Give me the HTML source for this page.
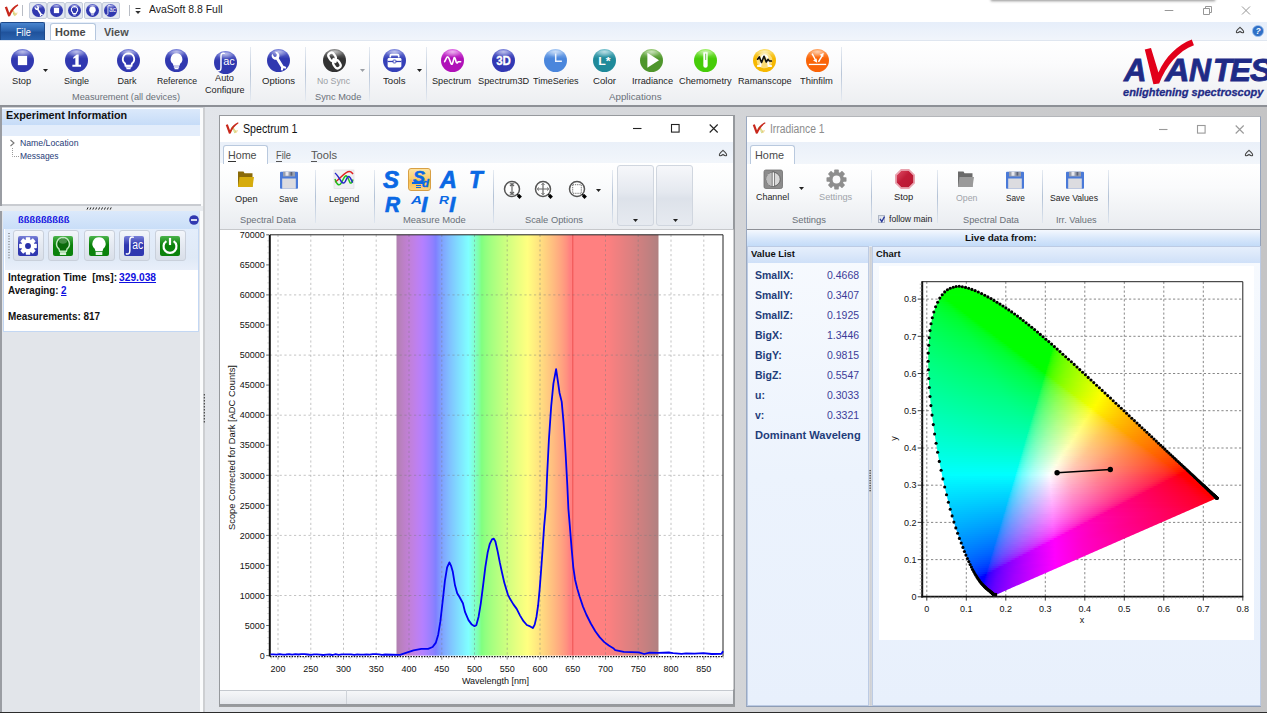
<!DOCTYPE html>
<html><head><meta charset="utf-8"><title>AvaSoft 8.8 Full</title>
<style>
html,body{margin:0;padding:0;overflow:hidden;}
#root{position:absolute;left:0;top:0;width:1267px;height:713px;overflow:hidden;background:#e2e5ea;}
body{width:1267px;height:713px;overflow:hidden;position:relative;background:#e2e5ea;font-family:"Liberation Sans",sans-serif;}
.b{position:absolute;box-sizing:border-box;}
.t{position:absolute;white-space:nowrap;transform-origin:0 50%;}
svg{position:absolute;overflow:visible;}
</style></head><body><div id="root">
<div class="b" style="left:0px;top:0px;width:1267px;height:22px;background:#fff;"></div>
<div class="b" style="left:992px;top:-3px;width:222px;height:3px;background:#999;box-shadow:0 0 2.500px 1.200px rgba(0,0,0,.380);"></div>
<div class="t" style="left:148.7px;top:3.0px;font-size:11px;line-height:13.2px;color:#1a1a1a;transform:scaleX(0.950);">AvaSoft 8.8 Full</div>
<div class="b" style="left:22px;top:5px;width:1px;height:11px;background:#b8bcc4;"></div>
<div class="b" style="left:129px;top:5px;width:1px;height:11px;background:#b8bcc4;"></div>
<div class="b" style="left:0px;top:22px;width:1267px;height:18px;background:linear-gradient(#e6eefa,#f1f5fb);"></div>
<div class="b" style="left:0px;top:22px;width:45px;height:18px;background:linear-gradient(#4a86cf,#2a62ad 45%,#1f529c 55%,#2b63ae);border-radius:2px 2px 0 0;border:1px solid #1d4a8c;border-bottom:none;"></div>
<div class="t" style="left:15.6px;top:25.8px;font-size:11px;line-height:13.2px;color:#fff;transform:scaleX(0.835);">File</div>
<div class="b" style="left:50px;top:23px;width:46px;height:18px;background:#fff;border:1px solid #b5c7de;border-bottom:none;border-radius:3px 3px 0 0;"></div>
<div class="t" style="left:55.0px;top:26.0px;font-size:11px;line-height:13.2px;color:#484848;font-weight:bold;transform:scaleX(0.998);">Home</div>
<div class="t" style="left:104.3px;top:26.0px;font-size:11px;line-height:13.2px;color:#505050;font-weight:bold;transform:scaleX(0.993);">View</div>
<div class="b" style="left:0px;top:40px;width:1267px;height:65.5px;background:linear-gradient(#ffffff,#fbfbfc 35%,#eceef1 100%);border-top:1px solid #dfe6f0;"></div>
<div class="b" style="left:0px;top:105.3px;width:1267px;height:1.7px;background:#8d9096;"></div>
<div class="b" style="left:0px;top:107px;width:1267px;height:2px;background:linear-gradient(#c9ccd1,#e2e5ea);"></div>
<div class="b" style="left:250.1px;top:47px;width:1px;height:54px;background:linear-gradient(#e6ebf2,#b9c6d8 50%,#e6ebf2);"></div>
<div class="b" style="left:304.5px;top:47px;width:1px;height:54px;background:linear-gradient(#e6ebf2,#b9c6d8 50%,#e6ebf2);"></div>
<div class="b" style="left:368.9px;top:47px;width:1px;height:54px;background:linear-gradient(#e6ebf2,#b9c6d8 50%,#e6ebf2);"></div>
<div class="b" style="left:425.8px;top:47px;width:1px;height:54px;background:linear-gradient(#e6ebf2,#b9c6d8 50%,#e6ebf2);"></div>
<div class="b" style="left:840.7px;top:47px;width:1px;height:54px;background:linear-gradient(#e6ebf2,#b9c6d8 50%,#e6ebf2);"></div>
<div class="t" style="left:11.6px;top:75.8px;font-size:9px;line-height:10.8px;color:#1e1e1e;transform:scaleX(1.032);">Stop</div>
<div class="t" style="left:63.8px;top:75.8px;font-size:9px;line-height:10.8px;color:#1e1e1e;transform:scaleX(0.999);">Single</div>
<div class="t" style="left:117.6px;top:75.8px;font-size:9px;line-height:10.8px;color:#1e1e1e;transform:scaleX(1.000);">Dark</div>
<div class="t" style="left:156.5px;top:75.8px;font-size:9px;line-height:10.8px;color:#1e1e1e;transform:scaleX(0.966);">Reference</div>
<div class="t" style="left:214.8px;top:73.2px;font-size:9px;line-height:10.8px;color:#1e1e1e;transform:scaleX(1.021);">Auto</div>
<div class="t" style="left:205.0px;top:84.6px;font-size:9px;line-height:10.8px;color:#1e1e1e;transform:scaleX(1.017);clip-path:inset(0 0 1.700px 0);">Configure</div>
<div class="t" style="left:261.5px;top:75.8px;font-size:9px;line-height:10.8px;color:#1e1e1e;transform:scaleX(1.064);">Options</div>
<div class="t" style="left:317.0px;top:75.8px;font-size:9px;line-height:10.8px;color:#9a9ea4;transform:scaleX(0.970);">No Sync</div>
<div class="t" style="left:383.3px;top:75.8px;font-size:9px;line-height:10.8px;color:#1e1e1e;transform:scaleX(1.071);">Tools</div>
<div class="t" style="left:431.8px;top:75.8px;font-size:9px;line-height:10.8px;color:#1e1e1e;transform:scaleX(1.018);">Spectrum</div>
<div class="t" style="left:477.6px;top:75.8px;font-size:9px;line-height:10.8px;color:#1e1e1e;transform:scaleX(1.024);">Spectrum3D</div>
<div class="t" style="left:533.0px;top:75.8px;font-size:9px;line-height:10.8px;color:#1e1e1e;transform:scaleX(1.007);">TimeSeries</div>
<div class="t" style="left:592.5px;top:75.8px;font-size:9px;line-height:10.8px;color:#1e1e1e;transform:scaleX(1.069);">Color</div>
<div class="t" style="left:631.5px;top:75.8px;font-size:9px;line-height:10.8px;color:#1e1e1e;transform:scaleX(1.025);">Irradiance</div>
<div class="t" style="left:679.3px;top:75.8px;font-size:9px;line-height:10.8px;color:#1e1e1e;transform:scaleX(1.023);">Chemometry</div>
<div class="t" style="left:737.7px;top:75.8px;font-size:9px;line-height:10.8px;color:#1e1e1e;transform:scaleX(1.011);">Ramanscope</div>
<div class="t" style="left:799.5px;top:75.8px;font-size:9px;line-height:10.8px;color:#1e1e1e;transform:scaleX(1.041);">Thinfilm</div>
<div class="t" style="left:71.5px;top:92.2px;font-size:9px;line-height:10.8px;color:#6a7078;transform:scaleX(1.023);">Measurement (all devices)</div>
<div class="t" style="left:314.5px;top:92.2px;font-size:9px;line-height:10.8px;color:#6a7078;transform:scaleX(1.028);">Sync Mode</div>
<div class="t" style="left:608.5px;top:92.2px;font-size:9px;line-height:10.8px;color:#6a7078;transform:scaleX(1.082);">Applications</div>
<svg style="left:43.3px;top:69.0px" width="5" height="3"><path d="M0 0h5L2.5 3z" fill="#222"/></svg>
<svg style="left:360.1px;top:69.0px" width="5" height="3"><path d="M0 0h5L2.5 3z" fill="#9a9ea4"/></svg>
<svg style="left:416.7px;top:69.0px" width="5" height="3"><path d="M0 0h5L2.5 3z" fill="#222"/></svg>
<svg style="left:1160px;top:3px" width="100" height="16"><path d="M4.7 7.5h8.6" stroke="#979797" stroke-width="1" fill="none"/><path d="M43.5 5.5h6v6h-6z M45.5 5.5v-2h6v6h-2" stroke="#979797" stroke-width="1" fill="none"/><path d="M82 3.5l8 8M90 3.5l-8 8" stroke="#979797" stroke-width="1" fill="none"/></svg>
<svg style="left:1235px;top:26px" width="10" height="8"><path d="M1.5 6.5c-1-1.5 1.5-3.5 3.5-5.2c2 1.7 4.500 3.7 3.5 5.2c-1 .5-2 .2-3.5-1c-1.500 1.200-2.500 1.500-3.500 1z" fill="none" stroke="#444" stroke-width="1.1"/></svg>
<svg style="left:1251.500px;top:24.5px" width="12" height="12"><circle cx="6" cy="6" r="5.6" fill="#2f6fc6" stroke="#9cc0ee" stroke-width="0.8"/><text x="6" y="9" font-size="8.500" font-weight="bold" font-style="italic" fill="#fff" text-anchor="middle" font-family="Liberation Sans">?</text></svg>
<div class="b" style="left:205px;top:107px;width:1062px;height:606px;background:linear-gradient(90deg,#e2e5ea,#c4c4c5);"></div>
<div class="b" style="left:0px;top:107px;width:2px;height:606px;background:#9a9da3;"></div>
<div class="b" style="left:2px;top:108px;width:199px;height:98px;background:#fff;"></div>
<div class="b" style="left:2px;top:108.5px;width:199px;height:16.5px;background:linear-gradient(#dbe9fb,#c6dcf8);"></div>
<div class="b" style="left:2px;top:125px;width:199px;height:10.8px;background:#e3edfb;"></div>
<div class="t" style="left:5.8px;top:109.2px;font-size:10.5px;line-height:12.6px;color:#111;font-weight:bold;transform:scaleX(1.028);">Experiment Information</div>
<div class="b" style="left:200.3px;top:108px;width:2.4px;height:605px;background:#fafbfc;"></div>
<div class="b" style="left:202.7px;top:108px;width:2.3px;height:605px;background:#cdcfd2;"></div>
<div class="b" style="left:2px;top:204px;width:199px;height:1.6px;background:#c9ccd1;"></div>
<div class="b" style="left:0px;top:205.5px;width:203px;height:5.5px;background:#e9ecf0;"></div>
<svg style="left:86px;top:206.5px" width="30" height="4"><path d="M1.0 2.6l1-2.2" stroke="#222" stroke-width="1"/><path d="M3.9 2.6l1-2.2" stroke="#222" stroke-width="1"/><path d="M6.8 2.6l1-2.2" stroke="#222" stroke-width="1"/><path d="M9.7 2.6l1-2.2" stroke="#222" stroke-width="1"/><path d="M12.6 2.6l1-2.2" stroke="#222" stroke-width="1"/><path d="M15.5 2.6l1-2.2" stroke="#222" stroke-width="1"/><path d="M18.4 2.6l1-2.2" stroke="#222" stroke-width="1"/><path d="M21.3 2.6l1-2.2" stroke="#222" stroke-width="1"/><path d="M24.2 2.6l1-2.2" stroke="#222" stroke-width="1"/></svg>
<div class="t" style="left:19.5px;top:137.6px;font-size:9px;line-height:10.8px;color:#1f3c78;transform:scaleX(0.966);">Name/Location</div>
<div class="t" style="left:19.5px;top:150.6px;font-size:9px;line-height:10.8px;color:#1f3c78;transform:scaleX(0.939);">Messages</div>
<svg style="left:9px;top:139px" width="8" height="8"><path d="M1.5 1l3.5 3l-3.500 3" stroke="#777" stroke-width="1.1" fill="none"/></svg>
<svg style="left:11px;top:148px" width="9" height="10"><path d="M1.5 0v8.500h7" stroke="#999" stroke-width="1" stroke-dasharray="1 1" fill="none"/></svg>
<div class="b" style="left:3.2px;top:211px;width:195.5px;height:120.5px;background:#fff;border:1.500px solid #c3d7f3;"></div>
<div class="b" style="left:3.2px;top:211px;width:195.5px;height:18px;background:linear-gradient(#dbe9fb,#c9def8);"></div>
<div class="b" style="left:4.5px;top:229px;width:193px;height:40.5px;background:linear-gradient(#e3edfb,#dfe9f6 70%,#e9effa);"></div>
<div class="t" style="left:17.5px;top:214.3px;font-size:9.5px;line-height:11.4px;color:#1010e0;font-weight:bold;transform:scaleX(0.986);">&#223;&#223;&#223;&#223;&#223;&#223;&#223;&#223;&#223;</div>
<svg style="left:189px;top:214.5px" width="10" height="10"><circle cx="5" cy="5" r="4.800" fill="#3038b0"/><rect x="2" y="4.200" width="6" height="1.600" fill="#fff"/></svg>
<svg style="left:7.500px;top:232px" width="3" height="28"><rect x="0.5" y="1.0" width="1" height="1" fill="#555"/><rect x="0.5" y="3.7" width="1" height="1" fill="#555"/><rect x="0.5" y="6.4" width="1" height="1" fill="#555"/><rect x="0.5" y="9.1" width="1" height="1" fill="#555"/><rect x="0.5" y="11.8" width="1" height="1" fill="#555"/><rect x="0.5" y="14.5" width="1" height="1" fill="#555"/><rect x="0.5" y="17.2" width="1" height="1" fill="#555"/><rect x="0.5" y="19.9" width="1" height="1" fill="#555"/><rect x="0.5" y="22.6" width="1" height="1" fill="#555"/><rect x="0.5" y="25.3" width="1" height="1" fill="#555"/></svg>
<div class="b" style="left:12.9px;top:230.3px;width:31px;height:31px;background:linear-gradient(#f3f6fb,#e4e9f1 50%,#d9dfe9);border:1px solid #c9d0db;border-radius:3px;"></div>
<div class="b" style="left:48.3px;top:230.3px;width:31px;height:31px;background:linear-gradient(#f3f6fb,#e4e9f1 50%,#d9dfe9);border:1px solid #c9d0db;border-radius:3px;"></div>
<div class="b" style="left:83.7px;top:230.3px;width:31px;height:31px;background:linear-gradient(#f3f6fb,#e4e9f1 50%,#d9dfe9);border:1px solid #c9d0db;border-radius:3px;"></div>
<div class="b" style="left:119.1px;top:230.3px;width:31px;height:31px;background:linear-gradient(#f3f6fb,#e4e9f1 50%,#d9dfe9);border:1px solid #c9d0db;border-radius:3px;"></div>
<div class="b" style="left:154.5px;top:230.3px;width:31px;height:31px;background:linear-gradient(#f3f6fb,#e4e9f1 50%,#d9dfe9);border:1px solid #c9d0db;border-radius:3px;"></div>
<div class="t" style="left:7.5px;top:271.9px;font-size:10px;line-height:12.0px;color:#111;font-weight:bold;transform:scaleX(1.013);">Integration Time&nbsp; [ms]:</div>
<div class="t" style="left:119.0px;top:271.9px;font-size:10px;line-height:12.0px;color:#1010e0;font-weight:bold;transform:scaleX(1.024);text-decoration:underline;">329.038</div>
<div class="t" style="left:7.5px;top:284.6px;font-size:10px;line-height:12.0px;color:#111;font-weight:bold;transform:scaleX(0.974);">Averaging:</div>
<div class="t" style="left:60.5px;top:284.6px;font-size:10px;line-height:12.0px;color:#1010e0;font-weight:bold;transform:scaleX(0.989);text-decoration:underline;">2</div>
<div class="t" style="left:7.5px;top:310.7px;font-size:10px;line-height:12.0px;color:#111;font-weight:bold;transform:scaleX(0.991);">Measurements: 817</div>
<svg style="left:202.5px;top:394px" width="3" height="30"><rect x="0.8" y="0" width="1" height="1.500" fill="#333"/><rect x="0.8" y="3" width="1" height="1.500" fill="#333"/><rect x="0.8" y="6" width="1" height="1.500" fill="#333"/><rect x="0.8" y="9" width="1" height="1.500" fill="#333"/><rect x="0.8" y="12" width="1" height="1.500" fill="#333"/><rect x="0.8" y="15" width="1" height="1.500" fill="#333"/><rect x="0.8" y="18" width="1" height="1.500" fill="#333"/><rect x="0.8" y="21" width="1" height="1.500" fill="#333"/><rect x="0.8" y="24" width="1" height="1.500" fill="#333"/><rect x="0.8" y="27" width="1" height="1.500" fill="#333"/></svg>
<div class="b" style="left:0px;top:711.6px;width:1267px;height:1.4px;background:#2c2c2c;"></div>
<div class="b" style="left:218.7px;top:114.7px;width:516.8px;height:592.3px;background:#9b9c9e;"></div>
<div class="b" style="left:219px;top:115px;width:515.5px;height:590.5px;background:#fff;border:1px solid #96999d;border-right-width:2px;border-bottom-width:2px;"></div>
<div class="t" style="left:243.0px;top:121.6px;font-size:12px;line-height:14.4px;color:#111;transform:scaleX(0.888);">Spectrum 1</div>
<div class="b" style="left:220px;top:141.5px;width:512.5px;height:21.5px;background:linear-gradient(#eaf0f9,#f2f6fb);"></div>
<div class="b" style="left:220px;top:163px;width:512.5px;height:65.5px;background:linear-gradient(#ffffff,#fafbfc 35%,#e9ecf0 100%);"></div>
<div class="b" style="left:220px;top:228.5px;width:512.5px;height:1.5px;background:#8d9096;"></div>
<svg style="left:629.5px;top:121px" width="100" height="16"><path d="M3 7.5h8.500" stroke="#222" stroke-width="1.100" fill="none"/><rect x="41.500" y="3.500" width="7.600" height="7.600" stroke="#222" stroke-width="1.100" fill="none"/><path d="M79.700 3.500l8 8M87.700 3.500l-8 8" stroke="#222" stroke-width="1.100" fill="none"/></svg>
<svg style="left:718.0px;top:148.5px" width="10" height="8"><path d="M1.5 6.5c-1-1.5 1.5-3.5 3.5-5.2c2 1.7 4.500 3.700 3.500 5.200c-1 .5-2 .2-3.500-1c-1.500 1.200-2.500 1.500-3.500 1z" fill="none" stroke="#444" stroke-width="1.1"/></svg>
<div class="b" style="left:746px;top:115.8px;width:514.6px;height:591.2px;background:#fff;border:1px solid #9aa9c2;border-top-color:#b4b6ba;border-right-color:#93a2bb;border-bottom-color:#8e9db6;"></div>
<div class="t" style="left:770.0px;top:122.4px;font-size:12px;line-height:14.4px;color:#8c8c8c;transform:scaleX(0.860);">Irradiance 1</div>
<div class="b" style="left:747px;top:142.3px;width:512.6px;height:21.5px;background:linear-gradient(#eaf0f9,#f2f6fb);"></div>
<div class="b" style="left:747px;top:163.8px;width:512.6px;height:65.5px;background:linear-gradient(#ffffff,#fafbfc 35%,#e9ecf0 100%);"></div>
<div class="b" style="left:747px;top:229.3px;width:512.6px;height:1.5px;background:#8d9096;"></div>
<svg style="left:1155.6px;top:121.8px" width="100" height="16"><path d="M3 7.5h8.500" stroke="#9a9a9a" stroke-width="1.100" fill="none"/><rect x="41.500" y="3.500" width="7.600" height="7.600" stroke="#9a9a9a" stroke-width="1.100" fill="none"/><path d="M79.700 3.500l8 8M87.700 3.500l-8 8" stroke="#9a9a9a" stroke-width="1.100" fill="none"/></svg>
<svg style="left:1244.1px;top:149.3px" width="10" height="8"><path d="M1.5 6.5c-1-1.5 1.5-3.5 3.5-5.2c2 1.7 4.500 3.700 3.500 5.200c-1 .5-2 .2-3.500-1c-1.500 1.200-2.500 1.500-3.500 1z" fill="none" stroke="#444" stroke-width="1.1"/></svg>
<div class="b" style="left:223px;top:144.5px;width:45px;height:19.5px;background:#fff;border:1px solid #b9c9de;border-bottom:none;border-radius:3px 3px 0 0;"></div>
<div class="t" style="left:228.0px;top:149.1px;font-size:11.5px;line-height:13.8px;color:#4a4a4a;transform:scaleX(0.929);">Home</div>
<div class="b" style="left:228px;top:160.5px;width:7.5px;height:0.9px;background:#333;"></div>
<div class="t" style="left:276.0px;top:149.1px;font-size:11.5px;line-height:13.8px;color:#555;transform:scaleX(0.810);">File</div>
<div class="b" style="left:276px;top:160.5px;width:5.5px;height:0.9px;background:#555;"></div>
<div class="t" style="left:310.5px;top:149.1px;font-size:11.5px;line-height:13.8px;color:#555;transform:scaleX(0.969);">Tools</div>
<div class="b" style="left:310.5px;top:160.5px;width:6px;height:0.9px;background:#555;"></div>
<div class="b" style="left:315.3px;top:170px;width:1px;height:53px;background:linear-gradient(#e6ebf2,#b3c2d6 50%,#dfe6ef);"></div>
<div class="b" style="left:373.9px;top:170px;width:1px;height:53px;background:linear-gradient(#e6ebf2,#b3c2d6 50%,#dfe6ef);"></div>
<div class="b" style="left:492.8px;top:170px;width:1px;height:53px;background:linear-gradient(#e6ebf2,#b3c2d6 50%,#dfe6ef);"></div>
<div class="b" style="left:612.3px;top:170px;width:1px;height:53px;background:linear-gradient(#e6ebf2,#b3c2d6 50%,#dfe6ef);"></div>
<div class="t" style="left:234.5px;top:193.8px;font-size:9px;line-height:10.8px;color:#1e1e1e;transform:scaleX(1.022);">Open</div>
<div class="t" style="left:279.0px;top:193.8px;font-size:9px;line-height:10.8px;color:#1e1e1e;transform:scaleX(0.926);">Save</div>
<div class="t" style="left:329.0px;top:193.8px;font-size:9px;line-height:10.8px;color:#1e1e1e;transform:scaleX(1.006);">Legend</div>
<div class="t" style="left:239.6px;top:214.5px;font-size:9px;line-height:10.8px;color:#6a7078;transform:scaleX(1.023);">Spectral Data</div>
<div class="t" style="left:403.4px;top:214.5px;font-size:9px;line-height:10.8px;color:#6a7078;transform:scaleX(1.046);">Measure Mode</div>
<div class="t" style="left:524.5px;top:214.5px;font-size:9px;line-height:10.8px;color:#6a7078;transform:scaleX(1.035);">Scale Options</div>
<svg style="left:595.5px;top:188.7px" width="5" height="3"><path d="M0 0h5L2.5 3z" fill="#222"/></svg>
<div class="b" style="left:617px;top:165.3px;width:36.8px;height:60.7px;background:linear-gradient(#f6f7fa,#e4e8ef 45%,#dde2ea 55%,#e6eaf0);border:1px solid #d0d6df;border-radius:3px;"></div>
<svg style="left:633.1px;top:219.3px" width="5" height="3"><path d="M0 0h5L2.5 3z" fill="#222"/></svg>
<div class="b" style="left:656.4px;top:165.3px;width:36.8px;height:60.7px;background:linear-gradient(#f6f7fa,#e4e8ef 45%,#dde2ea 55%,#e6eaf0);border:1px solid #d0d6df;border-radius:3px;"></div>
<svg style="left:672.5px;top:219.3px" width="5" height="3"><path d="M0 0h5L2.5 3z" fill="#222"/></svg>
<div class="b" style="left:220px;top:689.5px;width:512.5px;height:14.5px;background:linear-gradient(#f6f7f9,#e4e7ec);border-top:1px solid #c5c9cf;"></div>
<div class="b" style="left:345.5px;top:690px;width:1px;height:14px;background:#cfd3d9;"></div>
<div class="b" style="left:750px;top:144.5px;width:45px;height:19.5px;background:#fff;border:1px solid #b9c9de;border-bottom:none;border-radius:3px 3px 0 0;"></div>
<div class="t" style="left:755.0px;top:149.4px;font-size:11.5px;line-height:13.8px;color:#4a4a4a;transform:scaleX(0.945);">Home</div>
<div class="b" style="left:871.0px;top:170px;width:1px;height:53px;background:linear-gradient(#e6ebf2,#b3c2d6 50%,#dfe6ef);"></div>
<div class="b" style="left:936.9px;top:170px;width:1px;height:53px;background:linear-gradient(#e6ebf2,#b3c2d6 50%,#dfe6ef);"></div>
<div class="b" style="left:1042.1px;top:170px;width:1px;height:53px;background:linear-gradient(#e6ebf2,#b3c2d6 50%,#dfe6ef);"></div>
<div class="b" style="left:1108.2px;top:170px;width:1px;height:53px;background:linear-gradient(#e6ebf2,#b3c2d6 50%,#dfe6ef);"></div>
<div class="t" style="left:756.0px;top:192.1px;font-size:9px;line-height:10.8px;color:#1e1e1e;transform:scaleX(0.990);">Channel</div>
<div class="t" style="left:819.0px;top:192.1px;font-size:9px;line-height:10.8px;color:#a0a4aa;transform:scaleX(1.021);">Settings</div>
<div class="t" style="left:894.0px;top:192.1px;font-size:9px;line-height:10.8px;color:#1e1e1e;transform:scaleX(1.042);">Stop</div>
<div class="t" style="left:956.3px;top:192.6px;font-size:9px;line-height:10.8px;color:#a0a4aa;transform:scaleX(0.977);">Open</div>
<div class="t" style="left:1005.5px;top:192.6px;font-size:9px;line-height:10.8px;color:#1e1e1e;transform:scaleX(0.916);">Save</div>
<div class="t" style="left:1050.2px;top:192.6px;font-size:9px;line-height:10.8px;color:#1e1e1e;transform:scaleX(0.963);">Save Values</div>
<div class="t" style="left:792.0px;top:215.1px;font-size:9px;line-height:10.8px;color:#6a7078;transform:scaleX(1.046);">Settings</div>
<div class="t" style="left:889.0px;top:213.8px;font-size:9px;line-height:10.8px;color:#1e1e1e;transform:scaleX(0.960);">follow main</div>
<div class="t" style="left:962.5px;top:215.1px;font-size:9px;line-height:10.8px;color:#6a7078;transform:scaleX(1.027);">Spectral Data</div>
<div class="t" style="left:1055.7px;top:215.1px;font-size:9px;line-height:10.8px;color:#6a7078;transform:scaleX(1.019);">Irr. Values</div>
<svg style="left:798.7px;top:187.0px" width="5" height="3"><path d="M0 0h5L2.5 3z" fill="#222"/></svg>
<div class="b" style="left:877.5px;top:215.3px;width:7.8px;height:7.8px;background:linear-gradient(135deg,#d8dde6,#f4f6fa);border:1px solid #aeb6c4;"></div>
<svg style="left:878.5px;top:216px" width="7" height="7"><path d="M1 2.800l1.800 2.800l2.700-5" stroke="#2a3a9a" stroke-width="1.300" fill="none"/></svg>
<div class="b" style="left:747px;top:230px;width:513px;height:16px;background:linear-gradient(#f4f8fe,#d9e8fb 50%,#c3dbf8);"></div>
<div class="t" style="left:965.0px;top:232.3px;font-size:9.5px;line-height:11.4px;color:#111;font-weight:bold;transform:scaleX(1.050);">Live data from:</div>
<div class="b" style="left:747px;top:246px;width:513px;height:459px;background:#dde8f6;"></div>
<div class="b" style="left:747px;top:246px;width:122px;height:460.2px;background:linear-gradient(#f7fafe,#ecf3fd 50%,#e8f0fc);border:1px solid #bccbe4;"></div>
<div class="b" style="left:748px;top:246.5px;width:120px;height:16px;background:linear-gradient(#e6effc,#cfe0f8);"></div>
<div class="t" style="left:750.5px;top:248.1px;font-size:9.5px;line-height:11.4px;color:#111;font-weight:bold;transform:scaleX(0.992);">Value List</div>
<div class="b" style="left:871.5px;top:246px;width:389px;height:460.2px;background:linear-gradient(#f7fafe,#ecf3fd 50%,#e8f0fc);border:1px solid #bccbe4;"></div>
<div class="b" style="left:872.5px;top:246.5px;width:387.5px;height:16px;background:linear-gradient(#e6effc,#cfe0f8);"></div>
<div class="t" style="left:876.0px;top:248.1px;font-size:9.5px;line-height:11.4px;color:#111;font-weight:bold;transform:scaleX(0.988);">Chart</div>
<div class="b" style="left:878.6px;top:266px;width:375.4px;height:374px;background:#fff;"></div>
<div class="b" style="left:869.4px;top:246.5px;width:2.5px;height:459px;background:linear-gradient(90deg,#e4e6ea,#cfd0d3 40%,#d6d8dc);"></div>
<svg style="left:869.3px;top:470px" width="3" height="24"><rect x="0.5" y="0.0" width="1.200" height="1.300" fill="#333"/><rect x="0.5" y="2.5" width="1.200" height="1.300" fill="#333"/><rect x="0.5" y="5.0" width="1.200" height="1.300" fill="#333"/><rect x="0.5" y="7.5" width="1.200" height="1.300" fill="#333"/><rect x="0.5" y="10.0" width="1.200" height="1.300" fill="#333"/><rect x="0.5" y="12.5" width="1.200" height="1.300" fill="#333"/><rect x="0.5" y="15.0" width="1.200" height="1.300" fill="#333"/><rect x="0.5" y="17.5" width="1.200" height="1.300" fill="#333"/><rect x="0.5" y="20.0" width="1.200" height="1.300" fill="#333"/></svg>
<div class="t" style="left:755.4px;top:269.3px;font-size:11px;line-height:13.2px;color:#1f3d7a;font-weight:bold;transform:scaleX(0.955);">SmallX:</div>
<div class="t" style="left:827.4px;top:269.3px;font-size:11px;line-height:13.2px;color:#3c3c98;transform:scaleX(0.954);">0.4668</div>
<div class="t" style="left:755.4px;top:289.2px;font-size:11px;line-height:13.2px;color:#1f3d7a;font-weight:bold;transform:scaleX(0.955);">SmallY:</div>
<div class="t" style="left:827.4px;top:289.2px;font-size:11px;line-height:13.2px;color:#3c3c98;transform:scaleX(0.954);">0.3407</div>
<div class="t" style="left:755.4px;top:309.2px;font-size:11px;line-height:13.2px;color:#1f3d7a;font-weight:bold;transform:scaleX(0.955);">SmallZ:</div>
<div class="t" style="left:827.4px;top:309.2px;font-size:11px;line-height:13.2px;color:#3c3c98;transform:scaleX(0.954);">0.1925</div>
<div class="t" style="left:755.4px;top:329.1px;font-size:11px;line-height:13.2px;color:#1f3d7a;font-weight:bold;transform:scaleX(0.955);">BigX:</div>
<div class="t" style="left:827.4px;top:329.1px;font-size:11px;line-height:13.2px;color:#3c3c98;transform:scaleX(0.954);">1.3446</div>
<div class="t" style="left:755.4px;top:349.0px;font-size:11px;line-height:13.2px;color:#1f3d7a;font-weight:bold;transform:scaleX(0.955);">BigY:</div>
<div class="t" style="left:827.4px;top:349.0px;font-size:11px;line-height:13.2px;color:#3c3c98;transform:scaleX(0.954);">0.9815</div>
<div class="t" style="left:755.4px;top:368.9px;font-size:11px;line-height:13.2px;color:#1f3d7a;font-weight:bold;transform:scaleX(0.955);">BigZ:</div>
<div class="t" style="left:827.4px;top:368.9px;font-size:11px;line-height:13.2px;color:#3c3c98;transform:scaleX(0.954);">0.5547</div>
<div class="t" style="left:755.4px;top:388.9px;font-size:11px;line-height:13.2px;color:#1f3d7a;font-weight:bold;transform:scaleX(0.955);">u:</div>
<div class="t" style="left:827.4px;top:388.9px;font-size:11px;line-height:13.2px;color:#3c3c98;transform:scaleX(0.954);">0.3033</div>
<div class="t" style="left:755.4px;top:408.8px;font-size:11px;line-height:13.2px;color:#1f3d7a;font-weight:bold;transform:scaleX(0.955);">v:</div>
<div class="t" style="left:827.4px;top:408.8px;font-size:11px;line-height:13.2px;color:#3c3c98;transform:scaleX(0.954);">0.3321</div>
<div class="t" style="left:755.4px;top:428.7px;font-size:11px;line-height:13.2px;color:#1f3d7a;font-weight:bold;transform:scaleX(1.009);">Dominant Waveleng</div>
<svg style="left:215px;top:226px" width="520" height="480" font-family="Liberation Sans, sans-serif"><defs><linearGradient id="spg" x1="0" x2="1" y1="0" y2="0"><stop offset="0.0000" stop-color="#b080b0"/><stop offset="0.0125" stop-color="#b780bb"/><stop offset="0.0250" stop-color="#bc80c6"/><stop offset="0.0375" stop-color="#bf80d0"/><stop offset="0.0500" stop-color="#c180da"/><stop offset="0.0625" stop-color="#c080e3"/><stop offset="0.0750" stop-color="#be80ed"/><stop offset="0.0875" stop-color="#ba80f6"/><stop offset="0.1000" stop-color="#b480ff"/><stop offset="0.1125" stop-color="#aa80ff"/><stop offset="0.1250" stop-color="#9e80ff"/><stop offset="0.1375" stop-color="#9180ff"/><stop offset="0.1500" stop-color="#8080ff"/><stop offset="0.1625" stop-color="#8094ff"/><stop offset="0.1750" stop-color="#80a3ff"/><stop offset="0.1875" stop-color="#80b0ff"/><stop offset="0.2000" stop-color="#80bdff"/><stop offset="0.2125" stop-color="#80c9ff"/><stop offset="0.2250" stop-color="#80d4ff"/><stop offset="0.2375" stop-color="#80dfff"/><stop offset="0.2500" stop-color="#80eaff"/><stop offset="0.2625" stop-color="#80f5ff"/><stop offset="0.2750" stop-color="#80ffff"/><stop offset="0.2875" stop-color="#80ffe5"/><stop offset="0.3000" stop-color="#80ffc9"/><stop offset="0.3125" stop-color="#80ffaa"/><stop offset="0.3250" stop-color="#80ff80"/><stop offset="0.3375" stop-color="#8fff80"/><stop offset="0.3500" stop-color="#9aff80"/><stop offset="0.3625" stop-color="#a5ff80"/><stop offset="0.3750" stop-color="#aeff80"/><stop offset="0.3875" stop-color="#b7ff80"/><stop offset="0.4000" stop-color="#c0ff80"/><stop offset="0.4125" stop-color="#c9ff80"/><stop offset="0.4250" stop-color="#d1ff80"/><stop offset="0.4375" stop-color="#d9ff80"/><stop offset="0.4500" stop-color="#e1ff80"/><stop offset="0.4625" stop-color="#e9ff80"/><stop offset="0.4750" stop-color="#f0ff80"/><stop offset="0.4875" stop-color="#f8ff80"/><stop offset="0.5000" stop-color="#ffff80"/><stop offset="0.5125" stop-color="#fff780"/><stop offset="0.5250" stop-color="#ffef80"/><stop offset="0.5375" stop-color="#ffe780"/><stop offset="0.5500" stop-color="#ffdf80"/><stop offset="0.5625" stop-color="#ffd680"/><stop offset="0.5750" stop-color="#ffcd80"/><stop offset="0.5875" stop-color="#ffc480"/><stop offset="0.6000" stop-color="#ffbb80"/><stop offset="0.6125" stop-color="#ffb180"/><stop offset="0.6250" stop-color="#ffa780"/><stop offset="0.6375" stop-color="#ff9c80"/><stop offset="0.6500" stop-color="#ff9080"/><stop offset="0.6625" stop-color="#ff8080"/><stop offset="0.6750" stop-color="#ff8080"/><stop offset="0.6875" stop-color="#ff8080"/><stop offset="0.7000" stop-color="#ff8080"/><stop offset="0.7125" stop-color="#ff8080"/><stop offset="0.7250" stop-color="#ff8080"/><stop offset="0.7375" stop-color="#ff8080"/><stop offset="0.7500" stop-color="#ff8080"/><stop offset="0.7625" stop-color="#ff8080"/><stop offset="0.7750" stop-color="#ff8080"/><stop offset="0.7875" stop-color="#ff8080"/><stop offset="0.8000" stop-color="#ff8080"/><stop offset="0.8125" stop-color="#fb8080"/><stop offset="0.8250" stop-color="#f68080"/><stop offset="0.8375" stop-color="#f18080"/><stop offset="0.8500" stop-color="#ed8080"/><stop offset="0.8625" stop-color="#e88080"/><stop offset="0.8750" stop-color="#e38080"/><stop offset="0.8875" stop-color="#df8080"/><stop offset="0.9000" stop-color="#da8080"/><stop offset="0.9125" stop-color="#d58080"/><stop offset="0.9250" stop-color="#d08080"/><stop offset="0.9375" stop-color="#cb8080"/><stop offset="0.9500" stop-color="#c68080"/><stop offset="0.9625" stop-color="#c18080"/><stop offset="0.9750" stop-color="#bb8080"/><stop offset="0.9875" stop-color="#b68080"/><stop offset="1.0000" stop-color="#b08080"/></linearGradient></defs><rect x="5.0" y="3.5" width="513.5" height="460" fill="#fff"/><rect x="181.5" y="8.8" width="262.0" height="420.8" fill="url(#spg)"/><g stroke-width="0.9" stroke-dasharray="2.2 2.600" fill="none"><path d="M63.0 8.8V429.6" stroke="#7a7a7a" stroke-opacity="0.5"/><path d="M95.8 8.8V429.6" stroke="#7a7a7a" stroke-opacity="0.5"/><path d="M128.5 8.8V429.6" stroke="#7a7a7a" stroke-opacity="0.5"/><path d="M161.2 8.8V429.6" stroke="#7a7a7a" stroke-opacity="0.5"/><path d="M194.0 8.8V429.6" stroke="#7a7a7a" stroke-opacity="0.5"/><path d="M226.8 8.8V429.6" stroke="#7a7a7a" stroke-opacity="0.5"/><path d="M259.5 8.8V429.6" stroke="#7a7a7a" stroke-opacity="0.5"/><path d="M292.2 8.8V429.6" stroke="#7a7a7a" stroke-opacity="0.5"/><path d="M325.0 8.8V429.6" stroke="#7a7a7a" stroke-opacity="0.5"/><path d="M390.5 8.8V429.6" stroke="#7a7a7a" stroke-opacity="0.5"/><path d="M423.2 8.8V429.6" stroke="#7a7a7a" stroke-opacity="0.5"/><path d="M456.0 8.8V429.6" stroke="#7a7a7a" stroke-opacity="0.5"/><path d="M488.8 8.8V429.6" stroke="#7a7a7a" stroke-opacity="0.5"/><path d="M55.0 369.5H508.0" stroke="#7a7a7a" stroke-opacity="0.5"/><path d="M55.0 309.4H508.0" stroke="#7a7a7a" stroke-opacity="0.5"/><path d="M55.0 249.3H508.0" stroke="#7a7a7a" stroke-opacity="0.5"/><path d="M55.0 189.2H508.0" stroke="#7a7a7a" stroke-opacity="0.5"/><path d="M55.0 129.1H508.0" stroke="#7a7a7a" stroke-opacity="0.5"/><path d="M55.0 68.9H508.0" stroke="#7a7a7a" stroke-opacity="0.5"/></g><path d="M357.8 8.8V429.6" stroke="#e02828" stroke-opacity="0.600" stroke-width="0.900"/><path d="M54.8 8.8V430.6" stroke="#111" stroke-width="2"/><path d="M55.0 8.8H508.0V430.6" stroke="#222" stroke-width="1" fill="none"/><path d="M55.0 430.6H508.0" stroke="#111" stroke-width="1.2" stroke-dasharray="1.500 1.200"/><text x="49.8" y="432.8" font-size="9" text-anchor="end" fill="#111">0</text><text x="49.8" y="402.7" font-size="9" text-anchor="end" fill="#111">5000</text><text x="49.8" y="372.7" font-size="9" text-anchor="end" fill="#111">10000</text><text x="49.8" y="342.6" font-size="9" text-anchor="end" fill="#111">15000</text><text x="49.8" y="312.6" font-size="9" text-anchor="end" fill="#111">20000</text><text x="49.8" y="282.5" font-size="9" text-anchor="end" fill="#111">25000</text><text x="49.8" y="252.5" font-size="9" text-anchor="end" fill="#111">30000</text><text x="49.8" y="222.4" font-size="9" text-anchor="end" fill="#111">35000</text><text x="49.8" y="192.4" font-size="9" text-anchor="end" fill="#111">40000</text><text x="49.8" y="162.3" font-size="9" text-anchor="end" fill="#111">45000</text><text x="49.8" y="132.2" font-size="9" text-anchor="end" fill="#111">50000</text><text x="49.8" y="102.2" font-size="9" text-anchor="end" fill="#111">55000</text><text x="49.8" y="72.1" font-size="9" text-anchor="end" fill="#111">60000</text><text x="49.8" y="42.1" font-size="9" text-anchor="end" fill="#111">65000</text><text x="49.8" y="12.0" font-size="9" text-anchor="end" fill="#111">70000</text><text x="63.0" y="446.2" font-size="9" text-anchor="middle" fill="#111">200</text><text x="95.8" y="446.2" font-size="9" text-anchor="middle" fill="#111">250</text><text x="128.5" y="446.2" font-size="9" text-anchor="middle" fill="#111">300</text><text x="161.2" y="446.2" font-size="9" text-anchor="middle" fill="#111">350</text><text x="194.0" y="446.2" font-size="9" text-anchor="middle" fill="#111">400</text><text x="226.8" y="446.2" font-size="9" text-anchor="middle" fill="#111">450</text><text x="259.5" y="446.2" font-size="9" text-anchor="middle" fill="#111">500</text><text x="292.2" y="446.2" font-size="9" text-anchor="middle" fill="#111">550</text><text x="325.0" y="446.2" font-size="9" text-anchor="middle" fill="#111">600</text><text x="357.8" y="446.2" font-size="9" text-anchor="middle" fill="#111">650</text><text x="390.5" y="446.2" font-size="9" text-anchor="middle" fill="#111">700</text><text x="423.2" y="446.2" font-size="9" text-anchor="middle" fill="#111">750</text><text x="456.0" y="446.2" font-size="9" text-anchor="middle" fill="#111">800</text><text x="488.8" y="446.2" font-size="9" text-anchor="middle" fill="#111">850</text><path d="M51.2 429.6H54.0" stroke="#555" stroke-width="0.9"/><path d="M51.2 399.5H54.0" stroke="#555" stroke-width="0.9"/><path d="M51.2 369.5H54.0" stroke="#555" stroke-width="0.9"/><path d="M51.2 339.4H54.0" stroke="#555" stroke-width="0.9"/><path d="M51.2 309.4H54.0" stroke="#555" stroke-width="0.9"/><path d="M51.2 279.3H54.0" stroke="#555" stroke-width="0.9"/><path d="M51.2 249.3H54.0" stroke="#555" stroke-width="0.9"/><path d="M51.2 219.2H54.0" stroke="#555" stroke-width="0.9"/><path d="M51.2 189.2H54.0" stroke="#555" stroke-width="0.9"/><path d="M51.2 159.1H54.0" stroke="#555" stroke-width="0.9"/><path d="M51.2 129.1H54.0" stroke="#555" stroke-width="0.9"/><path d="M51.2 99.0H54.0" stroke="#555" stroke-width="0.9"/><path d="M51.2 68.9H54.0" stroke="#555" stroke-width="0.9"/><path d="M51.2 38.9H54.0" stroke="#555" stroke-width="0.9"/><path d="M51.2 8.8H54.0" stroke="#555" stroke-width="0.9"/><path d="M52.5 423.6H54.0" stroke="#999" stroke-width="0.600"/><path d="M52.5 417.6H54.0" stroke="#999" stroke-width="0.600"/><path d="M52.5 411.6H54.0" stroke="#999" stroke-width="0.600"/><path d="M52.5 405.6H54.0" stroke="#999" stroke-width="0.600"/><path d="M52.5 393.5H54.0" stroke="#999" stroke-width="0.600"/><path d="M52.5 387.5H54.0" stroke="#999" stroke-width="0.600"/><path d="M52.5 381.5H54.0" stroke="#999" stroke-width="0.600"/><path d="M52.5 375.5H54.0" stroke="#999" stroke-width="0.600"/><path d="M52.5 363.5H54.0" stroke="#999" stroke-width="0.600"/><path d="M52.5 357.5H54.0" stroke="#999" stroke-width="0.600"/><path d="M52.5 351.5H54.0" stroke="#999" stroke-width="0.600"/><path d="M52.5 345.4H54.0" stroke="#999" stroke-width="0.600"/><path d="M52.5 333.4H54.0" stroke="#999" stroke-width="0.600"/><path d="M52.5 327.4H54.0" stroke="#999" stroke-width="0.600"/><path d="M52.5 321.4H54.0" stroke="#999" stroke-width="0.600"/><path d="M52.5 315.4H54.0" stroke="#999" stroke-width="0.600"/><path d="M52.5 303.4H54.0" stroke="#999" stroke-width="0.600"/><path d="M52.5 297.4H54.0" stroke="#999" stroke-width="0.600"/><path d="M52.5 291.3H54.0" stroke="#999" stroke-width="0.600"/><path d="M52.5 285.3H54.0" stroke="#999" stroke-width="0.600"/><path d="M52.5 273.3H54.0" stroke="#999" stroke-width="0.600"/><path d="M52.5 267.3H54.0" stroke="#999" stroke-width="0.600"/><path d="M52.5 261.3H54.0" stroke="#999" stroke-width="0.600"/><path d="M52.5 255.3H54.0" stroke="#999" stroke-width="0.600"/><path d="M52.5 243.3H54.0" stroke="#999" stroke-width="0.600"/><path d="M52.5 237.2H54.0" stroke="#999" stroke-width="0.600"/><path d="M52.5 231.2H54.0" stroke="#999" stroke-width="0.600"/><path d="M52.5 225.2H54.0" stroke="#999" stroke-width="0.600"/><path d="M52.5 213.2H54.0" stroke="#999" stroke-width="0.600"/><path d="M52.5 207.2H54.0" stroke="#999" stroke-width="0.600"/><path d="M52.5 201.2H54.0" stroke="#999" stroke-width="0.600"/><path d="M52.5 195.2H54.0" stroke="#999" stroke-width="0.600"/><path d="M52.5 183.1H54.0" stroke="#999" stroke-width="0.600"/><path d="M52.5 177.1H54.0" stroke="#999" stroke-width="0.600"/><path d="M52.5 171.1H54.0" stroke="#999" stroke-width="0.600"/><path d="M52.5 165.1H54.0" stroke="#999" stroke-width="0.600"/><path d="M52.5 153.1H54.0" stroke="#999" stroke-width="0.600"/><path d="M52.5 147.1H54.0" stroke="#999" stroke-width="0.600"/><path d="M52.5 141.1H54.0" stroke="#999" stroke-width="0.600"/><path d="M52.5 135.1H54.0" stroke="#999" stroke-width="0.600"/><path d="M52.5 123.0H54.0" stroke="#999" stroke-width="0.600"/><path d="M52.5 117.0H54.0" stroke="#999" stroke-width="0.600"/><path d="M52.5 111.0H54.0" stroke="#999" stroke-width="0.600"/><path d="M52.5 105.0H54.0" stroke="#999" stroke-width="0.600"/><path d="M52.5 93.0H54.0" stroke="#999" stroke-width="0.600"/><path d="M52.5 87.0H54.0" stroke="#999" stroke-width="0.600"/><path d="M52.5 81.0H54.0" stroke="#999" stroke-width="0.600"/><path d="M52.5 75.0H54.0" stroke="#999" stroke-width="0.600"/><path d="M52.5 62.9H54.0" stroke="#999" stroke-width="0.600"/><path d="M52.5 56.9H54.0" stroke="#999" stroke-width="0.600"/><path d="M52.5 50.9H54.0" stroke="#999" stroke-width="0.600"/><path d="M52.5 44.9H54.0" stroke="#999" stroke-width="0.600"/><path d="M52.5 32.9H54.0" stroke="#999" stroke-width="0.600"/><path d="M52.5 26.9H54.0" stroke="#999" stroke-width="0.600"/><path d="M52.5 20.9H54.0" stroke="#999" stroke-width="0.600"/><path d="M52.5 14.8H54.0" stroke="#999" stroke-width="0.600"/><path d="M56.4 431.1v1.500" stroke="#999" stroke-width="0.600"/><path d="M63.0 431.1v2.500" stroke="#777" stroke-width="0.9"/><path d="M69.6 431.1v1.500" stroke="#999" stroke-width="0.600"/><path d="M76.1 431.1v1.500" stroke="#999" stroke-width="0.600"/><path d="M82.6 431.1v1.500" stroke="#999" stroke-width="0.600"/><path d="M89.2 431.1v1.500" stroke="#999" stroke-width="0.600"/><path d="M95.8 431.1v2.500" stroke="#777" stroke-width="0.9"/><path d="M102.3 431.1v1.500" stroke="#999" stroke-width="0.600"/><path d="M108.9 431.1v1.500" stroke="#999" stroke-width="0.600"/><path d="M115.4 431.1v1.500" stroke="#999" stroke-width="0.600"/><path d="M121.9 431.1v1.500" stroke="#999" stroke-width="0.600"/><path d="M128.5 431.1v2.500" stroke="#777" stroke-width="0.9"/><path d="M135.1 431.1v1.500" stroke="#999" stroke-width="0.600"/><path d="M141.6 431.1v1.500" stroke="#999" stroke-width="0.600"/><path d="M148.1 431.1v1.500" stroke="#999" stroke-width="0.600"/><path d="M154.7 431.1v1.500" stroke="#999" stroke-width="0.600"/><path d="M161.2 431.1v2.500" stroke="#777" stroke-width="0.9"/><path d="M167.8 431.1v1.500" stroke="#999" stroke-width="0.600"/><path d="M174.4 431.1v1.500" stroke="#999" stroke-width="0.600"/><path d="M180.9 431.1v1.500" stroke="#999" stroke-width="0.600"/><path d="M187.4 431.1v1.500" stroke="#999" stroke-width="0.600"/><path d="M194.0 431.1v2.500" stroke="#777" stroke-width="0.9"/><path d="M200.6 431.1v1.500" stroke="#999" stroke-width="0.600"/><path d="M207.1 431.1v1.500" stroke="#999" stroke-width="0.600"/><path d="M213.6 431.1v1.500" stroke="#999" stroke-width="0.600"/><path d="M220.2 431.1v1.500" stroke="#999" stroke-width="0.600"/><path d="M226.8 431.1v2.500" stroke="#777" stroke-width="0.9"/><path d="M233.3 431.1v1.500" stroke="#999" stroke-width="0.600"/><path d="M239.9 431.1v1.500" stroke="#999" stroke-width="0.600"/><path d="M246.4 431.1v1.500" stroke="#999" stroke-width="0.600"/><path d="M253.0 431.1v1.500" stroke="#999" stroke-width="0.600"/><path d="M259.5 431.1v2.500" stroke="#777" stroke-width="0.9"/><path d="M266.1 431.1v1.500" stroke="#999" stroke-width="0.600"/><path d="M272.6 431.1v1.500" stroke="#999" stroke-width="0.600"/><path d="M279.1 431.1v1.500" stroke="#999" stroke-width="0.600"/><path d="M285.7 431.1v1.500" stroke="#999" stroke-width="0.600"/><path d="M292.2 431.1v2.500" stroke="#777" stroke-width="0.9"/><path d="M298.8 431.1v1.500" stroke="#999" stroke-width="0.600"/><path d="M305.4 431.1v1.500" stroke="#999" stroke-width="0.600"/><path d="M311.9 431.1v1.500" stroke="#999" stroke-width="0.600"/><path d="M318.5 431.1v1.500" stroke="#999" stroke-width="0.600"/><path d="M325.0 431.1v2.500" stroke="#777" stroke-width="0.9"/><path d="M331.5 431.1v1.500" stroke="#999" stroke-width="0.600"/><path d="M338.1 431.1v1.500" stroke="#999" stroke-width="0.600"/><path d="M344.7 431.1v1.500" stroke="#999" stroke-width="0.600"/><path d="M351.2 431.1v1.500" stroke="#999" stroke-width="0.600"/><path d="M357.8 431.1v2.500" stroke="#777" stroke-width="0.9"/><path d="M364.3 431.1v1.500" stroke="#999" stroke-width="0.600"/><path d="M370.9 431.1v1.500" stroke="#999" stroke-width="0.600"/><path d="M377.4 431.1v1.500" stroke="#999" stroke-width="0.600"/><path d="M384.0 431.1v1.500" stroke="#999" stroke-width="0.600"/><path d="M390.5 431.1v2.500" stroke="#777" stroke-width="0.9"/><path d="M397.0 431.1v1.500" stroke="#999" stroke-width="0.600"/><path d="M403.6 431.1v1.500" stroke="#999" stroke-width="0.600"/><path d="M410.2 431.1v1.500" stroke="#999" stroke-width="0.600"/><path d="M416.7 431.1v1.500" stroke="#999" stroke-width="0.600"/><path d="M423.2 431.1v2.500" stroke="#777" stroke-width="0.9"/><path d="M429.8 431.1v1.500" stroke="#999" stroke-width="0.600"/><path d="M436.4 431.1v1.500" stroke="#999" stroke-width="0.600"/><path d="M442.9 431.1v1.500" stroke="#999" stroke-width="0.600"/><path d="M449.5 431.1v1.500" stroke="#999" stroke-width="0.600"/><path d="M456.0 431.1v2.500" stroke="#777" stroke-width="0.9"/><path d="M462.5 431.1v1.500" stroke="#999" stroke-width="0.600"/><path d="M469.1 431.1v1.500" stroke="#999" stroke-width="0.600"/><path d="M475.7 431.1v1.500" stroke="#999" stroke-width="0.600"/><path d="M482.2 431.1v1.500" stroke="#999" stroke-width="0.600"/><path d="M488.8 431.1v2.500" stroke="#777" stroke-width="0.9"/><path d="M495.3 431.1v1.500" stroke="#999" stroke-width="0.600"/><path d="M501.9 431.1v1.500" stroke="#999" stroke-width="0.600"/><path d="M508.4 431.1v1.500" stroke="#999" stroke-width="0.600"/><text x="280.5" y="457.8" font-size="9" text-anchor="middle" fill="#111">Wavelength [nm]</text><text transform="translate(20.3 221.5) rotate(-90)" font-size="9.300" text-anchor="middle" fill="#111">Scope Corrected for Dark [ADC Counts]</text><path d="M55.5 428.4 L58.6 428.3 L61.7 428.7 L64.8 428.2 L67.9 428.6 L71.0 428.5 L74.1 428.2 L77.2 428.6 L80.3 428.2 L83.4 428.5 L86.5 428.2 L89.6 428.2 L92.7 428.5 L95.8 428.9 L98.9 428.3 L102.0 428.4 L105.1 428.7 L108.2 429.0 L111.3 428.7 L114.4 428.5 L117.5 429.0 L120.6 428.2 L123.7 428.9 L126.8 428.4 L129.9 428.3 L133.0 428.3 L136.1 428.4 L139.2 428.9 L142.3 428.3 L145.4 428.7 L148.5 428.7 L151.6 428.5 L154.7 428.6 L157.8 428.2 L160.9 428.2 L164.0 428.3 L167.1 428.8 L170.2 428.5 L185.0 428.9 L191.7 426.7 L198.5 424.4 L206.3 422.8 L213.1 422.8 L217.6 421.0 L220.9 416.6 L223.2 408.7 L225.4 395.2 L227.7 375.0 L229.9 354.8 L232.1 341.3 L234.4 336.4 L236.2 340.2 L237.8 345.8 L240.0 359.3 L242.2 367.2 L244.5 371.0 L247.9 377.3 L250.1 386.2 L253.5 394.1 L256.8 398.6 L259.5 400.2 L261.3 399.3 L263.6 390.7 L265.8 377.3 L268.1 359.3 L270.3 341.3 L272.6 326.8 L274.8 317.8 L277.0 313.3 L278.8 312.6 L280.4 315.5 L282.7 325.6 L284.9 336.9 L287.1 347.0 L289.4 357.1 L292.8 368.3 L295.0 372.8 L298.4 378.4 L301.7 382.9 L305.1 389.6 L308.5 395.2 L311.8 399.0 L315.2 400.4 L317.9 402.0 L319.7 398.6 L321.5 390.7 L323.1 379.5 L324.6 363.8 L326.0 345.8 L327.6 323.4 L329.1 300.9 L330.9 280.7 L332.1 249.7 L333.9 213.8 L336.2 180.1 L338.4 157.7 L341.1 143.1 L342.9 155.4 L344.5 166.7 L346.7 175.6 L348.5 195.8 L350.6 227.3 L352.3 258.7 L353.4 283.0 L354.9 300.9 L356.7 323.4 L358.3 341.3 L360.1 353.7 L362.3 362.7 L364.6 370.5 L368.0 380.6 L371.3 388.5 L375.8 397.5 L380.3 405.3 L384.8 411.4 L389.3 416.1 L393.8 419.5 L398.3 422.2 L400.2 424.1 L408.8 425.8 L423.8 426.3 L429.2 428.0 L434.5 426.7 L443.1 426.9 L453.8 426.5 L458.1 427.1 L466.7 427.8 L471.0 427.3 L479.6 427.6 L488.2 427.1 L496.8 428.0 L506.4 427.8 L508.1 425.2" fill="none" stroke="#0000f4" stroke-width="1.800" stroke-linejoin="round"/></svg>
<svg style="left:875px;top:262px" width="390" height="380" font-family="Liberation Sans, sans-serif"><defs><linearGradient id="c0" gradientUnits="userSpaceOnUse" x1="74.7" x2="93.9" y1="0" y2="0"><stop offset="0.000" stop-color="#00ff00"/><stop offset="1.000" stop-color="#00ff00"/></linearGradient><linearGradient id="c1" gradientUnits="userSpaceOnUse" x1="70.7" x2="100.0" y1="0" y2="0"><stop offset="0.000" stop-color="#00ff00"/><stop offset="1.000" stop-color="#00ff00"/></linearGradient><linearGradient id="c2" gradientUnits="userSpaceOnUse" x1="68.1" x2="104.8" y1="0" y2="0"><stop offset="0.000" stop-color="#00ff00"/><stop offset="1.000" stop-color="#00ff00"/></linearGradient><linearGradient id="c3" gradientUnits="userSpaceOnUse" x1="66.3" x2="108.8" y1="0" y2="0"><stop offset="0.000" stop-color="#00ff00"/><stop offset="1.000" stop-color="#00ff00"/></linearGradient><linearGradient id="c4" gradientUnits="userSpaceOnUse" x1="64.8" x2="112.6" y1="0" y2="0"><stop offset="0.000" stop-color="#00ff03"/><stop offset="1.000" stop-color="#00ff00"/></linearGradient><linearGradient id="c5" gradientUnits="userSpaceOnUse" x1="63.4" x2="116.3" y1="0" y2="0"><stop offset="0.000" stop-color="#00ff15"/><stop offset="0.094" stop-color="#00ff00"/><stop offset="1.000" stop-color="#00ff00"/></linearGradient><linearGradient id="c6" gradientUnits="userSpaceOnUse" x1="62.3" x2="119.8" y1="0" y2="0"><stop offset="0.000" stop-color="#00ff20"/><stop offset="0.121" stop-color="#00ff08"/><stop offset="0.155" stop-color="#00ff00"/><stop offset="1.000" stop-color="#00ff00"/></linearGradient><linearGradient id="c7" gradientUnits="userSpaceOnUse" x1="61.3" x2="123.1" y1="0" y2="0"><stop offset="0.000" stop-color="#00ff27"/><stop offset="0.145" stop-color="#00ff10"/><stop offset="0.194" stop-color="#00ff01"/><stop offset="1.000" stop-color="#00ff00"/></linearGradient><linearGradient id="c8" gradientUnits="userSpaceOnUse" x1="60.4" x2="126.3" y1="0" y2="0"><stop offset="0.000" stop-color="#00ff2e"/><stop offset="0.182" stop-color="#00ff13"/><stop offset="0.242" stop-color="#00ff00"/><stop offset="1.000" stop-color="#00ff00"/></linearGradient><linearGradient id="c9" gradientUnits="userSpaceOnUse" x1="59.5" x2="129.5" y1="0" y2="0"><stop offset="0.000" stop-color="#00ff33"/><stop offset="0.200" stop-color="#00ff18"/><stop offset="0.286" stop-color="#00ff00"/><stop offset="1.000" stop-color="#00ff00"/></linearGradient><linearGradient id="c10" gradientUnits="userSpaceOnUse" x1="58.7" x2="132.5" y1="0" y2="0"><stop offset="0.000" stop-color="#00ff38"/><stop offset="0.216" stop-color="#00ff1d"/><stop offset="0.311" stop-color="#00ff00"/><stop offset="1.000" stop-color="#00ff00"/></linearGradient><linearGradient id="c11" gradientUnits="userSpaceOnUse" x1="58.0" x2="135.4" y1="0" y2="0"><stop offset="0.000" stop-color="#00ff3c"/><stop offset="0.244" stop-color="#00ff1e"/><stop offset="0.321" stop-color="#00ff07"/><stop offset="0.346" stop-color="#00ff00"/><stop offset="1.000" stop-color="#00ff00"/></linearGradient><linearGradient id="c12" gradientUnits="userSpaceOnUse" x1="57.3" x2="138.3" y1="0" y2="0"><stop offset="0.000" stop-color="#00ff40"/><stop offset="0.259" stop-color="#00ff21"/><stop offset="0.333" stop-color="#00ff0e"/><stop offset="0.370" stop-color="#00ff00"/><stop offset="1.000" stop-color="#00ff00"/></linearGradient><linearGradient id="c13" gradientUnits="userSpaceOnUse" x1="56.8" x2="141.0" y1="0" y2="0"><stop offset="0.000" stop-color="#00ff44"/><stop offset="0.271" stop-color="#00ff25"/><stop offset="0.365" stop-color="#00ff0b"/><stop offset="0.388" stop-color="#00ff00"/><stop offset="1.000" stop-color="#00ff00"/></linearGradient><linearGradient id="c14" gradientUnits="userSpaceOnUse" x1="56.3" x2="143.8" y1="0" y2="0"><stop offset="0.000" stop-color="#00ff48"/><stop offset="0.284" stop-color="#00ff27"/><stop offset="0.375" stop-color="#00ff11"/><stop offset="0.409" stop-color="#00ff00"/><stop offset="1.000" stop-color="#00ff00"/></linearGradient><linearGradient id="c15" gradientUnits="userSpaceOnUse" x1="55.7" x2="146.4" y1="0" y2="0"><stop offset="0.000" stop-color="#00ff4b"/><stop offset="0.286" stop-color="#00ff2b"/><stop offset="0.396" stop-color="#00ff12"/><stop offset="0.429" stop-color="#00ff01"/><stop offset="1.000" stop-color="#00ff00"/></linearGradient><linearGradient id="c16" gradientUnits="userSpaceOnUse" x1="55.3" x2="149.0" y1="0" y2="0"><stop offset="0.000" stop-color="#00ff4e"/><stop offset="0.298" stop-color="#00ff2e"/><stop offset="0.415" stop-color="#00ff12"/><stop offset="0.447" stop-color="#00ff01"/><stop offset="1.000" stop-color="#00ff00"/></linearGradient><linearGradient id="c17" gradientUnits="userSpaceOnUse" x1="54.9" x2="151.6" y1="0" y2="0"><stop offset="0.000" stop-color="#00ff51"/><stop offset="0.309" stop-color="#00ff30"/><stop offset="0.423" stop-color="#00ff17"/><stop offset="0.474" stop-color="#00ff00"/><stop offset="1.000" stop-color="#00ff00"/></linearGradient><linearGradient id="c18" gradientUnits="userSpaceOnUse" x1="54.5" x2="154.1" y1="0" y2="0"><stop offset="0.000" stop-color="#00ff54"/><stop offset="0.320" stop-color="#00ff32"/><stop offset="0.440" stop-color="#00ff17"/><stop offset="0.490" stop-color="#00ff00"/><stop offset="1.000" stop-color="#00ff00"/></linearGradient><linearGradient id="c19" gradientUnits="userSpaceOnUse" x1="54.2" x2="156.6" y1="0" y2="0"><stop offset="0.000" stop-color="#00ff57"/><stop offset="0.320" stop-color="#00ff35"/><stop offset="0.447" stop-color="#00ff1b"/><stop offset="0.505" stop-color="#00ff00"/><stop offset="1.000" stop-color="#00ff00"/></linearGradient><linearGradient id="c20" gradientUnits="userSpaceOnUse" x1="53.9" x2="159.1" y1="0" y2="0"><stop offset="0.000" stop-color="#00ff59"/><stop offset="0.330" stop-color="#00ff37"/><stop offset="0.462" stop-color="#00ff1c"/><stop offset="0.519" stop-color="#00ff00"/><stop offset="1.000" stop-color="#00ff00"/></linearGradient><linearGradient id="c21" gradientUnits="userSpaceOnUse" x1="53.6" x2="161.5" y1="0" y2="0"><stop offset="0.000" stop-color="#00ff5c"/><stop offset="0.333" stop-color="#00ff3a"/><stop offset="0.472" stop-color="#00ff1e"/><stop offset="0.519" stop-color="#00ff08"/><stop offset="0.537" stop-color="#00ff00"/><stop offset="1.000" stop-color="#00ff00"/></linearGradient><linearGradient id="c22" gradientUnits="userSpaceOnUse" x1="53.4" x2="163.9" y1="0" y2="0"><stop offset="0.000" stop-color="#00ff5e"/><stop offset="0.342" stop-color="#00ff3c"/><stop offset="0.486" stop-color="#00ff1e"/><stop offset="0.532" stop-color="#00ff09"/><stop offset="0.550" stop-color="#00ff00"/><stop offset="1.000" stop-color="#00ff00"/></linearGradient><linearGradient id="c23" gradientUnits="userSpaceOnUse" x1="53.1" x2="166.3" y1="0" y2="0"><stop offset="0.000" stop-color="#00ff61"/><stop offset="0.342" stop-color="#00ff3f"/><stop offset="0.491" stop-color="#00ff22"/><stop offset="0.544" stop-color="#00ff0a"/><stop offset="0.561" stop-color="#00ff00"/><stop offset="1.000" stop-color="#00ff00"/></linearGradient><linearGradient id="c24" gradientUnits="userSpaceOnUse" x1="52.9" x2="168.6" y1="0" y2="0"><stop offset="0.000" stop-color="#00ff63"/><stop offset="0.353" stop-color="#00ff40"/><stop offset="0.500" stop-color="#00ff23"/><stop offset="0.552" stop-color="#00ff0e"/><stop offset="0.569" stop-color="#00ff00"/><stop offset="1.000" stop-color="#00ff00"/></linearGradient><linearGradient id="c25" gradientUnits="userSpaceOnUse" x1="52.7" x2="171.0" y1="0" y2="0"><stop offset="0.000" stop-color="#00ff66"/><stop offset="0.353" stop-color="#00ff43"/><stop offset="0.513" stop-color="#00ff24"/><stop offset="0.563" stop-color="#00ff0f"/><stop offset="0.580" stop-color="#00ff01"/><stop offset="1.000" stop-color="#00ff00"/></linearGradient><linearGradient id="c26" gradientUnits="userSpaceOnUse" x1="52.6" x2="173.3" y1="0" y2="0"><stop offset="0.000" stop-color="#00ff68"/><stop offset="0.364" stop-color="#00ff44"/><stop offset="0.521" stop-color="#00ff26"/><stop offset="0.579" stop-color="#00ff0c"/><stop offset="0.595" stop-color="#00ff00"/><stop offset="1.000" stop-color="#00ff00"/></linearGradient><linearGradient id="c27" gradientUnits="userSpaceOnUse" x1="52.4" x2="175.6" y1="0" y2="0"><stop offset="0.000" stop-color="#00ff6a"/><stop offset="0.363" stop-color="#00ff47"/><stop offset="0.524" stop-color="#00ff29"/><stop offset="0.581" stop-color="#00ff13"/><stop offset="0.605" stop-color="#00ff00"/><stop offset="1.000" stop-color="#00ff00"/></linearGradient><linearGradient id="c28" gradientUnits="userSpaceOnUse" x1="52.3" x2="177.9" y1="0" y2="0"><stop offset="0.000" stop-color="#00ff6d"/><stop offset="0.365" stop-color="#00ff4a"/><stop offset="0.532" stop-color="#00ff2a"/><stop offset="0.595" stop-color="#00ff11"/><stop offset="0.619" stop-color="#00ff00"/><stop offset="1.000" stop-color="#00ff00"/></linearGradient><linearGradient id="c29" gradientUnits="userSpaceOnUse" x1="52.1" x2="180.2" y1="0" y2="0"><stop offset="0.000" stop-color="#00ff6f"/><stop offset="0.372" stop-color="#00ff4b"/><stop offset="0.543" stop-color="#00ff2b"/><stop offset="0.605" stop-color="#00ff12"/><stop offset="0.628" stop-color="#00ff00"/><stop offset="0.984" stop-color="#00ff00"/><stop offset="1.000" stop-color="#20ff00"/></linearGradient><linearGradient id="c30" gradientUnits="userSpaceOnUse" x1="52.1" x2="182.4" y1="0" y2="0"><stop offset="0.000" stop-color="#00ff71"/><stop offset="0.374" stop-color="#00ff4d"/><stop offset="0.550" stop-color="#00ff2d"/><stop offset="0.611" stop-color="#00ff15"/><stop offset="0.634" stop-color="#00ff01"/><stop offset="0.962" stop-color="#00ff00"/><stop offset="0.969" stop-color="#0aff00"/><stop offset="0.977" stop-color="#1eff00"/><stop offset="1.000" stop-color="#3bff00"/></linearGradient><linearGradient id="c31" gradientUnits="userSpaceOnUse" x1="52.0" x2="184.7" y1="0" y2="0"><stop offset="0.000" stop-color="#00ff73"/><stop offset="0.376" stop-color="#00ff50"/><stop offset="0.556" stop-color="#00ff2e"/><stop offset="0.624" stop-color="#00ff13"/><stop offset="0.647" stop-color="#00ff00"/><stop offset="0.940" stop-color="#00ff00"/><stop offset="0.947" stop-color="#05ff00"/><stop offset="0.955" stop-color="#1cff00"/><stop offset="0.977" stop-color="#3aff00"/><stop offset="1.000" stop-color="#4cff00"/></linearGradient><linearGradient id="c32" gradientUnits="userSpaceOnUse" x1="51.9" x2="186.9" y1="0" y2="0"><stop offset="0.000" stop-color="#00ff75"/><stop offset="0.382" stop-color="#00ff51"/><stop offset="0.559" stop-color="#00ff31"/><stop offset="0.625" stop-color="#00ff19"/><stop offset="0.654" stop-color="#00ff00"/><stop offset="0.926" stop-color="#01ff00"/><stop offset="0.934" stop-color="#1aff00"/><stop offset="0.956" stop-color="#39ff00"/><stop offset="1.000" stop-color="#5bff00"/></linearGradient><linearGradient id="c33" gradientUnits="userSpaceOnUse" x1="51.8" x2="189.1" y1="0" y2="0"><stop offset="0.000" stop-color="#00ff77"/><stop offset="0.384" stop-color="#00ff53"/><stop offset="0.565" stop-color="#00ff33"/><stop offset="0.638" stop-color="#00ff17"/><stop offset="0.667" stop-color="#00ff00"/><stop offset="0.906" stop-color="#00ff00"/><stop offset="0.913" stop-color="#17ff00"/><stop offset="0.928" stop-color="#30ff00"/><stop offset="0.971" stop-color="#56ff00"/><stop offset="1.000" stop-color="#67ff00"/></linearGradient><linearGradient id="c34" gradientUnits="userSpaceOnUse" x1="51.8" x2="191.4" y1="0" y2="0"><stop offset="0.000" stop-color="#00ff79"/><stop offset="0.386" stop-color="#00ff56"/><stop offset="0.571" stop-color="#00ff34"/><stop offset="0.643" stop-color="#00ff1a"/><stop offset="0.671" stop-color="#00ff00"/><stop offset="0.886" stop-color="#00ff00"/><stop offset="0.900" stop-color="#23ff00"/><stop offset="0.929" stop-color="#45ff00"/><stop offset="0.993" stop-color="#6eff00"/><stop offset="1.000" stop-color="#72ff00"/></linearGradient><linearGradient id="c35" gradientUnits="userSpaceOnUse" x1="51.8" x2="193.6" y1="0" y2="0"><stop offset="0.000" stop-color="#00ff7b"/><stop offset="0.387" stop-color="#00ff58"/><stop offset="0.577" stop-color="#00ff36"/><stop offset="0.648" stop-color="#00ff1c"/><stop offset="0.683" stop-color="#00ff00"/><stop offset="0.866" stop-color="#00ff00"/><stop offset="0.880" stop-color="#20ff00"/><stop offset="0.901" stop-color="#3dff00"/><stop offset="0.958" stop-color="#66ff00"/><stop offset="1.000" stop-color="#7cff00"/></linearGradient><linearGradient id="c36" gradientUnits="userSpaceOnUse" x1="51.8" x2="195.8" y1="0" y2="0"><stop offset="0.000" stop-color="#00ff7e"/><stop offset="0.386" stop-color="#00ff5a"/><stop offset="0.579" stop-color="#00ff38"/><stop offset="0.655" stop-color="#00ff1d"/><stop offset="0.683" stop-color="#00ff07"/><stop offset="0.690" stop-color="#00ff00"/><stop offset="0.848" stop-color="#00ff00"/><stop offset="0.855" stop-color="#0bff00"/><stop offset="0.862" stop-color="#1fff00"/><stop offset="0.883" stop-color="#3cff00"/><stop offset="0.938" stop-color="#66ff00"/><stop offset="1.000" stop-color="#86ff00"/></linearGradient><linearGradient id="c37" gradientUnits="userSpaceOnUse" x1="51.8" x2="198.0" y1="0" y2="0"><stop offset="0.000" stop-color="#00ff80"/><stop offset="0.388" stop-color="#00ff5c"/><stop offset="0.585" stop-color="#00ff3a"/><stop offset="0.667" stop-color="#00ff1c"/><stop offset="0.701" stop-color="#00ff00"/><stop offset="0.830" stop-color="#00ff00"/><stop offset="0.837" stop-color="#03ff00"/><stop offset="0.844" stop-color="#1cff00"/><stop offset="0.864" stop-color="#3bff00"/><stop offset="0.912" stop-color="#62ff00"/><stop offset="1.000" stop-color="#8fff00"/></linearGradient><linearGradient id="c38" gradientUnits="userSpaceOnUse" x1="51.8" x2="200.2" y1="0" y2="0"><stop offset="0.000" stop-color="#00ff82"/><stop offset="0.396" stop-color="#00ff5e"/><stop offset="0.591" stop-color="#00ff3b"/><stop offset="0.671" stop-color="#00ff1e"/><stop offset="0.698" stop-color="#00ff08"/><stop offset="0.705" stop-color="#00ff00"/><stop offset="0.819" stop-color="#00ff00"/><stop offset="0.826" stop-color="#18ff00"/><stop offset="0.839" stop-color="#31ff00"/><stop offset="0.879" stop-color="#58ff00"/><stop offset="0.966" stop-color="#89ff00"/><stop offset="1.000" stop-color="#97ff00"/></linearGradient><linearGradient id="c39" gradientUnits="userSpaceOnUse" x1="51.8" x2="202.3" y1="0" y2="0"><stop offset="0.000" stop-color="#00ff84"/><stop offset="0.397" stop-color="#00ff60"/><stop offset="0.596" stop-color="#00ff3d"/><stop offset="0.675" stop-color="#00ff20"/><stop offset="0.702" stop-color="#00ff0d"/><stop offset="0.715" stop-color="#00ff00"/><stop offset="0.801" stop-color="#00ff00"/><stop offset="0.815" stop-color="#24ff00"/><stop offset="0.841" stop-color="#46ff00"/><stop offset="0.901" stop-color="#71ff00"/><stop offset="1.000" stop-color="#a0ff00"/></linearGradient><linearGradient id="c40" gradientUnits="userSpaceOnUse" x1="51.8" x2="204.5" y1="0" y2="0"><stop offset="0.000" stop-color="#00ff86"/><stop offset="0.399" stop-color="#00ff62"/><stop offset="0.595" stop-color="#00ff40"/><stop offset="0.680" stop-color="#00ff23"/><stop offset="0.706" stop-color="#00ff11"/><stop offset="0.719" stop-color="#00ff00"/><stop offset="0.784" stop-color="#00ff00"/><stop offset="0.791" stop-color="#0dff00"/><stop offset="0.797" stop-color="#21ff00"/><stop offset="0.817" stop-color="#3eff00"/><stop offset="0.869" stop-color="#68ff00"/><stop offset="0.980" stop-color="#a0ff00"/><stop offset="1.000" stop-color="#a8ff00"/></linearGradient><linearGradient id="c41" gradientUnits="userSpaceOnUse" x1="51.9" x2="206.7" y1="0" y2="0"><stop offset="0.000" stop-color="#00ff88"/><stop offset="0.400" stop-color="#00ff64"/><stop offset="0.600" stop-color="#00ff41"/><stop offset="0.684" stop-color="#00ff25"/><stop offset="0.716" stop-color="#00ff0e"/><stop offset="0.729" stop-color="#00ff00"/><stop offset="0.774" stop-color="#03ff00"/><stop offset="0.781" stop-color="#1dff00"/><stop offset="0.800" stop-color="#3cff00"/><stop offset="0.845" stop-color="#64ff00"/><stop offset="0.942" stop-color="#97ff00"/><stop offset="1.000" stop-color="#b0ff00"/></linearGradient><linearGradient id="c42" gradientUnits="userSpaceOnUse" x1="51.9" x2="208.8" y1="0" y2="0"><stop offset="0.000" stop-color="#00ff8a"/><stop offset="0.401" stop-color="#00ff66"/><stop offset="0.605" stop-color="#00ff43"/><stop offset="0.694" stop-color="#00ff24"/><stop offset="0.720" stop-color="#00ff12"/><stop offset="0.732" stop-color="#00ff00"/><stop offset="0.758" stop-color="#00ff00"/><stop offset="0.764" stop-color="#18ff00"/><stop offset="0.777" stop-color="#32ff00"/><stop offset="0.809" stop-color="#54ff00"/><stop offset="0.885" stop-color="#85ff00"/><stop offset="1.000" stop-color="#b7ff00"/></linearGradient><linearGradient id="c43" gradientUnits="userSpaceOnUse" x1="52.0" x2="211.0" y1="0" y2="0"><stop offset="0.000" stop-color="#00ff8c"/><stop offset="0.400" stop-color="#00ff68"/><stop offset="0.606" stop-color="#00ff45"/><stop offset="0.694" stop-color="#00ff28"/><stop offset="0.725" stop-color="#00ff14"/><stop offset="0.738" stop-color="#00ff03"/><stop offset="0.744" stop-color="#00ff00"/><stop offset="0.750" stop-color="#18ff00"/><stop offset="0.763" stop-color="#32ff00"/><stop offset="0.794" stop-color="#54ff00"/><stop offset="0.869" stop-color="#85ff00"/><stop offset="1.000" stop-color="#bfff00"/></linearGradient><linearGradient id="c44" gradientUnits="userSpaceOnUse" x1="52.1" x2="213.2" y1="0" y2="0"><stop offset="0.000" stop-color="#00ff8e"/><stop offset="0.401" stop-color="#00ff6a"/><stop offset="0.611" stop-color="#00ff47"/><stop offset="0.704" stop-color="#00ff27"/><stop offset="0.728" stop-color="#00ff17"/><stop offset="0.741" stop-color="#24ff09"/><stop offset="0.747" stop-color="#2fff00"/><stop offset="0.778" stop-color="#53ff00"/><stop offset="0.846" stop-color="#82ff00"/><stop offset="0.988" stop-color="#c2ff00"/><stop offset="1.000" stop-color="#c6ff00"/></linearGradient><linearGradient id="c45" gradientUnits="userSpaceOnUse" x1="52.2" x2="215.3" y1="0" y2="0"><stop offset="0.000" stop-color="#00ff90"/><stop offset="0.402" stop-color="#00ff6c"/><stop offset="0.610" stop-color="#00ff4a"/><stop offset="0.707" stop-color="#00ff29"/><stop offset="0.713" stop-color="#00ff26"/><stop offset="0.720" stop-color="#0bff23"/><stop offset="0.726" stop-color="#20ff1f"/><stop offset="0.744" stop-color="#3fff0e"/><stop offset="0.756" stop-color="#4cff00"/><stop offset="0.817" stop-color="#7aff00"/><stop offset="0.945" stop-color="#b8ff00"/><stop offset="1.000" stop-color="#ceff00"/></linearGradient><linearGradient id="c46" gradientUnits="userSpaceOnUse" x1="52.3" x2="217.5" y1="0" y2="0"><stop offset="0.000" stop-color="#00ff91"/><stop offset="0.404" stop-color="#00ff6f"/><stop offset="0.614" stop-color="#00ff4b"/><stop offset="0.705" stop-color="#01ff2e"/><stop offset="0.711" stop-color="#1cff2b"/><stop offset="0.723" stop-color="#35ff25"/><stop offset="0.747" stop-color="#51ff12"/><stop offset="0.759" stop-color="#5cff00"/><stop offset="0.837" stop-color="#8fff00"/><stop offset="1.000" stop-color="#d5ff00"/></linearGradient><linearGradient id="c47" gradientUnits="userSpaceOnUse" x1="52.4" x2="219.6" y1="0" y2="0"><stop offset="0.000" stop-color="#00ff93"/><stop offset="0.405" stop-color="#00ff71"/><stop offset="0.619" stop-color="#00ff4d"/><stop offset="0.690" stop-color="#00ff38"/><stop offset="0.696" stop-color="#18ff35"/><stop offset="0.708" stop-color="#33ff30"/><stop offset="0.738" stop-color="#56ff20"/><stop offset="0.756" stop-color="#65ff0f"/><stop offset="0.768" stop-color="#6eff00"/><stop offset="0.869" stop-color="#a6ff00"/><stop offset="1.000" stop-color="#ddff00"/></linearGradient><linearGradient id="c48" gradientUnits="userSpaceOnUse" x1="52.5" x2="221.8" y1="0" y2="0"><stop offset="0.000" stop-color="#00ff95"/><stop offset="0.406" stop-color="#00ff73"/><stop offset="0.618" stop-color="#00ff50"/><stop offset="0.676" stop-color="#00ff3f"/><stop offset="0.688" stop-color="#24ff3b"/><stop offset="0.706" stop-color="#42ff35"/><stop offset="0.753" stop-color="#6dff19"/><stop offset="0.771" stop-color="#79ff00"/><stop offset="0.888" stop-color="#b7ff00"/><stop offset="1.000" stop-color="#e4ff00"/></linearGradient><linearGradient id="c49" gradientUnits="userSpaceOnUse" x1="52.6" x2="223.9" y1="0" y2="0"><stop offset="0.000" stop-color="#00ff97"/><stop offset="0.407" stop-color="#00ff75"/><stop offset="0.622" stop-color="#00ff51"/><stop offset="0.663" stop-color="#00ff47"/><stop offset="0.669" stop-color="#0aff45"/><stop offset="0.674" stop-color="#21ff43"/><stop offset="0.692" stop-color="#40ff3d"/><stop offset="0.733" stop-color="#68ff2c"/><stop offset="0.762" stop-color="#7dff17"/><stop offset="0.779" stop-color="#88ff00"/><stop offset="0.919" stop-color="#cbff00"/><stop offset="1.000" stop-color="#ecff00"/></linearGradient><linearGradient id="c50" gradientUnits="userSpaceOnUse" x1="52.7" x2="226.1" y1="0" y2="0"><stop offset="0.000" stop-color="#00ff99"/><stop offset="0.408" stop-color="#00ff77"/><stop offset="0.621" stop-color="#00ff54"/><stop offset="0.655" stop-color="#00ff4b"/><stop offset="0.661" stop-color="#1cff4a"/><stop offset="0.672" stop-color="#36ff46"/><stop offset="0.707" stop-color="#5eff3b"/><stop offset="0.759" stop-color="#84ff1f"/><stop offset="0.776" stop-color="#8eff0c"/><stop offset="0.782" stop-color="#92ff01"/><stop offset="0.937" stop-color="#daff00"/><stop offset="1.000" stop-color="#f3ff00"/></linearGradient><linearGradient id="c51" gradientUnits="userSpaceOnUse" x1="52.9" x2="228.2" y1="0" y2="0"><stop offset="0.000" stop-color="#00ff9b"/><stop offset="0.409" stop-color="#00ff79"/><stop offset="0.625" stop-color="#00ff56"/><stop offset="0.642" stop-color="#00ff52"/><stop offset="0.648" stop-color="#18ff50"/><stop offset="0.659" stop-color="#33ff4d"/><stop offset="0.688" stop-color="#58ff45"/><stop offset="0.750" stop-color="#87ff2a"/><stop offset="0.778" stop-color="#98ff11"/><stop offset="0.790" stop-color="#9eff00"/><stop offset="0.972" stop-color="#f0ff00"/><stop offset="1.000" stop-color="#fbff00"/></linearGradient><linearGradient id="c52" gradientUnits="userSpaceOnUse" x1="53.0" x2="230.4" y1="0" y2="0"><stop offset="0.000" stop-color="#00ff9d"/><stop offset="0.410" stop-color="#00ff7b"/><stop offset="0.629" stop-color="#00ff57"/><stop offset="0.640" stop-color="#25ff55"/><stop offset="0.657" stop-color="#43ff50"/><stop offset="0.697" stop-color="#6bff45"/><stop offset="0.764" stop-color="#98ff25"/><stop offset="0.787" stop-color="#a4ff0d"/><stop offset="0.792" stop-color="#a7ff02"/><stop offset="0.989" stop-color="#feff00"/><stop offset="1.000" stop-color="#fffc00"/></linearGradient><linearGradient id="c53" gradientUnits="userSpaceOnUse" x1="53.2" x2="232.5" y1="0" y2="0"><stop offset="0.000" stop-color="#00ff9f"/><stop offset="0.411" stop-color="#00ff7d"/><stop offset="0.617" stop-color="#00ff5d"/><stop offset="0.622" stop-color="#09ff5b"/><stop offset="0.628" stop-color="#21ff5a"/><stop offset="0.644" stop-color="#41ff56"/><stop offset="0.683" stop-color="#6aff4c"/><stop offset="0.761" stop-color="#9eff2b"/><stop offset="0.789" stop-color="#adff12"/><stop offset="0.800" stop-color="#b3ff00"/><stop offset="0.972" stop-color="#ffff00"/><stop offset="1.000" stop-color="#fff400"/></linearGradient><linearGradient id="c54" gradientUnits="userSpaceOnUse" x1="53.3" x2="234.7" y1="0" y2="0"><stop offset="0.000" stop-color="#00ffa1"/><stop offset="0.412" stop-color="#00ff7f"/><stop offset="0.610" stop-color="#00ff61"/><stop offset="0.615" stop-color="#1dff5f"/><stop offset="0.626" stop-color="#37ff5d"/><stop offset="0.654" stop-color="#5aff57"/><stop offset="0.714" stop-color="#8aff44"/><stop offset="0.775" stop-color="#adff26"/><stop offset="0.797" stop-color="#b9ff0e"/><stop offset="0.802" stop-color="#bbff02"/><stop offset="0.956" stop-color="#fffe00"/><stop offset="1.000" stop-color="#ffed00"/></linearGradient><linearGradient id="c55" gradientUnits="userSpaceOnUse" x1="53.5" x2="236.8" y1="0" y2="0"><stop offset="0.000" stop-color="#00ffa3"/><stop offset="0.413" stop-color="#00ff82"/><stop offset="0.598" stop-color="#00ff66"/><stop offset="0.603" stop-color="#18ff65"/><stop offset="0.614" stop-color="#34ff62"/><stop offset="0.641" stop-color="#59ff5c"/><stop offset="0.701" stop-color="#8aff4c"/><stop offset="0.772" stop-color="#b3ff2d"/><stop offset="0.799" stop-color="#c1ff14"/><stop offset="0.810" stop-color="#c7ff00"/><stop offset="0.940" stop-color="#fffd00"/><stop offset="1.000" stop-color="#ffe700"/></linearGradient><linearGradient id="c56" gradientUnits="userSpaceOnUse" x1="53.7" x2="238.9" y1="0" y2="0"><stop offset="0.000" stop-color="#00ffa5"/><stop offset="0.414" stop-color="#00ff84"/><stop offset="0.586" stop-color="#00ff6a"/><stop offset="0.597" stop-color="#25ff68"/><stop offset="0.613" stop-color="#44ff65"/><stop offset="0.651" stop-color="#6dff5d"/><stop offset="0.731" stop-color="#a5ff44"/><stop offset="0.785" stop-color="#c2ff28"/><stop offset="0.806" stop-color="#ccff10"/><stop offset="0.812" stop-color="#cfff04"/><stop offset="0.839" stop-color="#dcff00"/><stop offset="0.925" stop-color="#fffc00"/><stop offset="1.000" stop-color="#ffe000"/></linearGradient><linearGradient id="c57" gradientUnits="userSpaceOnUse" x1="53.9" x2="241.1" y1="0" y2="0"><stop offset="0.000" stop-color="#00ffa7"/><stop offset="0.410" stop-color="#00ff87"/><stop offset="0.574" stop-color="#00ff6f"/><stop offset="0.580" stop-color="#09ff6e"/><stop offset="0.585" stop-color="#22ff6d"/><stop offset="0.601" stop-color="#43ff6a"/><stop offset="0.638" stop-color="#6dff62"/><stop offset="0.718" stop-color="#a5ff4c"/><stop offset="0.782" stop-color="#c7ff2e"/><stop offset="0.809" stop-color="#d5ff15"/><stop offset="0.819" stop-color="#daff00"/><stop offset="0.904" stop-color="#fffd00"/><stop offset="1.000" stop-color="#ffda00"/></linearGradient><linearGradient id="c58" gradientUnits="userSpaceOnUse" x1="54.1" x2="243.2" y1="0" y2="0"><stop offset="0.000" stop-color="#00ffa9"/><stop offset="0.411" stop-color="#00ff89"/><stop offset="0.568" stop-color="#00ff73"/><stop offset="0.574" stop-color="#1eff72"/><stop offset="0.584" stop-color="#38ff70"/><stop offset="0.611" stop-color="#5cff6b"/><stop offset="0.668" stop-color="#8dff5e"/><stop offset="0.763" stop-color="#c5ff3d"/><stop offset="0.805" stop-color="#daff1f"/><stop offset="0.816" stop-color="#e0ff11"/><stop offset="0.821" stop-color="#e2ff05"/><stop offset="0.832" stop-color="#e7ff00"/><stop offset="0.889" stop-color="#fffc00"/><stop offset="1.000" stop-color="#ffd400"/></linearGradient><linearGradient id="c59" gradientUnits="userSpaceOnUse" x1="54.3" x2="245.3" y1="0" y2="0"><stop offset="0.000" stop-color="#00ffab"/><stop offset="0.411" stop-color="#00ff8b"/><stop offset="0.557" stop-color="#00ff77"/><stop offset="0.563" stop-color="#19ff76"/><stop offset="0.573" stop-color="#36ff74"/><stop offset="0.599" stop-color="#5bff70"/><stop offset="0.656" stop-color="#8dff63"/><stop offset="0.760" stop-color="#cbff41"/><stop offset="0.807" stop-color="#e3ff23"/><stop offset="0.823" stop-color="#eaff0c"/><stop offset="0.828" stop-color="#edff00"/><stop offset="0.870" stop-color="#fffe00"/><stop offset="1.000" stop-color="#ffce00"/></linearGradient><linearGradient id="c60" gradientUnits="userSpaceOnUse" x1="54.5" x2="247.5" y1="0" y2="0"><stop offset="0.000" stop-color="#00ffad"/><stop offset="0.415" stop-color="#00ff8d"/><stop offset="0.549" stop-color="#01ff7b"/><stop offset="0.554" stop-color="#1fff7a"/><stop offset="0.565" stop-color="#39ff78"/><stop offset="0.591" stop-color="#5eff74"/><stop offset="0.648" stop-color="#90ff68"/><stop offset="0.756" stop-color="#d1ff46"/><stop offset="0.808" stop-color="#ebff27"/><stop offset="0.824" stop-color="#f2ff14"/><stop offset="0.834" stop-color="#f7ff00"/><stop offset="0.860" stop-color="#fffb00"/><stop offset="1.000" stop-color="#ffc800"/></linearGradient><linearGradient id="c61" gradientUnits="userSpaceOnUse" x1="54.7" x2="249.6" y1="0" y2="0"><stop offset="0.000" stop-color="#00ffaf"/><stop offset="0.415" stop-color="#00ff8f"/><stop offset="0.538" stop-color="#00ff7f"/><stop offset="0.544" stop-color="#1bff7e"/><stop offset="0.554" stop-color="#37ff7d"/><stop offset="0.579" stop-color="#5dff78"/><stop offset="0.636" stop-color="#8fff6d"/><stop offset="0.754" stop-color="#d7ff4b"/><stop offset="0.810" stop-color="#f3ff2a"/><stop offset="0.831" stop-color="#fdff10"/><stop offset="0.836" stop-color="#fffe02"/><stop offset="0.969" stop-color="#ffcc00"/><stop offset="1.000" stop-color="#ffc300"/></linearGradient><linearGradient id="c62" gradientUnits="userSpaceOnUse" x1="54.9" x2="251.7" y1="0" y2="0"><stop offset="0.000" stop-color="#00ffb1"/><stop offset="0.416" stop-color="#00ff92"/><stop offset="0.528" stop-color="#00ff83"/><stop offset="0.538" stop-color="#29ff82"/><stop offset="0.553" stop-color="#48ff7f"/><stop offset="0.589" stop-color="#72ff79"/><stop offset="0.665" stop-color="#abff69"/><stop offset="0.772" stop-color="#e7ff46"/><stop offset="0.817" stop-color="#feff29"/><stop offset="0.832" stop-color="#fff815"/><stop offset="0.843" stop-color="#fff400"/><stop offset="0.990" stop-color="#ffc000"/><stop offset="1.000" stop-color="#ffbd00"/></linearGradient><linearGradient id="c63" gradientUnits="userSpaceOnUse" x1="55.2" x2="253.8" y1="0" y2="0"><stop offset="0.000" stop-color="#00ffb3"/><stop offset="0.417" stop-color="#00ff94"/><stop offset="0.518" stop-color="#00ff87"/><stop offset="0.523" stop-color="#0fff87"/><stop offset="0.528" stop-color="#25ff86"/><stop offset="0.543" stop-color="#46ff84"/><stop offset="0.578" stop-color="#71ff7e"/><stop offset="0.653" stop-color="#acff6f"/><stop offset="0.764" stop-color="#ebff4d"/><stop offset="0.809" stop-color="#fffc33"/><stop offset="0.834" stop-color="#fff018"/><stop offset="0.844" stop-color="#ffec02"/><stop offset="1.000" stop-color="#ffb800"/></linearGradient><linearGradient id="c64" gradientUnits="userSpaceOnUse" x1="55.4" x2="256.0" y1="0" y2="0"><stop offset="0.000" stop-color="#00ffb6"/><stop offset="0.418" stop-color="#00ff96"/><stop offset="0.507" stop-color="#00ff8b"/><stop offset="0.512" stop-color="#05ff8b"/><stop offset="0.517" stop-color="#22ff8a"/><stop offset="0.527" stop-color="#3cff89"/><stop offset="0.552" stop-color="#61ff85"/><stop offset="0.607" stop-color="#93ff7b"/><stop offset="0.721" stop-color="#dcff60"/><stop offset="0.791" stop-color="#fffd43"/><stop offset="0.831" stop-color="#ffeb21"/><stop offset="0.846" stop-color="#ffe509"/><stop offset="0.851" stop-color="#ffe300"/><stop offset="1.000" stop-color="#ffb300"/></linearGradient><linearGradient id="c65" gradientUnits="userSpaceOnUse" x1="55.6" x2="258.1" y1="0" y2="0"><stop offset="0.000" stop-color="#00ffb8"/><stop offset="0.419" stop-color="#00ff99"/><stop offset="0.502" stop-color="#00ff8f"/><stop offset="0.507" stop-color="#1eff8e"/><stop offset="0.517" stop-color="#3aff8d"/><stop offset="0.542" stop-color="#60ff89"/><stop offset="0.596" stop-color="#93ff80"/><stop offset="0.709" stop-color="#dcff66"/><stop offset="0.778" stop-color="#fffc4c"/><stop offset="0.833" stop-color="#ffe323"/><stop offset="0.847" stop-color="#ffdd0f"/><stop offset="0.852" stop-color="#ffdc03"/><stop offset="1.000" stop-color="#ffad00"/></linearGradient><linearGradient id="c66" gradientUnits="userSpaceOnUse" x1="55.9" x2="260.2" y1="0" y2="0"><stop offset="0.000" stop-color="#00ffba"/><stop offset="0.420" stop-color="#00ff9b"/><stop offset="0.493" stop-color="#00ff93"/><stop offset="0.498" stop-color="#19ff92"/><stop offset="0.507" stop-color="#38ff91"/><stop offset="0.532" stop-color="#5fff8d"/><stop offset="0.585" stop-color="#93ff85"/><stop offset="0.698" stop-color="#ddff6d"/><stop offset="0.761" stop-color="#fffe58"/><stop offset="0.834" stop-color="#ffdc25"/><stop offset="0.849" stop-color="#ffd713"/><stop offset="0.859" stop-color="#ffd300"/><stop offset="1.000" stop-color="#ffa800"/></linearGradient><linearGradient id="c67" gradientUnits="userSpaceOnUse" x1="56.2" x2="262.4" y1="0" y2="0"><stop offset="0.000" stop-color="#00ffbc"/><stop offset="0.420" stop-color="#00ff9e"/><stop offset="0.483" stop-color="#00ff97"/><stop offset="0.493" stop-color="#29ff95"/><stop offset="0.507" stop-color="#49ff94"/><stop offset="0.541" stop-color="#75ff8f"/><stop offset="0.614" stop-color="#b0ff83"/><stop offset="0.744" stop-color="#ffff62"/><stop offset="0.831" stop-color="#ffd72a"/><stop offset="0.855" stop-color="#ffce0e"/><stop offset="0.860" stop-color="#ffcc03"/><stop offset="0.918" stop-color="#ffba00"/><stop offset="1.000" stop-color="#ffa300"/></linearGradient><linearGradient id="c68" gradientUnits="userSpaceOnUse" x1="56.4" x2="264.5" y1="0" y2="0"><stop offset="0.000" stop-color="#00ffbe"/><stop offset="0.421" stop-color="#00ffa0"/><stop offset="0.474" stop-color="#00ff9b"/><stop offset="0.478" stop-color="#0dff9a"/><stop offset="0.483" stop-color="#25ff99"/><stop offset="0.498" stop-color="#48ff98"/><stop offset="0.531" stop-color="#74ff93"/><stop offset="0.603" stop-color="#b1ff88"/><stop offset="0.732" stop-color="#fffe68"/><stop offset="0.833" stop-color="#ffd02b"/><stop offset="0.856" stop-color="#ffc812"/><stop offset="0.866" stop-color="#ffc500"/><stop offset="1.000" stop-color="#ff9e00"/></linearGradient><linearGradient id="c69" gradientUnits="userSpaceOnUse" x1="56.7" x2="266.6" y1="0" y2="0"><stop offset="0.000" stop-color="#00ffc0"/><stop offset="0.424" stop-color="#00ffa3"/><stop offset="0.467" stop-color="#00ff9e"/><stop offset="0.476" stop-color="#2aff9d"/><stop offset="0.490" stop-color="#4bff9b"/><stop offset="0.524" stop-color="#77ff97"/><stop offset="0.595" stop-color="#b3ff8c"/><stop offset="0.719" stop-color="#fffd6f"/><stop offset="0.833" stop-color="#ffca2d"/><stop offset="0.862" stop-color="#ffc00f"/><stop offset="0.871" stop-color="#ffbd00"/><stop offset="1.000" stop-color="#ff9a00"/></linearGradient><linearGradient id="c70" gradientUnits="userSpaceOnUse" x1="57.0" x2="268.7" y1="0" y2="0"><stop offset="0.000" stop-color="#00ffc2"/><stop offset="0.425" stop-color="#00ffa5"/><stop offset="0.458" stop-color="#00ffa2"/><stop offset="0.462" stop-color="#10ffa1"/><stop offset="0.467" stop-color="#27ffa1"/><stop offset="0.481" stop-color="#4aff9f"/><stop offset="0.514" stop-color="#76ff9b"/><stop offset="0.585" stop-color="#b4ff91"/><stop offset="0.703" stop-color="#ffff78"/><stop offset="0.811" stop-color="#ffcc3d"/><stop offset="0.858" stop-color="#ffbc19"/><stop offset="0.873" stop-color="#ffb700"/><stop offset="1.000" stop-color="#ff9500"/></linearGradient><linearGradient id="c71" gradientUnits="userSpaceOnUse" x1="57.3" x2="270.9" y1="0" y2="0"><stop offset="0.000" stop-color="#00ffc4"/><stop offset="0.425" stop-color="#00ffa8"/><stop offset="0.449" stop-color="#00ffa6"/><stop offset="0.453" stop-color="#08ffa5"/><stop offset="0.458" stop-color="#24ffa5"/><stop offset="0.467" stop-color="#3fffa4"/><stop offset="0.491" stop-color="#65ffa1"/><stop offset="0.542" stop-color="#9aff9a"/><stop offset="0.650" stop-color="#e7ff88"/><stop offset="0.692" stop-color="#fffd7e"/><stop offset="0.799" stop-color="#ffcb45"/><stop offset="0.855" stop-color="#ffb71f"/><stop offset="0.869" stop-color="#ffb30e"/><stop offset="0.879" stop-color="#ffb000"/><stop offset="1.000" stop-color="#ff9000"/></linearGradient><linearGradient id="c72" gradientUnits="userSpaceOnUse" x1="57.6" x2="273.0" y1="0" y2="0"><stop offset="0.000" stop-color="#00ffc7"/><stop offset="0.426" stop-color="#00ffab"/><stop offset="0.444" stop-color="#00ffa9"/><stop offset="0.449" stop-color="#21ffa9"/><stop offset="0.458" stop-color="#3dffa8"/><stop offset="0.481" stop-color="#65ffa5"/><stop offset="0.532" stop-color="#9aff9f"/><stop offset="0.639" stop-color="#e8ff8d"/><stop offset="0.681" stop-color="#fffc83"/><stop offset="0.787" stop-color="#ffca4c"/><stop offset="0.856" stop-color="#ffb221"/><stop offset="0.875" stop-color="#ffac0a"/><stop offset="0.880" stop-color="#ffab00"/><stop offset="1.000" stop-color="#ff8b00"/></linearGradient><linearGradient id="c73" gradientUnits="userSpaceOnUse" x1="57.9" x2="275.2" y1="0" y2="0"><stop offset="0.000" stop-color="#00ffc9"/><stop offset="0.431" stop-color="#00ffad"/><stop offset="0.436" stop-color="#00ffad"/><stop offset="0.440" stop-color="#1dffac"/><stop offset="0.450" stop-color="#3cffab"/><stop offset="0.472" stop-color="#64ffa9"/><stop offset="0.523" stop-color="#9bffa3"/><stop offset="0.628" stop-color="#e9ff93"/><stop offset="0.665" stop-color="#fffe8a"/><stop offset="0.771" stop-color="#ffca55"/><stop offset="0.853" stop-color="#ffad26"/><stop offset="0.876" stop-color="#ffa60e"/><stop offset="0.885" stop-color="#ffa400"/><stop offset="1.000" stop-color="#ff8600"/></linearGradient><linearGradient id="c74" gradientUnits="userSpaceOnUse" x1="58.1" x2="277.3" y1="0" y2="0"><stop offset="0.000" stop-color="#00ffcb"/><stop offset="0.427" stop-color="#00ffb1"/><stop offset="0.436" stop-color="#2dffb0"/><stop offset="0.450" stop-color="#4effae"/><stop offset="0.482" stop-color="#7bffab"/><stop offset="0.550" stop-color="#b9ffa2"/><stop offset="0.650" stop-color="#ffff92"/><stop offset="0.750" stop-color="#ffcc5f"/><stop offset="0.855" stop-color="#ffa827"/><stop offset="0.877" stop-color="#ffa111"/><stop offset="0.886" stop-color="#ff9e01"/><stop offset="1.000" stop-color="#ff8200"/></linearGradient><linearGradient id="c75" gradientUnits="userSpaceOnUse" x1="58.5" x2="279.4" y1="0" y2="0"><stop offset="0.000" stop-color="#00ffce"/><stop offset="0.421" stop-color="#00ffb4"/><stop offset="0.425" stop-color="#20ffb4"/><stop offset="0.434" stop-color="#3effb3"/><stop offset="0.457" stop-color="#67ffb1"/><stop offset="0.507" stop-color="#9dffab"/><stop offset="0.611" stop-color="#edff9d"/><stop offset="0.643" stop-color="#fffc95"/><stop offset="0.742" stop-color="#ffc963"/><stop offset="0.855" stop-color="#ffa228"/><stop offset="0.882" stop-color="#ff9a0e"/><stop offset="0.891" stop-color="#ff9800"/><stop offset="1.000" stop-color="#ff7d00"/></linearGradient><linearGradient id="c76" gradientUnits="userSpaceOnUse" x1="58.8" x2="281.6" y1="0" y2="0"><stop offset="0.000" stop-color="#00ffd0"/><stop offset="0.413" stop-color="#00ffb8"/><stop offset="0.417" stop-color="#1cffb8"/><stop offset="0.426" stop-color="#3cffb7"/><stop offset="0.448" stop-color="#66ffb5"/><stop offset="0.493" stop-color="#9affb0"/><stop offset="0.592" stop-color="#e8ffa3"/><stop offset="0.628" stop-color="#fffd9c"/><stop offset="0.726" stop-color="#ffca6a"/><stop offset="0.857" stop-color="#ff9d29"/><stop offset="0.883" stop-color="#ff9511"/><stop offset="0.892" stop-color="#ff9302"/><stop offset="1.000" stop-color="#ff7800"/></linearGradient><linearGradient id="c77" gradientUnits="userSpaceOnUse" x1="59.1" x2="283.7" y1="0" y2="0"><stop offset="0.000" stop-color="#00ffd2"/><stop offset="0.404" stop-color="#00ffbc"/><stop offset="0.413" stop-color="#2dffbb"/><stop offset="0.427" stop-color="#4fffba"/><stop offset="0.458" stop-color="#7dffb7"/><stop offset="0.524" stop-color="#bdffb0"/><stop offset="0.613" stop-color="#ffffa3"/><stop offset="0.707" stop-color="#ffcc72"/><stop offset="0.858" stop-color="#ff972a"/><stop offset="0.889" stop-color="#ff8f0e"/><stop offset="0.898" stop-color="#ff8c00"/><stop offset="1.000" stop-color="#ff7300"/></linearGradient><linearGradient id="c78" gradientUnits="userSpaceOnUse" x1="59.4" x2="285.8" y1="0" y2="0"><stop offset="0.000" stop-color="#00ffd5"/><stop offset="0.396" stop-color="#00ffc0"/><stop offset="0.401" stop-color="#12ffbf"/><stop offset="0.405" stop-color="#2affbf"/><stop offset="0.419" stop-color="#4effbe"/><stop offset="0.449" stop-color="#7dffbb"/><stop offset="0.511" stop-color="#bbffb5"/><stop offset="0.604" stop-color="#fffda7"/><stop offset="0.696" stop-color="#ffca77"/><stop offset="0.850" stop-color="#ff9430"/><stop offset="0.890" stop-color="#ff8911"/><stop offset="0.899" stop-color="#ff8702"/><stop offset="1.000" stop-color="#ff6e00"/></linearGradient><linearGradient id="c79" gradientUnits="userSpaceOnUse" x1="59.7" x2="287.9" y1="0" y2="0"><stop offset="0.000" stop-color="#00ffd7"/><stop offset="0.389" stop-color="#00ffc3"/><stop offset="0.393" stop-color="#0affc3"/><stop offset="0.397" stop-color="#27ffc3"/><stop offset="0.406" stop-color="#43ffc2"/><stop offset="0.428" stop-color="#6cffc0"/><stop offset="0.476" stop-color="#a3ffbc"/><stop offset="0.581" stop-color="#f9ffb0"/><stop offset="0.594" stop-color="#fffcac"/><stop offset="0.686" stop-color="#ffc97b"/><stop offset="0.838" stop-color="#ff9337"/><stop offset="0.886" stop-color="#ff8518"/><stop offset="0.904" stop-color="#ff8100"/><stop offset="1.000" stop-color="#ff6900"/></linearGradient><linearGradient id="c80" gradientUnits="userSpaceOnUse" x1="60.1" x2="290.1" y1="0" y2="0"><stop offset="0.000" stop-color="#00ffd9"/><stop offset="0.383" stop-color="#00ffc7"/><stop offset="0.391" stop-color="#2cffc7"/><stop offset="0.404" stop-color="#50ffc6"/><stop offset="0.435" stop-color="#80ffc3"/><stop offset="0.496" stop-color="#beffbe"/><stop offset="0.578" stop-color="#ffffb4"/><stop offset="0.665" stop-color="#ffcc84"/><stop offset="0.809" stop-color="#ff9646"/><stop offset="0.883" stop-color="#ff811e"/><stop offset="0.900" stop-color="#ff7d0b"/><stop offset="0.909" stop-color="#ff7b00"/><stop offset="1.000" stop-color="#ff6400"/></linearGradient><linearGradient id="c81" gradientUnits="userSpaceOnUse" x1="60.4" x2="292.2" y1="0" y2="0"><stop offset="0.000" stop-color="#00ffdc"/><stop offset="0.375" stop-color="#00ffcb"/><stop offset="0.379" stop-color="#0fffcb"/><stop offset="0.384" stop-color="#2affca"/><stop offset="0.392" stop-color="#45ffca"/><stop offset="0.414" stop-color="#6effc8"/><stop offset="0.461" stop-color="#a7ffc4"/><stop offset="0.565" stop-color="#feffba"/><stop offset="0.659" stop-color="#ffc886"/><stop offset="0.806" stop-color="#ff9248"/><stop offset="0.884" stop-color="#ff7c1f"/><stop offset="0.905" stop-color="#ff7707"/><stop offset="0.909" stop-color="#ff7500"/><stop offset="1.000" stop-color="#ff5f00"/></linearGradient><linearGradient id="c82" gradientUnits="userSpaceOnUse" x1="60.7" x2="294.3" y1="0" y2="0"><stop offset="0.000" stop-color="#00ffde"/><stop offset="0.368" stop-color="#00ffcf"/><stop offset="0.372" stop-color="#07ffcf"/><stop offset="0.376" stop-color="#27ffce"/><stop offset="0.385" stop-color="#44ffce"/><stop offset="0.406" stop-color="#6effcc"/><stop offset="0.453" stop-color="#a7ffc9"/><stop offset="0.551" stop-color="#fcffc0"/><stop offset="0.654" stop-color="#ffc488"/><stop offset="0.803" stop-color="#ff8e4a"/><stop offset="0.885" stop-color="#ff7720"/><stop offset="0.906" stop-color="#ff710b"/><stop offset="0.915" stop-color="#ff6f00"/><stop offset="1.000" stop-color="#ff5900"/></linearGradient><linearGradient id="c83" gradientUnits="userSpaceOnUse" x1="61.1" x2="296.4" y1="0" y2="0"><stop offset="0.000" stop-color="#00ffe1"/><stop offset="0.364" stop-color="#00ffd3"/><stop offset="0.369" stop-color="#25ffd2"/><stop offset="0.377" stop-color="#43ffd2"/><stop offset="0.398" stop-color="#6effd0"/><stop offset="0.441" stop-color="#a3ffce"/><stop offset="0.534" stop-color="#f7ffc6"/><stop offset="0.551" stop-color="#fff9bf"/><stop offset="0.636" stop-color="#ffc78f"/><stop offset="0.780" stop-color="#ff9053"/><stop offset="0.881" stop-color="#ff7324"/><stop offset="0.907" stop-color="#ff6c0e"/><stop offset="0.915" stop-color="#ff6a00"/><stop offset="1.000" stop-color="#ff5400"/></linearGradient><linearGradient id="c84" gradientUnits="userSpaceOnUse" x1="61.5" x2="298.6" y1="0" y2="0"><stop offset="0.000" stop-color="#00ffe3"/><stop offset="0.357" stop-color="#00ffd6"/><stop offset="0.361" stop-color="#22ffd6"/><stop offset="0.370" stop-color="#42ffd6"/><stop offset="0.391" stop-color="#6effd5"/><stop offset="0.433" stop-color="#a4ffd2"/><stop offset="0.525" stop-color="#f9ffcb"/><stop offset="0.538" stop-color="#fffbc6"/><stop offset="0.622" stop-color="#ffc795"/><stop offset="0.761" stop-color="#ff915b"/><stop offset="0.878" stop-color="#ff6e27"/><stop offset="0.908" stop-color="#ff6610"/><stop offset="0.920" stop-color="#ff6300"/><stop offset="1.000" stop-color="#ff4e00"/></linearGradient><linearGradient id="c85" gradientUnits="userSpaceOnUse" x1="61.8" x2="300.7" y1="0" y2="0"><stop offset="0.000" stop-color="#00ffe6"/><stop offset="0.347" stop-color="#00ffdb"/><stop offset="0.351" stop-color="#06ffda"/><stop offset="0.356" stop-color="#28ffda"/><stop offset="0.364" stop-color="#46ffda"/><stop offset="0.385" stop-color="#70ffd9"/><stop offset="0.431" stop-color="#abffd6"/><stop offset="0.519" stop-color="#fcffd0"/><stop offset="0.615" stop-color="#ffc497"/><stop offset="0.753" stop-color="#ff8e5e"/><stop offset="0.879" stop-color="#ff6928"/><stop offset="0.912" stop-color="#ff600e"/><stop offset="0.921" stop-color="#ff5e01"/><stop offset="1.000" stop-color="#ff4800"/></linearGradient><linearGradient id="c86" gradientUnits="userSpaceOnUse" x1="62.2" x2="302.8" y1="0" y2="0"><stop offset="0.000" stop-color="#00ffe9"/><stop offset="0.344" stop-color="#00ffde"/><stop offset="0.349" stop-color="#26ffde"/><stop offset="0.357" stop-color="#45ffde"/><stop offset="0.378" stop-color="#70ffdd"/><stop offset="0.419" stop-color="#a8ffdb"/><stop offset="0.510" stop-color="#feffd5"/><stop offset="0.589" stop-color="#ffcba3"/><stop offset="0.718" stop-color="#ff946b"/><stop offset="0.876" stop-color="#ff642b"/><stop offset="0.913" stop-color="#ff5a10"/><stop offset="0.925" stop-color="#ff5700"/><stop offset="1.000" stop-color="#ff4100"/></linearGradient><linearGradient id="c87" gradientUnits="userSpaceOnUse" x1="62.6" x2="305.0" y1="0" y2="0"><stop offset="0.000" stop-color="#00ffeb"/><stop offset="0.337" stop-color="#00ffe2"/><stop offset="0.342" stop-color="#24ffe2"/><stop offset="0.350" stop-color="#44ffe2"/><stop offset="0.370" stop-color="#71ffe1"/><stop offset="0.412" stop-color="#a8ffdf"/><stop offset="0.498" stop-color="#fdffda"/><stop offset="0.588" stop-color="#ffc4a2"/><stop offset="0.720" stop-color="#ff8e6a"/><stop offset="0.881" stop-color="#ff5d2a"/><stop offset="0.918" stop-color="#ff530d"/><stop offset="0.926" stop-color="#ff5001"/><stop offset="1.000" stop-color="#ff3a00"/></linearGradient><linearGradient id="c88" gradientUnits="userSpaceOnUse" x1="63.0" x2="307.1" y1="0" y2="0"><stop offset="0.000" stop-color="#00ffee"/><stop offset="0.331" stop-color="#00ffe7"/><stop offset="0.335" stop-color="#21ffe6"/><stop offset="0.343" stop-color="#43ffe6"/><stop offset="0.359" stop-color="#69ffe6"/><stop offset="0.396" stop-color="#a0ffe4"/><stop offset="0.473" stop-color="#f0ffe0"/><stop offset="0.494" stop-color="#fffcdc"/><stop offset="0.567" stop-color="#ffc9ac"/><stop offset="0.690" stop-color="#ff9375"/><stop offset="0.882" stop-color="#ff572a"/><stop offset="0.918" stop-color="#ff4c10"/><stop offset="0.931" stop-color="#ff4900"/><stop offset="1.000" stop-color="#ff3100"/></linearGradient><linearGradient id="c89" gradientUnits="userSpaceOnUse" x1="63.4" x2="309.2" y1="0" y2="0"><stop offset="0.000" stop-color="#00fff1"/><stop offset="0.325" stop-color="#00ffeb"/><stop offset="0.329" stop-color="#27ffea"/><stop offset="0.337" stop-color="#47ffea"/><stop offset="0.358" stop-color="#74ffea"/><stop offset="0.398" stop-color="#acffe8"/><stop offset="0.480" stop-color="#ffffe5"/><stop offset="0.549" stop-color="#ffcdb5"/><stop offset="0.663" stop-color="#ff987f"/><stop offset="0.882" stop-color="#ff512b"/><stop offset="0.919" stop-color="#ff4612"/><stop offset="0.935" stop-color="#ff4000"/><stop offset="1.000" stop-color="#ff2800"/></linearGradient><linearGradient id="c90" gradientUnits="userSpaceOnUse" x1="63.8" x2="311.4" y1="0" y2="0"><stop offset="0.000" stop-color="#00fff4"/><stop offset="0.319" stop-color="#00ffef"/><stop offset="0.323" stop-color="#26ffef"/><stop offset="0.331" stop-color="#46ffef"/><stop offset="0.347" stop-color="#6cffee"/><stop offset="0.383" stop-color="#a3ffed"/><stop offset="0.460" stop-color="#f5ffeb"/><stop offset="0.476" stop-color="#fff9e5"/><stop offset="0.548" stop-color="#ffc6b3"/><stop offset="0.669" stop-color="#ff8f7c"/><stop offset="0.883" stop-color="#ff4a2b"/><stop offset="0.923" stop-color="#ff3d10"/><stop offset="0.935" stop-color="#ff3900"/><stop offset="1.000" stop-color="#ff1b00"/></linearGradient><linearGradient id="c91" gradientUnits="userSpaceOnUse" x1="64.2" x2="313.5" y1="0" y2="0"><stop offset="0.000" stop-color="#00fff7"/><stop offset="0.312" stop-color="#00fff3"/><stop offset="0.316" stop-color="#24fff3"/><stop offset="0.324" stop-color="#46fff3"/><stop offset="0.340" stop-color="#6dfff3"/><stop offset="0.376" stop-color="#a4fff2"/><stop offset="0.452" stop-color="#f8fff0"/><stop offset="0.464" stop-color="#fffbec"/><stop offset="0.532" stop-color="#ffc8bb"/><stop offset="0.648" stop-color="#ff9284"/><stop offset="0.884" stop-color="#ff432c"/><stop offset="0.924" stop-color="#ff3512"/><stop offset="0.940" stop-color="#ff2e00"/><stop offset="0.988" stop-color="#ff1200"/><stop offset="1.000" stop-color="#ff0400"/></linearGradient><linearGradient id="c92" gradientUnits="userSpaceOnUse" x1="64.6" x2="315.7" y1="0" y2="0"><stop offset="0.000" stop-color="#00fff9"/><stop offset="0.306" stop-color="#00fff7"/><stop offset="0.310" stop-color="#22fff7"/><stop offset="0.313" stop-color="#37fff7"/><stop offset="0.325" stop-color="#5cfff7"/><stop offset="0.353" stop-color="#8ffff7"/><stop offset="0.409" stop-color="#d5fff6"/><stop offset="0.452" stop-color="#fffcf3"/><stop offset="0.520" stop-color="#ffc9c0"/><stop offset="0.631" stop-color="#ff938a"/><stop offset="0.889" stop-color="#ff3a2a"/><stop offset="0.929" stop-color="#ff290f"/><stop offset="0.940" stop-color="#ff2300"/><stop offset="0.972" stop-color="#ff0900"/><stop offset="0.980" stop-color="#ff0000"/><stop offset="1.000" stop-color="#ff0000"/></linearGradient><linearGradient id="c93" gradientUnits="userSpaceOnUse" x1="65.0" x2="317.8" y1="0" y2="0"><stop offset="0.000" stop-color="#00fffc"/><stop offset="0.300" stop-color="#00fffc"/><stop offset="0.304" stop-color="#28fffc"/><stop offset="0.312" stop-color="#49fffc"/><stop offset="0.328" stop-color="#70fffc"/><stop offset="0.364" stop-color="#a9fffb"/><stop offset="0.439" stop-color="#fefffb"/><stop offset="0.510" stop-color="#ffc8c4"/><stop offset="0.621" stop-color="#ff918e"/><stop offset="0.889" stop-color="#ff312b"/><stop offset="0.929" stop-color="#ff1c11"/><stop offset="0.945" stop-color="#ff0f00"/><stop offset="0.957" stop-color="#ff0000"/><stop offset="1.000" stop-color="#ff0000"/></linearGradient><linearGradient id="c94" gradientUnits="userSpaceOnUse" x1="65.4" x2="319.9" y1="0" y2="0"><stop offset="0.000" stop-color="#00ffff"/><stop offset="0.294" stop-color="#00feff"/><stop offset="0.298" stop-color="#27feff"/><stop offset="0.306" stop-color="#49feff"/><stop offset="0.322" stop-color="#70feff"/><stop offset="0.357" stop-color="#a9feff"/><stop offset="0.431" stop-color="#fefdff"/><stop offset="0.498" stop-color="#ffc8ca"/><stop offset="0.604" stop-color="#ff9294"/><stop offset="0.882" stop-color="#ff2a2f"/><stop offset="0.922" stop-color="#ff0f19"/><stop offset="0.933" stop-color="#ff000f"/><stop offset="0.945" stop-color="#ff0000"/><stop offset="1.000" stop-color="#ff0000"/></linearGradient><linearGradient id="c95" gradientUnits="userSpaceOnUse" x1="65.8" x2="322.1" y1="0" y2="0"><stop offset="0.000" stop-color="#00fbff"/><stop offset="0.288" stop-color="#00f9ff"/><stop offset="0.292" stop-color="#24f9ff"/><stop offset="0.300" stop-color="#47f9ff"/><stop offset="0.315" stop-color="#6ef9ff"/><stop offset="0.350" stop-color="#a7f9ff"/><stop offset="0.424" stop-color="#fbf8ff"/><stop offset="0.440" stop-color="#ffecf4"/><stop offset="0.510" stop-color="#ffbac1"/><stop offset="0.626" stop-color="#ff838a"/><stop offset="0.860" stop-color="#ff2a39"/><stop offset="0.899" stop-color="#ff0f28"/><stop offset="0.911" stop-color="#ff0022"/><stop offset="0.942" stop-color="#ff0008"/><stop offset="0.953" stop-color="#ff0000"/><stop offset="1.000" stop-color="#ff0000"/></linearGradient><linearGradient id="c96" gradientUnits="userSpaceOnUse" x1="66.3" x2="324.2" y1="0" y2="0"><stop offset="0.000" stop-color="#00f8ff"/><stop offset="0.283" stop-color="#02f5ff"/><stop offset="0.287" stop-color="#29f5ff"/><stop offset="0.295" stop-color="#49f5ff"/><stop offset="0.314" stop-color="#76f5ff"/><stop offset="0.353" stop-color="#b0f4ff"/><stop offset="0.422" stop-color="#fef2ff"/><stop offset="0.496" stop-color="#ffbbc7"/><stop offset="0.609" stop-color="#ff8490"/><stop offset="0.837" stop-color="#ff2b42"/><stop offset="0.876" stop-color="#ff1033"/><stop offset="0.888" stop-color="#ff002e"/><stop offset="0.934" stop-color="#ff0013"/><stop offset="0.950" stop-color="#ff0001"/><stop offset="1.000" stop-color="#ff0000"/></linearGradient><linearGradient id="c97" gradientUnits="userSpaceOnUse" x1="66.7" x2="326.3" y1="0" y2="0"><stop offset="0.000" stop-color="#00f5ff"/><stop offset="0.277" stop-color="#00f1ff"/><stop offset="0.281" stop-color="#27f1ff"/><stop offset="0.288" stop-color="#48f1ff"/><stop offset="0.308" stop-color="#75f0ff"/><stop offset="0.346" stop-color="#aeefff"/><stop offset="0.419" stop-color="#ffedff"/><stop offset="0.488" stop-color="#ffb8ca"/><stop offset="0.600" stop-color="#ff8293"/><stop offset="0.815" stop-color="#ff2c4a"/><stop offset="0.854" stop-color="#ff103c"/><stop offset="0.865" stop-color="#ff0038"/><stop offset="0.931" stop-color="#ff0018"/><stop offset="0.954" stop-color="#ff0000"/><stop offset="1.000" stop-color="#ff0000"/></linearGradient><linearGradient id="c98" gradientUnits="userSpaceOnUse" x1="67.1" x2="328.4" y1="0" y2="0"><stop offset="0.000" stop-color="#00f2ff"/><stop offset="0.271" stop-color="#00edff"/><stop offset="0.275" stop-color="#26ecff"/><stop offset="0.282" stop-color="#46ecff"/><stop offset="0.302" stop-color="#73ecff"/><stop offset="0.340" stop-color="#adeaff"/><stop offset="0.416" stop-color="#ffe7ff"/><stop offset="0.481" stop-color="#ffb6cc"/><stop offset="0.588" stop-color="#ff8097"/><stop offset="0.794" stop-color="#ff2c51"/><stop offset="0.832" stop-color="#ff1044"/><stop offset="0.844" stop-color="#ff0041"/><stop offset="0.927" stop-color="#ff001b"/><stop offset="0.958" stop-color="#ff0000"/><stop offset="1.000" stop-color="#ff0000"/></linearGradient><linearGradient id="c99" gradientUnits="userSpaceOnUse" x1="67.6" x2="330.6" y1="0" y2="0"><stop offset="0.000" stop-color="#00efff"/><stop offset="0.265" stop-color="#00e8ff"/><stop offset="0.269" stop-color="#24e8ff"/><stop offset="0.277" stop-color="#45e8ff"/><stop offset="0.295" stop-color="#72e7ff"/><stop offset="0.333" stop-color="#abe6ff"/><stop offset="0.409" stop-color="#fce2ff"/><stop offset="0.492" stop-color="#ffa8c3"/><stop offset="0.614" stop-color="#ff708c"/><stop offset="0.777" stop-color="#ff2a57"/><stop offset="0.811" stop-color="#ff104c"/><stop offset="0.822" stop-color="#ff0048"/><stop offset="0.924" stop-color="#ff001f"/><stop offset="0.951" stop-color="#ff0008"/><stop offset="0.962" stop-color="#ff0000"/><stop offset="1.000" stop-color="#ff0000"/></linearGradient><linearGradient id="c100" gradientUnits="userSpaceOnUse" x1="68.0" x2="332.7" y1="0" y2="0"><stop offset="0.000" stop-color="#00ecff"/><stop offset="0.257" stop-color="#00e4ff"/><stop offset="0.260" stop-color="#06e4ff"/><stop offset="0.264" stop-color="#29e4ff"/><stop offset="0.272" stop-color="#47e4ff"/><stop offset="0.291" stop-color="#73e3ff"/><stop offset="0.328" stop-color="#aae1ff"/><stop offset="0.408" stop-color="#ffdcff"/><stop offset="0.475" stop-color="#ffabcc"/><stop offset="0.585" stop-color="#ff7597"/><stop offset="0.755" stop-color="#ff2b5e"/><stop offset="0.789" stop-color="#ff1153"/><stop offset="0.800" stop-color="#ff004f"/><stop offset="0.921" stop-color="#ff0022"/><stop offset="0.951" stop-color="#ff000b"/><stop offset="0.962" stop-color="#ff0000"/><stop offset="1.000" stop-color="#ff0000"/></linearGradient><linearGradient id="c101" gradientUnits="userSpaceOnUse" x1="68.5" x2="334.8" y1="0" y2="0"><stop offset="0.000" stop-color="#00e9ff"/><stop offset="0.251" stop-color="#00e0ff"/><stop offset="0.255" stop-color="#03e0ff"/><stop offset="0.258" stop-color="#28e0ff"/><stop offset="0.266" stop-color="#46e0ff"/><stop offset="0.285" stop-color="#71dfff"/><stop offset="0.322" stop-color="#a9ddff"/><stop offset="0.401" stop-color="#fcd7ff"/><stop offset="0.487" stop-color="#ff9dc3"/><stop offset="0.610" stop-color="#ff648c"/><stop offset="0.738" stop-color="#ff2963"/><stop offset="0.768" stop-color="#ff115a"/><stop offset="0.779" stop-color="#ff0056"/><stop offset="0.918" stop-color="#ff0024"/><stop offset="0.951" stop-color="#ff000d"/><stop offset="0.963" stop-color="#ff0000"/><stop offset="1.000" stop-color="#ff0000"/></linearGradient><linearGradient id="c102" gradientUnits="userSpaceOnUse" x1="68.9" x2="337.0" y1="0" y2="0"><stop offset="0.000" stop-color="#00e6ff"/><stop offset="0.249" stop-color="#02dcff"/><stop offset="0.253" stop-color="#27dcff"/><stop offset="0.260" stop-color="#45dcff"/><stop offset="0.279" stop-color="#70daff"/><stop offset="0.316" stop-color="#a7d8ff"/><stop offset="0.398" stop-color="#fdd1ff"/><stop offset="0.480" stop-color="#ff9bc6"/><stop offset="0.602" stop-color="#ff618f"/><stop offset="0.721" stop-color="#ff2768"/><stop offset="0.747" stop-color="#ff1160"/><stop offset="0.758" stop-color="#ff005c"/><stop offset="0.914" stop-color="#ff0027"/><stop offset="0.952" stop-color="#ff000f"/><stop offset="0.967" stop-color="#ff0000"/><stop offset="1.000" stop-color="#ff0000"/></linearGradient><linearGradient id="c103" gradientUnits="userSpaceOnUse" x1="69.4" x2="339.1" y1="0" y2="0"><stop offset="0.000" stop-color="#00e3ff"/><stop offset="0.241" stop-color="#00d8ff"/><stop offset="0.244" stop-color="#10d8ff"/><stop offset="0.248" stop-color="#2bd8ff"/><stop offset="0.256" stop-color="#47d7ff"/><stop offset="0.274" stop-color="#71d6ff"/><stop offset="0.315" stop-color="#abd3ff"/><stop offset="0.396" stop-color="#ffccff"/><stop offset="0.467" stop-color="#ff9bcb"/><stop offset="0.581" stop-color="#ff6396"/><stop offset="0.700" stop-color="#ff286e"/><stop offset="0.730" stop-color="#ff0c65"/><stop offset="0.737" stop-color="#ff0063"/><stop offset="0.911" stop-color="#ff0029"/><stop offset="0.956" stop-color="#ff000d"/><stop offset="0.967" stop-color="#ff0000"/><stop offset="1.000" stop-color="#ff0000"/></linearGradient><linearGradient id="c104" gradientUnits="userSpaceOnUse" x1="69.9" x2="341.2" y1="0" y2="0"><stop offset="0.000" stop-color="#00e0ff"/><stop offset="0.235" stop-color="#00d4ff"/><stop offset="0.239" stop-color="#0ed4ff"/><stop offset="0.243" stop-color="#2ad4ff"/><stop offset="0.250" stop-color="#46d3ff"/><stop offset="0.268" stop-color="#70d2ff"/><stop offset="0.309" stop-color="#aacfff"/><stop offset="0.390" stop-color="#fdc7ff"/><stop offset="0.474" stop-color="#ff8fc5"/><stop offset="0.599" stop-color="#ff538f"/><stop offset="0.687" stop-color="#ff2372"/><stop offset="0.710" stop-color="#ff0c6b"/><stop offset="0.717" stop-color="#ff0069"/><stop offset="0.912" stop-color="#ff0029"/><stop offset="0.956" stop-color="#ff000f"/><stop offset="0.971" stop-color="#ff0000"/><stop offset="1.000" stop-color="#ff0000"/></linearGradient><linearGradient id="c105" gradientUnits="userSpaceOnUse" x1="70.4" x2="343.4" y1="0" y2="0"><stop offset="0.000" stop-color="#00ddff"/><stop offset="0.230" stop-color="#00d1ff"/><stop offset="0.234" stop-color="#0ed0ff"/><stop offset="0.237" stop-color="#2ad0ff"/><stop offset="0.245" stop-color="#46cfff"/><stop offset="0.263" stop-color="#6fceff"/><stop offset="0.303" stop-color="#a8cbff"/><stop offset="0.387" stop-color="#fdc1ff"/><stop offset="0.467" stop-color="#ff8cc8"/><stop offset="0.591" stop-color="#ff4f91"/><stop offset="0.668" stop-color="#ff2478"/><stop offset="0.690" stop-color="#ff0c71"/><stop offset="0.697" stop-color="#ff006f"/><stop offset="0.912" stop-color="#ff002a"/><stop offset="0.956" stop-color="#ff0010"/><stop offset="0.971" stop-color="#ff0000"/><stop offset="1.000" stop-color="#ff0000"/></linearGradient><linearGradient id="c106" gradientUnits="userSpaceOnUse" x1="70.9" x2="343.5" y1="0" y2="0"><stop offset="0.000" stop-color="#00daff"/><stop offset="0.227" stop-color="#00cdff"/><stop offset="0.234" stop-color="#2eccff"/><stop offset="0.245" stop-color="#51cbff"/><stop offset="0.271" stop-color="#81c9ff"/><stop offset="0.322" stop-color="#c0c4ff"/><stop offset="0.388" stop-color="#ffbbfe"/><stop offset="0.462" stop-color="#ff8acb"/><stop offset="0.582" stop-color="#ff4e95"/><stop offset="0.656" stop-color="#ff227d"/><stop offset="0.674" stop-color="#ff0e77"/><stop offset="0.681" stop-color="#ff0075"/><stop offset="0.919" stop-color="#ff002a"/><stop offset="0.967" stop-color="#ff000f"/><stop offset="0.982" stop-color="#ff0000"/><stop offset="1.000" stop-color="#ff0000"/></linearGradient><linearGradient id="c107" gradientUnits="userSpaceOnUse" x1="71.4" x2="339.0" y1="0" y2="0"><stop offset="0.000" stop-color="#00d7ff"/><stop offset="0.228" stop-color="#00c9ff"/><stop offset="0.235" stop-color="#2fc8ff"/><stop offset="0.246" stop-color="#52c7ff"/><stop offset="0.272" stop-color="#81c5ff"/><stop offset="0.325" stop-color="#bfbfff"/><stop offset="0.396" stop-color="#ffb4fd"/><stop offset="0.470" stop-color="#ff84cb"/><stop offset="0.593" stop-color="#ff4796"/><stop offset="0.657" stop-color="#ff1e81"/><stop offset="0.672" stop-color="#ff0b7c"/><stop offset="0.679" stop-color="#ff007a"/><stop offset="0.940" stop-color="#ff002c"/><stop offset="0.993" stop-color="#ff000f"/><stop offset="1.000" stop-color="#ff0007"/></linearGradient><linearGradient id="c108" gradientUnits="userSpaceOnUse" x1="71.9" x2="334.4" y1="0" y2="0"><stop offset="0.000" stop-color="#00d4ff"/><stop offset="0.228" stop-color="#00c5ff"/><stop offset="0.232" stop-color="#1bc5ff"/><stop offset="0.236" stop-color="#30c4ff"/><stop offset="0.247" stop-color="#52c3ff"/><stop offset="0.274" stop-color="#80c1ff"/><stop offset="0.331" stop-color="#c2baff"/><stop offset="0.399" stop-color="#ffb0ff"/><stop offset="0.479" stop-color="#ff7fcb"/><stop offset="0.608" stop-color="#ff3d95"/><stop offset="0.658" stop-color="#ff1a85"/><stop offset="0.673" stop-color="#ff0281"/><stop offset="0.970" stop-color="#ff002a"/><stop offset="1.000" stop-color="#ff001c"/></linearGradient><linearGradient id="c109" gradientUnits="userSpaceOnUse" x1="72.4" x2="329.9" y1="0" y2="0"><stop offset="0.000" stop-color="#00d1ff"/><stop offset="0.229" stop-color="#00c1ff"/><stop offset="0.233" stop-color="#1ec1ff"/><stop offset="0.240" stop-color="#3ec0ff"/><stop offset="0.260" stop-color="#68beff"/><stop offset="0.298" stop-color="#9dbaff"/><stop offset="0.384" stop-color="#edaeff"/><stop offset="0.407" stop-color="#ffaafe"/><stop offset="0.488" stop-color="#ff79cb"/><stop offset="0.624" stop-color="#ff3294"/><stop offset="0.659" stop-color="#ff1489"/><stop offset="0.671" stop-color="#ff0086"/><stop offset="0.996" stop-color="#ff002a"/><stop offset="1.000" stop-color="#ff0029"/></linearGradient><linearGradient id="c110" gradientUnits="userSpaceOnUse" x1="72.9" x2="325.3" y1="0" y2="0"><stop offset="0.000" stop-color="#00ceff"/><stop offset="0.229" stop-color="#00bdff"/><stop offset="0.233" stop-color="#20bdff"/><stop offset="0.241" stop-color="#3ebcff"/><stop offset="0.261" stop-color="#68baff"/><stop offset="0.300" stop-color="#9cb6ff"/><stop offset="0.387" stop-color="#eba9ff"/><stop offset="0.415" stop-color="#ffa3fd"/><stop offset="0.498" stop-color="#ff72cb"/><stop offset="0.628" stop-color="#ff2c98"/><stop offset="0.656" stop-color="#ff138f"/><stop offset="0.668" stop-color="#ff008b"/><stop offset="1.000" stop-color="#ff0032"/></linearGradient><linearGradient id="c111" gradientUnits="userSpaceOnUse" x1="73.4" x2="320.7" y1="0" y2="0"><stop offset="0.000" stop-color="#00cbff"/><stop offset="0.230" stop-color="#00b9ff"/><stop offset="0.234" stop-color="#21b9ff"/><stop offset="0.242" stop-color="#3fb8ff"/><stop offset="0.262" stop-color="#68b6ff"/><stop offset="0.306" stop-color="#9fb1ff"/><stop offset="0.399" stop-color="#f0a3ff"/><stop offset="0.423" stop-color="#ff9cfc"/><stop offset="0.512" stop-color="#ff6ac9"/><stop offset="0.629" stop-color="#ff299c"/><stop offset="0.653" stop-color="#ff1294"/><stop offset="0.661" stop-color="#ff0292"/><stop offset="1.000" stop-color="#ff003b"/></linearGradient><linearGradient id="c112" gradientUnits="userSpaceOnUse" x1="74.0" x2="316.1" y1="0" y2="0"><stop offset="0.000" stop-color="#00c7ff"/><stop offset="0.230" stop-color="#01b6ff"/><stop offset="0.235" stop-color="#23b5ff"/><stop offset="0.243" stop-color="#40b4ff"/><stop offset="0.263" stop-color="#68b2ff"/><stop offset="0.309" stop-color="#9fadff"/><stop offset="0.403" stop-color="#ee9eff"/><stop offset="0.428" stop-color="#ff98fe"/><stop offset="0.519" stop-color="#ff65ca"/><stop offset="0.626" stop-color="#ff29a2"/><stop offset="0.650" stop-color="#ff109a"/><stop offset="0.658" stop-color="#ff0097"/><stop offset="1.000" stop-color="#ff0042"/></linearGradient><linearGradient id="c113" gradientUnits="userSpaceOnUse" x1="74.5" x2="311.6" y1="0" y2="0"><stop offset="0.000" stop-color="#00c4ff"/><stop offset="0.227" stop-color="#00b2ff"/><stop offset="0.231" stop-color="#07b2ff"/><stop offset="0.235" stop-color="#25b1ff"/><stop offset="0.244" stop-color="#40b1ff"/><stop offset="0.265" stop-color="#68aeff"/><stop offset="0.311" stop-color="#9ea8ff"/><stop offset="0.408" stop-color="#ed99ff"/><stop offset="0.437" stop-color="#ff91fc"/><stop offset="0.529" stop-color="#ff5eca"/><stop offset="0.622" stop-color="#ff29a8"/><stop offset="0.647" stop-color="#ff0ea0"/><stop offset="0.655" stop-color="#ff009d"/><stop offset="0.996" stop-color="#ff004a"/><stop offset="1.000" stop-color="#ff0049"/></linearGradient><linearGradient id="c114" gradientUnits="userSpaceOnUse" x1="75.1" x2="307.0" y1="0" y2="0"><stop offset="0.000" stop-color="#00c1ff"/><stop offset="0.228" stop-color="#00aeff"/><stop offset="0.237" stop-color="#2baeff"/><stop offset="0.250" stop-color="#4dacff"/><stop offset="0.280" stop-color="#7aa8ff"/><stop offset="0.345" stop-color="#b99fff"/><stop offset="0.444" stop-color="#ff8bfd"/><stop offset="0.543" stop-color="#ff55c9"/><stop offset="0.621" stop-color="#ff26ad"/><stop offset="0.642" stop-color="#ff0fa6"/><stop offset="0.651" stop-color="#ff00a3"/><stop offset="0.931" stop-color="#ff005e"/><stop offset="1.000" stop-color="#ff004f"/></linearGradient><linearGradient id="c115" gradientUnits="userSpaceOnUse" x1="75.7" x2="302.4" y1="0" y2="0"><stop offset="0.000" stop-color="#00beff"/><stop offset="0.229" stop-color="#00abff"/><stop offset="0.238" stop-color="#2daaff"/><stop offset="0.251" stop-color="#4da8ff"/><stop offset="0.282" stop-color="#7aa4ff"/><stop offset="0.348" stop-color="#b89bff"/><stop offset="0.449" stop-color="#ff87ff"/><stop offset="0.551" stop-color="#ff50cb"/><stop offset="0.621" stop-color="#ff22b1"/><stop offset="0.639" stop-color="#ff0cab"/><stop offset="0.643" stop-color="#ff03aa"/><stop offset="0.894" stop-color="#ff006c"/><stop offset="1.000" stop-color="#ff0055"/></linearGradient><linearGradient id="c116" gradientUnits="userSpaceOnUse" x1="76.2" x2="297.9" y1="0" y2="0"><stop offset="0.000" stop-color="#00bbff"/><stop offset="0.230" stop-color="#00a7ff"/><stop offset="0.234" stop-color="#1ca6ff"/><stop offset="0.243" stop-color="#3ba5ff"/><stop offset="0.266" stop-color="#63a3ff"/><stop offset="0.315" stop-color="#999cff"/><stop offset="0.419" stop-color="#e789ff"/><stop offset="0.459" stop-color="#ff7ffe"/><stop offset="0.563" stop-color="#ff47cb"/><stop offset="0.617" stop-color="#ff22b7"/><stop offset="0.635" stop-color="#ff0ab1"/><stop offset="0.640" stop-color="#ff00b0"/><stop offset="0.878" stop-color="#ff0074"/><stop offset="1.000" stop-color="#ff005b"/></linearGradient><linearGradient id="c117" gradientUnits="userSpaceOnUse" x1="76.8" x2="293.3" y1="0" y2="0"><stop offset="0.000" stop-color="#00b8ff"/><stop offset="0.230" stop-color="#00a3ff"/><stop offset="0.235" stop-color="#1fa2ff"/><stop offset="0.244" stop-color="#3ca1ff"/><stop offset="0.267" stop-color="#649fff"/><stop offset="0.318" stop-color="#9997ff"/><stop offset="0.424" stop-color="#e584ff"/><stop offset="0.470" stop-color="#ff77fc"/><stop offset="0.581" stop-color="#ff39c9"/><stop offset="0.622" stop-color="#ff17ba"/><stop offset="0.636" stop-color="#ff00b6"/><stop offset="0.866" stop-color="#ff007c"/><stop offset="1.000" stop-color="#ff0061"/></linearGradient><linearGradient id="c118" gradientUnits="userSpaceOnUse" x1="77.4" x2="288.7" y1="0" y2="0"><stop offset="0.000" stop-color="#00b4ff"/><stop offset="0.231" stop-color="#019fff"/><stop offset="0.236" stop-color="#229fff"/><stop offset="0.245" stop-color="#3d9dff"/><stop offset="0.269" stop-color="#649aff"/><stop offset="0.321" stop-color="#9893ff"/><stop offset="0.429" stop-color="#e47fff"/><stop offset="0.476" stop-color="#ff72fe"/><stop offset="0.590" stop-color="#ff30cb"/><stop offset="0.618" stop-color="#ff15c1"/><stop offset="0.627" stop-color="#ff03be"/><stop offset="0.844" stop-color="#ff0085"/><stop offset="1.000" stop-color="#ff0066"/></linearGradient><linearGradient id="c119" gradientUnits="userSpaceOnUse" x1="78.0" x2="284.1" y1="0" y2="0"><stop offset="0.000" stop-color="#00b1ff"/><stop offset="0.227" stop-color="#009cff"/><stop offset="0.232" stop-color="#0a9bff"/><stop offset="0.237" stop-color="#249bff"/><stop offset="0.251" stop-color="#4899ff"/><stop offset="0.285" stop-color="#7594ff"/><stop offset="0.357" stop-color="#b189ff"/><stop offset="0.483" stop-color="#fe6cff"/><stop offset="0.589" stop-color="#ff2cd0"/><stop offset="0.614" stop-color="#ff13c7"/><stop offset="0.623" stop-color="#ff00c4"/><stop offset="0.831" stop-color="#ff008d"/><stop offset="1.000" stop-color="#ff006c"/></linearGradient><linearGradient id="c120" gradientUnits="userSpaceOnUse" x1="78.7" x2="279.6" y1="0" y2="0"><stop offset="0.000" stop-color="#00aeff"/><stop offset="0.229" stop-color="#0098ff"/><stop offset="0.239" stop-color="#2b97ff"/><stop offset="0.254" stop-color="#4b95ff"/><stop offset="0.289" stop-color="#7690ff"/><stop offset="0.363" stop-color="#b284ff"/><stop offset="0.493" stop-color="#fe64ff"/><stop offset="0.587" stop-color="#ff29d6"/><stop offset="0.607" stop-color="#ff14ce"/><stop offset="0.617" stop-color="#ff00cb"/><stop offset="0.816" stop-color="#ff0095"/><stop offset="1.000" stop-color="#ff0071"/></linearGradient><linearGradient id="c121" gradientUnits="userSpaceOnUse" x1="79.3" x2="275.0" y1="0" y2="0"><stop offset="0.000" stop-color="#00aaff"/><stop offset="0.230" stop-color="#0094ff"/><stop offset="0.235" stop-color="#1c93ff"/><stop offset="0.245" stop-color="#3992ff"/><stop offset="0.270" stop-color="#608fff"/><stop offset="0.327" stop-color="#9486ff"/><stop offset="0.444" stop-color="#df6eff"/><stop offset="0.510" stop-color="#ff58fc"/><stop offset="0.582" stop-color="#ff29dd"/><stop offset="0.602" stop-color="#ff12d5"/><stop offset="0.612" stop-color="#ff00d2"/><stop offset="0.806" stop-color="#ff009d"/><stop offset="1.000" stop-color="#ff0077"/></linearGradient><linearGradient id="c122" gradientUnits="userSpaceOnUse" x1="80.0" x2="270.4" y1="0" y2="0"><stop offset="0.000" stop-color="#00a7ff"/><stop offset="0.230" stop-color="#0090ff"/><stop offset="0.236" stop-color="#208fff"/><stop offset="0.246" stop-color="#3b8eff"/><stop offset="0.272" stop-color="#618aff"/><stop offset="0.330" stop-color="#9481ff"/><stop offset="0.450" stop-color="#de67ff"/><stop offset="0.518" stop-color="#ff50fe"/><stop offset="0.581" stop-color="#ff23e2"/><stop offset="0.597" stop-color="#ff0edc"/><stop offset="0.602" stop-color="#ff02da"/><stop offset="0.785" stop-color="#ff00a6"/><stop offset="1.000" stop-color="#ff007c"/></linearGradient><linearGradient id="c123" gradientUnits="userSpaceOnUse" x1="80.7" x2="265.8" y1="0" y2="0"><stop offset="0.000" stop-color="#00a3ff"/><stop offset="0.226" stop-color="#008dff"/><stop offset="0.231" stop-color="#098cff"/><stop offset="0.237" stop-color="#238bff"/><stop offset="0.253" stop-color="#4689ff"/><stop offset="0.290" stop-color="#7284ff"/><stop offset="0.371" stop-color="#ad75ff"/><stop offset="0.500" stop-color="#f252ff"/><stop offset="0.532" stop-color="#ff43fc"/><stop offset="0.581" stop-color="#ff1ce8"/><stop offset="0.597" stop-color="#ff00e2"/><stop offset="0.774" stop-color="#ff00ae"/><stop offset="1.000" stop-color="#ff0081"/></linearGradient><linearGradient id="c124" gradientUnits="userSpaceOnUse" x1="81.4" x2="261.3" y1="0" y2="0"><stop offset="0.000" stop-color="#00a0ff"/><stop offset="0.228" stop-color="#0088ff"/><stop offset="0.233" stop-color="#1888ff"/><stop offset="0.244" stop-color="#3786ff"/><stop offset="0.272" stop-color="#5e82ff"/><stop offset="0.333" stop-color="#9178ff"/><stop offset="0.461" stop-color="#da5bff"/><stop offset="0.539" stop-color="#ff3aff"/><stop offset="0.572" stop-color="#ff1df1"/><stop offset="0.589" stop-color="#ff00ea"/><stop offset="0.761" stop-color="#ff00b6"/><stop offset="1.000" stop-color="#ff0087"/></linearGradient><linearGradient id="c125" gradientUnits="userSpaceOnUse" x1="82.1" x2="256.7" y1="0" y2="0"><stop offset="0.000" stop-color="#009cff"/><stop offset="0.229" stop-color="#0084ff"/><stop offset="0.234" stop-color="#1d83ff"/><stop offset="0.246" stop-color="#3982ff"/><stop offset="0.274" stop-color="#5f7eff"/><stop offset="0.337" stop-color="#9173ff"/><stop offset="0.469" stop-color="#d953ff"/><stop offset="0.537" stop-color="#f935ff"/><stop offset="0.566" stop-color="#ff1bf9"/><stop offset="0.577" stop-color="#ff06f4"/><stop offset="0.589" stop-color="#ff00f0"/><stop offset="0.760" stop-color="#ff00bc"/><stop offset="1.000" stop-color="#ff008c"/></linearGradient><linearGradient id="c126" gradientUnits="userSpaceOnUse" x1="82.8" x2="252.1" y1="0" y2="0"><stop offset="0.000" stop-color="#0098ff"/><stop offset="0.224" stop-color="#0081ff"/><stop offset="0.229" stop-color="#0780ff"/><stop offset="0.235" stop-color="#227fff"/><stop offset="0.253" stop-color="#447dff"/><stop offset="0.294" stop-color="#6f76ff"/><stop offset="0.382" stop-color="#a966ff"/><stop offset="0.494" stop-color="#e044ff"/><stop offset="0.547" stop-color="#f725ff"/><stop offset="0.565" stop-color="#ff0fff"/><stop offset="0.571" stop-color="#ff00fd"/><stop offset="0.729" stop-color="#ff00c9"/><stop offset="0.994" stop-color="#ff0093"/><stop offset="1.000" stop-color="#ff0092"/></linearGradient><linearGradient id="c127" gradientUnits="userSpaceOnUse" x1="83.6" x2="247.6" y1="0" y2="0"><stop offset="0.000" stop-color="#0095ff"/><stop offset="0.226" stop-color="#007cff"/><stop offset="0.238" stop-color="#297bff"/><stop offset="0.256" stop-color="#4878ff"/><stop offset="0.299" stop-color="#7171ff"/><stop offset="0.390" stop-color="#aa5fff"/><stop offset="0.494" stop-color="#db3eff"/><stop offset="0.537" stop-color="#ed25ff"/><stop offset="0.555" stop-color="#f50fff"/><stop offset="0.561" stop-color="#f700ff"/><stop offset="0.591" stop-color="#ff00fa"/><stop offset="0.756" stop-color="#ff00c8"/><stop offset="1.000" stop-color="#ff0097"/></linearGradient><linearGradient id="c128" gradientUnits="userSpaceOnUse" x1="84.3" x2="243.0" y1="0" y2="0"><stop offset="0.000" stop-color="#0091ff"/><stop offset="0.226" stop-color="#0078ff"/><stop offset="0.233" stop-color="#1d77ff"/><stop offset="0.245" stop-color="#3875ff"/><stop offset="0.277" stop-color="#5d70ff"/><stop offset="0.346" stop-color="#8f64ff"/><stop offset="0.472" stop-color="#cd41ff"/><stop offset="0.522" stop-color="#e227ff"/><stop offset="0.541" stop-color="#ea14ff"/><stop offset="0.553" stop-color="#ef00ff"/><stop offset="0.604" stop-color="#ff00fc"/><stop offset="0.780" stop-color="#ff00c8"/><stop offset="1.000" stop-color="#ff009d"/></linearGradient><linearGradient id="c129" gradientUnits="userSpaceOnUse" x1="85.1" x2="238.4" y1="0" y2="0"><stop offset="0.000" stop-color="#008dff"/><stop offset="0.221" stop-color="#0074ff"/><stop offset="0.227" stop-color="#0873ff"/><stop offset="0.234" stop-color="#2273ff"/><stop offset="0.253" stop-color="#4370ff"/><stop offset="0.299" stop-color="#6e68ff"/><stop offset="0.396" stop-color="#a654ff"/><stop offset="0.487" stop-color="#cf34ff"/><stop offset="0.526" stop-color="#df18ff"/><stop offset="0.539" stop-color="#e402ff"/><stop offset="0.617" stop-color="#ff00fd"/><stop offset="0.799" stop-color="#ff00c9"/><stop offset="1.000" stop-color="#ff00a2"/></linearGradient><linearGradient id="c130" gradientUnits="userSpaceOnUse" x1="85.8" x2="233.8" y1="0" y2="0"><stop offset="0.000" stop-color="#0089ff"/><stop offset="0.221" stop-color="#0070ff"/><stop offset="0.235" stop-color="#266eff"/><stop offset="0.255" stop-color="#456bff"/><stop offset="0.302" stop-color="#6e63ff"/><stop offset="0.403" stop-color="#a64cff"/><stop offset="0.483" stop-color="#c92eff"/><stop offset="0.517" stop-color="#d614ff"/><stop offset="0.530" stop-color="#db00ff"/><stop offset="0.638" stop-color="#ff00fc"/><stop offset="0.826" stop-color="#ff00c9"/><stop offset="1.000" stop-color="#ff00a8"/></linearGradient><linearGradient id="c131" gradientUnits="userSpaceOnUse" x1="86.6" x2="229.3" y1="0" y2="0"><stop offset="0.000" stop-color="#0085ff"/><stop offset="0.224" stop-color="#006bff"/><stop offset="0.231" stop-color="#1e6aff"/><stop offset="0.245" stop-color="#3868ff"/><stop offset="0.280" stop-color="#5c62ff"/><stop offset="0.357" stop-color="#8c53ff"/><stop offset="0.462" stop-color="#bc31ff"/><stop offset="0.497" stop-color="#c91bff"/><stop offset="0.517" stop-color="#d100ff"/><stop offset="0.650" stop-color="#ff00fe"/><stop offset="0.846" stop-color="#ff00cb"/><stop offset="1.000" stop-color="#ff00ae"/></linearGradient><linearGradient id="c132" gradientUnits="userSpaceOnUse" x1="87.4" x2="224.7" y1="0" y2="0"><stop offset="0.000" stop-color="#0080ff"/><stop offset="0.217" stop-color="#0067ff"/><stop offset="0.225" stop-color="#0b66ff"/><stop offset="0.232" stop-color="#2265ff"/><stop offset="0.254" stop-color="#4361ff"/><stop offset="0.304" stop-color="#6c58ff"/><stop offset="0.413" stop-color="#a43dff"/><stop offset="0.471" stop-color="#bb23ff"/><stop offset="0.493" stop-color="#c30fff"/><stop offset="0.500" stop-color="#c603ff"/><stop offset="0.601" stop-color="#e900ff"/><stop offset="0.674" stop-color="#ff00fd"/><stop offset="0.884" stop-color="#ff00c9"/><stop offset="1.000" stop-color="#ff00b4"/></linearGradient><linearGradient id="c133" gradientUnits="userSpaceOnUse" x1="88.2" x2="220.1" y1="0" y2="0"><stop offset="0.000" stop-color="#007cff"/><stop offset="0.220" stop-color="#0062ff"/><stop offset="0.227" stop-color="#1961ff"/><stop offset="0.242" stop-color="#355eff"/><stop offset="0.280" stop-color="#5a58ff"/><stop offset="0.364" stop-color="#8a45ff"/><stop offset="0.447" stop-color="#ae27ff"/><stop offset="0.477" stop-color="#b910ff"/><stop offset="0.485" stop-color="#bc04ff"/><stop offset="0.530" stop-color="#cc00ff"/><stop offset="0.697" stop-color="#ff00fd"/><stop offset="0.917" stop-color="#ff00c9"/><stop offset="1.000" stop-color="#ff00bb"/></linearGradient><linearGradient id="c134" gradientUnits="userSpaceOnUse" x1="89.0" x2="215.6" y1="0" y2="0"><stop offset="0.000" stop-color="#0077ff"/><stop offset="0.213" stop-color="#005eff"/><stop offset="0.220" stop-color="#045cff"/><stop offset="0.228" stop-color="#1f5bff"/><stop offset="0.252" stop-color="#4157ff"/><stop offset="0.307" stop-color="#6a4dff"/><stop offset="0.417" stop-color="#9f2cff"/><stop offset="0.457" stop-color="#ae14ff"/><stop offset="0.472" stop-color="#b300ff"/><stop offset="0.717" stop-color="#ff00fe"/><stop offset="0.945" stop-color="#ff00cb"/><stop offset="1.000" stop-color="#ff00c1"/></linearGradient><linearGradient id="c135" gradientUnits="userSpaceOnUse" x1="89.8" x2="211.0" y1="0" y2="0"><stop offset="0.000" stop-color="#0073ff"/><stop offset="0.213" stop-color="#0058ff"/><stop offset="0.230" stop-color="#2455ff"/><stop offset="0.254" stop-color="#4351ff"/><stop offset="0.311" stop-color="#6b45ff"/><stop offset="0.410" stop-color="#9826ff"/><stop offset="0.443" stop-color="#a50fff"/><stop offset="0.451" stop-color="#a803ff"/><stop offset="0.525" stop-color="#c000ff"/><stop offset="0.746" stop-color="#ff00fd"/><stop offset="0.992" stop-color="#ff00c9"/><stop offset="1.000" stop-color="#ff00c8"/></linearGradient><linearGradient id="c136" gradientUnits="userSpaceOnUse" x1="90.7" x2="206.4" y1="0" y2="0"><stop offset="0.000" stop-color="#006eff"/><stop offset="0.216" stop-color="#0152ff"/><stop offset="0.224" stop-color="#1d50ff"/><stop offset="0.241" stop-color="#364dff"/><stop offset="0.293" stop-color="#5f43ff"/><stop offset="0.388" stop-color="#8c25ff"/><stop offset="0.422" stop-color="#9a0fff"/><stop offset="0.431" stop-color="#9d04ff"/><stop offset="0.474" stop-color="#ac00ff"/><stop offset="0.767" stop-color="#ff00ff"/><stop offset="1.000" stop-color="#ff00cf"/></linearGradient><linearGradient id="c137" gradientUnits="userSpaceOnUse" x1="91.6" x2="201.8" y1="0" y2="0"><stop offset="0.000" stop-color="#0068ff"/><stop offset="0.207" stop-color="#004dff"/><stop offset="0.225" stop-color="#234aff"/><stop offset="0.252" stop-color="#4245ff"/><stop offset="0.315" stop-color="#6a36ff"/><stop offset="0.387" stop-color="#8919ff"/><stop offset="0.414" stop-color="#9300ff"/><stop offset="0.658" stop-color="#dc00ff"/><stop offset="0.811" stop-color="#ff00fc"/><stop offset="1.000" stop-color="#ff00d6"/></linearGradient><linearGradient id="c138" gradientUnits="userSpaceOnUse" x1="92.5" x2="197.3" y1="0" y2="0"><stop offset="0.000" stop-color="#0063ff"/><stop offset="0.210" stop-color="#0046ff"/><stop offset="0.219" stop-color="#1c44ff"/><stop offset="0.238" stop-color="#3640ff"/><stop offset="0.295" stop-color="#5e33ff"/><stop offset="0.362" stop-color="#7c19ff"/><stop offset="0.390" stop-color="#8700ff"/><stop offset="0.619" stop-color="#cc00ff"/><stop offset="0.838" stop-color="#ff00fe"/><stop offset="1.000" stop-color="#ff00de"/></linearGradient><linearGradient id="c139" gradientUnits="userSpaceOnUse" x1="93.4" x2="192.7" y1="0" y2="0"><stop offset="0.000" stop-color="#005dff"/><stop offset="0.200" stop-color="#0040ff"/><stop offset="0.220" stop-color="#233cff"/><stop offset="0.250" stop-color="#4136ff"/><stop offset="0.320" stop-color="#691fff"/><stop offset="0.350" stop-color="#750dff"/><stop offset="0.360" stop-color="#7902ff"/><stop offset="0.560" stop-color="#b700ff"/><stop offset="0.880" stop-color="#ff00fd"/><stop offset="1.000" stop-color="#ff00e6"/></linearGradient><linearGradient id="c140" gradientUnits="userSpaceOnUse" x1="94.3" x2="188.1" y1="0" y2="0"><stop offset="0.000" stop-color="#0056ff"/><stop offset="0.202" stop-color="#0138ff"/><stop offset="0.213" stop-color="#1d35ff"/><stop offset="0.234" stop-color="#3530ff"/><stop offset="0.298" stop-color="#5d1aff"/><stop offset="0.330" stop-color="#6b02ff"/><stop offset="0.500" stop-color="#a200ff"/><stop offset="0.862" stop-color="#f500ff"/><stop offset="0.936" stop-color="#ff00fa"/><stop offset="1.000" stop-color="#ff00ef"/></linearGradient><linearGradient id="c141" gradientUnits="userSpaceOnUse" x1="95.3" x2="183.5" y1="0" y2="0"><stop offset="0.000" stop-color="#004fff"/><stop offset="0.191" stop-color="#0030ff"/><stop offset="0.213" stop-color="#242aff"/><stop offset="0.247" stop-color="#4120ff"/><stop offset="0.281" stop-color="#540fff"/><stop offset="0.303" stop-color="#5f00ff"/><stop offset="0.449" stop-color="#9000ff"/><stop offset="0.764" stop-color="#d900ff"/><stop offset="0.966" stop-color="#ff00fe"/><stop offset="1.000" stop-color="#ff00f8"/></linearGradient><linearGradient id="c142" gradientUnits="userSpaceOnUse" x1="96.4" x2="179.0" y1="0" y2="0"><stop offset="0.000" stop-color="#0047ff"/><stop offset="0.169" stop-color="#002aff"/><stop offset="0.181" stop-color="#0027ff"/><stop offset="0.193" stop-color="#0823ff"/><stop offset="0.205" stop-color="#1f1fff"/><stop offset="0.241" stop-color="#3f0fff"/><stop offset="0.265" stop-color="#4c00ff"/><stop offset="0.386" stop-color="#7b00ff"/><stop offset="0.639" stop-color="#b900ff"/><stop offset="1.000" stop-color="#fd00ff"/></linearGradient><linearGradient id="c143" gradientUnits="userSpaceOnUse" x1="97.5" x2="174.4" y1="0" y2="0"><stop offset="0.000" stop-color="#003eff"/><stop offset="0.143" stop-color="#0023ff"/><stop offset="0.182" stop-color="#0015ff"/><stop offset="0.195" stop-color="#1b0eff"/><stop offset="0.221" stop-color="#3400ff"/><stop offset="0.299" stop-color="#5b00ff"/><stop offset="0.468" stop-color="#8e00ff"/><stop offset="0.818" stop-color="#d400ff"/><stop offset="1.000" stop-color="#f300ff"/></linearGradient><linearGradient id="c144" gradientUnits="userSpaceOnUse" x1="98.6" x2="169.8" y1="0" y2="0"><stop offset="0.000" stop-color="#0034ff"/><stop offset="0.111" stop-color="#001bff"/><stop offset="0.167" stop-color="#0000ff"/><stop offset="0.194" stop-color="#2400ff"/><stop offset="0.236" stop-color="#4000ff"/><stop offset="0.347" stop-color="#6b00ff"/><stop offset="0.583" stop-color="#a300ff"/><stop offset="1.000" stop-color="#e900ff"/></linearGradient><linearGradient id="c145" gradientUnits="userSpaceOnUse" x1="99.8" x2="165.3" y1="0" y2="0"><stop offset="0.000" stop-color="#0025ff"/><stop offset="0.076" stop-color="#000eff"/><stop offset="0.106" stop-color="#0000ff"/><stop offset="0.152" stop-color="#0000ff"/><stop offset="0.182" stop-color="#2100ff"/><stop offset="0.227" stop-color="#3f00ff"/><stop offset="0.348" stop-color="#6a00ff"/><stop offset="0.606" stop-color="#a200ff"/><stop offset="1.000" stop-color="#df00ff"/></linearGradient><linearGradient id="c146" gradientUnits="userSpaceOnUse" x1="101.0" x2="160.7" y1="0" y2="0"><stop offset="0.000" stop-color="#000cff"/><stop offset="0.017" stop-color="#0003ff"/><stop offset="0.133" stop-color="#0000ff"/><stop offset="0.150" stop-color="#0a00ff"/><stop offset="0.167" stop-color="#2000ff"/><stop offset="0.217" stop-color="#3e00ff"/><stop offset="0.333" stop-color="#6500ff"/><stop offset="0.600" stop-color="#9b00ff"/><stop offset="1.000" stop-color="#d600ff"/></linearGradient><linearGradient id="c147" gradientUnits="userSpaceOnUse" x1="102.4" x2="156.1" y1="0" y2="0"><stop offset="0.000" stop-color="#0000ff"/><stop offset="0.111" stop-color="#0000ff"/><stop offset="0.130" stop-color="#0900ff"/><stop offset="0.148" stop-color="#1f00ff"/><stop offset="0.204" stop-color="#3d00ff"/><stop offset="0.333" stop-color="#6400ff"/><stop offset="0.630" stop-color="#9a00ff"/><stop offset="1.000" stop-color="#cc00ff"/></linearGradient><linearGradient id="c148" gradientUnits="userSpaceOnUse" x1="103.9" x2="151.5" y1="0" y2="0"><stop offset="0.000" stop-color="#0000ff"/><stop offset="0.083" stop-color="#0000ff"/><stop offset="0.104" stop-color="#0c00ff"/><stop offset="0.125" stop-color="#2000ff"/><stop offset="0.187" stop-color="#3e00ff"/><stop offset="0.354" stop-color="#6800ff"/><stop offset="0.708" stop-color="#9f00ff"/><stop offset="1.000" stop-color="#c200ff"/></linearGradient><linearGradient id="c149" gradientUnits="userSpaceOnUse" x1="105.6" x2="147.0" y1="0" y2="0"><stop offset="0.000" stop-color="#0000ff"/><stop offset="0.048" stop-color="#0000ff"/><stop offset="0.095" stop-color="#2300ff"/><stop offset="0.190" stop-color="#4600ff"/><stop offset="0.405" stop-color="#7000ff"/><stop offset="0.857" stop-color="#a900ff"/><stop offset="1.000" stop-color="#b700ff"/></linearGradient><linearGradient id="c150" gradientUnits="userSpaceOnUse" x1="107.5" x2="142.4" y1="0" y2="0"><stop offset="0.000" stop-color="#0400ff"/><stop offset="0.029" stop-color="#1d00ff"/><stop offset="0.114" stop-color="#3c00ff"/><stop offset="0.314" stop-color="#6200ff"/><stop offset="0.771" stop-color="#9800ff"/><stop offset="1.000" stop-color="#ad00ff"/></linearGradient><linearGradient id="c151" gradientUnits="userSpaceOnUse" x1="109.6" x2="137.8" y1="0" y2="0"><stop offset="0.000" stop-color="#3100ff"/><stop offset="0.207" stop-color="#5700ff"/><stop offset="0.655" stop-color="#8700ff"/><stop offset="1.000" stop-color="#a200ff"/></linearGradient><linearGradient id="c152" gradientUnits="userSpaceOnUse" x1="112.0" x2="133.2" y1="0" y2="0"><stop offset="0.000" stop-color="#4600ff"/><stop offset="0.455" stop-color="#7300ff"/><stop offset="1.000" stop-color="#9700ff"/></linearGradient><linearGradient id="c153" gradientUnits="userSpaceOnUse" x1="114.4" x2="128.7" y1="0" y2="0"><stop offset="0.000" stop-color="#5700ff"/><stop offset="0.933" stop-color="#8800ff"/><stop offset="1.000" stop-color="#8b00ff"/></linearGradient><linearGradient id="c154" gradientUnits="userSpaceOnUse" x1="116.8" x2="124.1" y1="0" y2="0"><stop offset="0.000" stop-color="#6300ff"/><stop offset="1.000" stop-color="#7e00ff"/></linearGradient><clipPath id="ccl"><path d="M120.6 332.9 L120.6 332.9 L120.6 332.9 L120.6 332.9 L120.5 332.9 L120.5 332.9 L120.5 332.9 L120.5 333.0 L120.5 333.0 L120.5 333.0 L120.5 333.0 L120.4 333.0 L120.4 333.0 L120.4 333.0 L120.4 333.0 L120.4 333.0 L120.4 333.0 L120.3 333.0 L120.3 333.0 L120.3 333.0 L120.3 333.0 L120.2 333.0 L120.2 333.0 L120.2 333.0 L120.2 333.0 L120.1 333.0 L120.1 333.0 L120.1 333.0 L120.0 333.0 L120.0 333.0 L120.0 333.0 L119.9 333.0 L119.9 333.0 L119.9 333.0 L119.8 333.0 L119.8 333.0 L119.7 333.0 L119.7 333.0 L119.6 333.0 L119.6 332.9 L119.5 332.9 L119.4 332.9 L119.3 332.8 L119.3 332.8 L119.2 332.7 L119.1 332.6 L119.0 332.6 L118.9 332.5 L118.8 332.4 L118.6 332.3 L118.5 332.2 L118.4 332.1 L118.2 332.0 L118.1 331.9 L117.9 331.7 L117.7 331.6 L117.5 331.4 L117.4 331.3 L117.2 331.1 L117.0 330.9 L116.7 330.7 L116.5 330.5 L116.3 330.3 L116.0 330.1 L115.7 329.9 L115.4 329.7 L115.1 329.4 L114.8 329.1 L114.4 328.8 L114.0 328.5 L113.7 328.2 L113.3 327.9 L112.8 327.5 L112.4 327.2 L111.9 326.8 L111.4 326.4 L110.9 325.9 L110.4 325.4 L109.9 324.9 L109.3 324.4 L108.7 323.7 L108.1 323.1 L107.4 322.5 L106.8 321.7 L106.1 320.9 L105.3 320.0 L104.5 318.9 L103.7 317.7 L102.8 316.4 L101.8 314.9 L100.8 313.3 L99.8 311.5 L98.7 309.6 L97.5 307.5 L96.4 305.1 L95.1 302.5 L93.8 299.6 L92.4 296.5 L90.9 293.1 L89.4 289.5 L87.9 285.4 L86.2 281.0 L84.4 276.4 L82.6 271.3 L80.8 265.9 L78.9 260.1 L77.1 253.9 L75.2 247.2 L73.4 240.2 L71.5 232.8 L69.7 225.0 L67.9 216.9 L66.1 208.3 L64.3 199.4 L62.6 190.3 L61.1 181.2 L59.6 172.0 L58.3 162.6 L57.0 153.1 L55.9 143.6 L55.0 134.5 L54.3 125.5 L53.8 116.5 L53.4 107.7 L53.2 99.3 L53.3 91.1 L53.7 83.3 L54.2 75.8 L55.0 68.6 L56.0 61.8 L57.3 55.7 L58.8 50.0 L60.6 44.8 L62.6 40.2 L64.8 36.1 L67.2 32.7 L69.7 29.9 L72.4 27.8 L75.2 26.3 L78.2 25.2 L81.1 24.5 L84.2 24.3 L87.3 24.7 L90.5 25.4 L93.7 26.3 L96.9 27.4 L100.1 28.6 L103.3 30.0 L106.6 31.6 L109.8 33.2 L112.9 34.9 L116.0 36.6 L119.0 38.4 L122.0 40.2 L125.0 42.1 L128.0 44.0 L130.9 45.9 L133.8 47.9 L136.7 49.9 L139.6 52.0 L142.5 54.1 L145.4 56.3 L148.2 58.5 L151.1 60.7 L153.9 63.0 L156.8 65.3 L159.6 67.6 L162.5 70.0 L165.3 72.4 L168.1 74.8 L170.9 77.2 L173.8 79.6 L176.6 82.1 L179.4 84.6 L182.2 87.1 L185.0 89.6 L187.9 92.2 L190.7 94.7 L193.5 97.3 L196.4 99.8 L199.2 102.4 L202.0 105.0 L204.8 107.6 L207.6 110.2 L210.4 112.8 L213.2 115.4 L216.0 118.0 L218.8 120.6 L221.6 123.2 L224.4 125.8 L227.2 128.4 L230.0 131.0 L232.7 133.6 L235.5 136.1 L238.2 138.7 L240.9 141.2 L243.6 143.8 L246.3 146.3 L249.0 148.8 L251.6 151.3 L254.2 153.7 L256.8 156.2 L259.4 158.6 L262.0 161.0 L264.5 163.4 L267.0 165.7 L269.5 168.0 L271.9 170.3 L274.3 172.6 L276.7 174.8 L279.0 177.0 L281.3 179.1 L283.5 181.2 L285.7 183.3 L287.9 185.3 L289.9 187.3 L292.0 189.2 L293.9 191.0 L295.8 192.8 L297.7 194.5 L299.5 196.2 L301.2 197.9 L303.0 199.5 L304.6 201.1 L306.3 202.6 L307.8 204.0 L309.3 205.4 L310.8 206.8 L312.2 208.1 L313.5 209.3 L314.8 210.5 L316.0 211.7 L317.2 212.8 L318.3 213.8 L319.4 214.9 L320.4 215.8 L321.4 216.8 L322.4 217.7 L323.3 218.5 L324.1 219.3 L324.9 220.1 L325.7 220.8 L326.5 221.5 L327.2 222.2 L327.9 222.8 L328.5 223.4 L329.2 224.0 L329.8 224.6 L330.3 225.1 L330.9 225.6 L331.4 226.1 L331.9 226.6 L332.4 227.1 L332.9 227.6 L333.4 228.0 L333.8 228.4 L334.3 228.8 L334.7 229.2 L335.1 229.6 L335.4 229.9 L335.8 230.3 L336.2 230.6 L336.5 230.9 L336.8 231.2 L337.1 231.5 L337.4 231.7 L337.7 232.0 L337.9 232.2 L338.1 232.4 L338.4 232.6 L338.6 232.8 L338.8 233.0 L339.0 233.2 L339.1 233.4 L339.3 233.5 L339.5 233.7 L339.6 233.8 L339.8 234.0 L339.9 234.1 L340.0 234.2 L340.1 234.3 L340.3 234.4 L340.3 234.5 L340.4 234.6 L340.5 234.7 L340.6 234.7 L340.7 234.8 L340.7 234.9 L340.8 235.0 L340.9 235.0 L340.9 235.1 L341.0 235.1 L341.1 235.2 L341.1 235.2 L341.2 235.3 L341.2 235.3 L341.3 235.4 L341.3 235.4 L341.4 235.5 L341.4 235.5 L341.5 235.6 L341.5 235.6 L341.6 235.7 L341.6 235.7 L341.7 235.8 L341.7 235.8 L341.8 235.9 L341.8 235.9 L341.8 235.9 L341.9 235.9 L341.9 236.0 L341.9 236.0 L341.9 236.0 L341.9 236.0 L342.0 236.0 L342.0 236.0 L342.0 236.1 L342.0 236.1 L342.0 236.1 L342.0 236.1 L342.0 236.1Z"/></clipPath></defs><g stroke="#707070" stroke-width="0.850" stroke-dasharray="2.200 2.200" fill="none"><path d="M51.8 19.7V334.6"/><path d="M91.3 19.7V334.6"/><path d="M130.8 19.7V334.6"/><path d="M170.3 19.7V334.6"/><path d="M209.8 19.7V334.6"/><path d="M249.3 19.7V334.6"/><path d="M288.8 19.7V334.6"/><path d="M328.3 19.7V334.6"/><path d="M47.2 297.6H367.8"/><path d="M47.2 260.4H367.8"/><path d="M47.2 223.2H367.8"/><path d="M47.2 186.0H367.8"/><path d="M47.2 148.7H367.8"/><path d="M47.2 111.5H367.8"/><path d="M47.2 74.3H367.8"/><path d="M47.2 37.1H367.8"/></g><g clip-path="url(#ccl)"><rect x="74.7" y="24" width="19.3" height="2.3" fill="url(#c0)"/><rect x="70.7" y="26" width="29.3" height="2.3" fill="url(#c1)"/><rect x="68.1" y="28" width="36.6" height="2.3" fill="url(#c2)"/><rect x="66.3" y="30" width="42.5" height="2.3" fill="url(#c3)"/><rect x="64.8" y="32" width="47.8" height="2.3" fill="url(#c4)"/><rect x="63.4" y="34" width="52.8" height="2.3" fill="url(#c5)"/><rect x="62.3" y="36" width="57.5" height="2.3" fill="url(#c6)"/><rect x="61.3" y="38" width="61.9" height="2.3" fill="url(#c7)"/><rect x="60.4" y="40" width="66.0" height="2.3" fill="url(#c8)"/><rect x="59.5" y="42" width="70.0" height="2.3" fill="url(#c9)"/><rect x="58.7" y="44" width="73.8" height="2.3" fill="url(#c10)"/><rect x="58.0" y="46" width="77.4" height="2.3" fill="url(#c11)"/><rect x="57.3" y="48" width="80.9" height="2.3" fill="url(#c12)"/><rect x="56.8" y="50" width="84.2" height="2.3" fill="url(#c13)"/><rect x="56.3" y="52" width="87.5" height="2.3" fill="url(#c14)"/><rect x="55.7" y="54" width="90.7" height="2.3" fill="url(#c15)"/><rect x="55.3" y="56" width="93.7" height="2.3" fill="url(#c16)"/><rect x="54.9" y="58" width="96.7" height="2.3" fill="url(#c17)"/><rect x="54.5" y="60" width="99.6" height="2.3" fill="url(#c18)"/><rect x="54.2" y="62" width="102.4" height="2.3" fill="url(#c19)"/><rect x="53.9" y="64" width="105.2" height="2.3" fill="url(#c20)"/><rect x="53.6" y="66" width="107.9" height="2.3" fill="url(#c21)"/><rect x="53.4" y="68" width="110.6" height="2.3" fill="url(#c22)"/><rect x="53.1" y="70" width="113.2" height="2.3" fill="url(#c23)"/><rect x="52.9" y="72" width="115.7" height="2.3" fill="url(#c24)"/><rect x="52.7" y="74" width="118.3" height="2.3" fill="url(#c25)"/><rect x="52.6" y="76" width="120.7" height="2.3" fill="url(#c26)"/><rect x="52.4" y="78" width="123.2" height="2.3" fill="url(#c27)"/><rect x="52.3" y="80" width="125.6" height="2.3" fill="url(#c28)"/><rect x="52.1" y="82" width="128.0" height="2.3" fill="url(#c29)"/><rect x="52.1" y="84" width="130.3" height="2.3" fill="url(#c30)"/><rect x="52.0" y="86" width="132.7" height="2.3" fill="url(#c31)"/><rect x="51.9" y="88" width="135.0" height="2.3" fill="url(#c32)"/><rect x="51.8" y="90" width="137.3" height="2.3" fill="url(#c33)"/><rect x="51.8" y="92" width="139.5" height="2.3" fill="url(#c34)"/><rect x="51.8" y="94" width="141.8" height="2.3" fill="url(#c35)"/><rect x="51.8" y="96" width="144.0" height="2.3" fill="url(#c36)"/><rect x="51.8" y="98" width="146.2" height="2.3" fill="url(#c37)"/><rect x="51.8" y="100" width="148.4" height="2.3" fill="url(#c38)"/><rect x="51.8" y="102" width="150.5" height="2.3" fill="url(#c39)"/><rect x="51.8" y="104" width="152.7" height="2.3" fill="url(#c40)"/><rect x="51.9" y="106" width="154.8" height="2.3" fill="url(#c41)"/><rect x="51.9" y="108" width="156.9" height="2.3" fill="url(#c42)"/><rect x="52.0" y="110" width="159.0" height="2.3" fill="url(#c43)"/><rect x="52.1" y="112" width="161.1" height="2.3" fill="url(#c44)"/><rect x="52.2" y="114" width="163.1" height="2.3" fill="url(#c45)"/><rect x="52.3" y="116" width="165.2" height="2.3" fill="url(#c46)"/><rect x="52.4" y="118" width="167.3" height="2.3" fill="url(#c47)"/><rect x="52.5" y="120" width="169.3" height="2.3" fill="url(#c48)"/><rect x="52.6" y="122" width="171.3" height="2.3" fill="url(#c49)"/><rect x="52.7" y="124" width="173.4" height="2.3" fill="url(#c50)"/><rect x="52.9" y="126" width="175.4" height="2.3" fill="url(#c51)"/><rect x="53.0" y="128" width="177.3" height="2.3" fill="url(#c52)"/><rect x="53.2" y="130" width="179.3" height="2.3" fill="url(#c53)"/><rect x="53.3" y="132" width="181.3" height="2.3" fill="url(#c54)"/><rect x="53.5" y="134" width="183.3" height="2.3" fill="url(#c55)"/><rect x="53.7" y="136" width="185.2" height="2.3" fill="url(#c56)"/><rect x="53.9" y="138" width="187.2" height="2.3" fill="url(#c57)"/><rect x="54.1" y="140" width="189.1" height="2.3" fill="url(#c58)"/><rect x="54.3" y="142" width="191.0" height="2.3" fill="url(#c59)"/><rect x="54.5" y="144" width="193.0" height="2.3" fill="url(#c60)"/><rect x="54.7" y="146" width="194.9" height="2.3" fill="url(#c61)"/><rect x="54.9" y="148" width="196.8" height="2.3" fill="url(#c62)"/><rect x="55.2" y="150" width="198.7" height="2.3" fill="url(#c63)"/><rect x="55.4" y="152" width="200.6" height="2.3" fill="url(#c64)"/><rect x="55.6" y="154" width="202.4" height="2.3" fill="url(#c65)"/><rect x="55.9" y="156" width="204.3" height="2.3" fill="url(#c66)"/><rect x="56.2" y="158" width="206.2" height="2.3" fill="url(#c67)"/><rect x="56.4" y="160" width="208.0" height="2.3" fill="url(#c68)"/><rect x="56.7" y="162" width="209.9" height="2.3" fill="url(#c69)"/><rect x="57.0" y="164" width="211.8" height="2.3" fill="url(#c70)"/><rect x="57.3" y="166" width="213.6" height="2.3" fill="url(#c71)"/><rect x="57.6" y="168" width="215.5" height="2.3" fill="url(#c72)"/><rect x="57.9" y="170" width="217.3" height="2.3" fill="url(#c73)"/><rect x="58.1" y="172" width="219.2" height="2.3" fill="url(#c74)"/><rect x="58.5" y="174" width="221.0" height="2.3" fill="url(#c75)"/><rect x="58.8" y="176" width="222.8" height="2.3" fill="url(#c76)"/><rect x="59.1" y="178" width="224.6" height="2.3" fill="url(#c77)"/><rect x="59.4" y="180" width="226.4" height="2.3" fill="url(#c78)"/><rect x="59.7" y="182" width="228.2" height="2.3" fill="url(#c79)"/><rect x="60.1" y="184" width="230.0" height="2.3" fill="url(#c80)"/><rect x="60.4" y="186" width="231.8" height="2.3" fill="url(#c81)"/><rect x="60.7" y="188" width="233.6" height="2.3" fill="url(#c82)"/><rect x="61.1" y="190" width="235.3" height="2.3" fill="url(#c83)"/><rect x="61.5" y="192" width="237.1" height="2.3" fill="url(#c84)"/><rect x="61.8" y="194" width="238.9" height="2.3" fill="url(#c85)"/><rect x="62.2" y="196" width="240.6" height="2.3" fill="url(#c86)"/><rect x="62.6" y="198" width="242.4" height="2.3" fill="url(#c87)"/><rect x="63.0" y="200" width="244.1" height="2.3" fill="url(#c88)"/><rect x="63.4" y="202" width="245.9" height="2.3" fill="url(#c89)"/><rect x="63.8" y="204" width="247.6" height="2.3" fill="url(#c90)"/><rect x="64.2" y="206" width="249.4" height="2.3" fill="url(#c91)"/><rect x="64.6" y="208" width="251.1" height="2.3" fill="url(#c92)"/><rect x="65.0" y="210" width="252.8" height="2.3" fill="url(#c93)"/><rect x="65.4" y="212" width="254.5" height="2.3" fill="url(#c94)"/><rect x="65.8" y="214" width="256.2" height="2.3" fill="url(#c95)"/><rect x="66.3" y="216" width="257.9" height="2.3" fill="url(#c96)"/><rect x="66.7" y="218" width="259.6" height="2.3" fill="url(#c97)"/><rect x="67.1" y="220" width="261.3" height="2.3" fill="url(#c98)"/><rect x="67.6" y="222" width="263.0" height="2.3" fill="url(#c99)"/><rect x="68.0" y="224" width="264.7" height="2.3" fill="url(#c100)"/><rect x="68.5" y="226" width="266.4" height="2.3" fill="url(#c101)"/><rect x="68.9" y="228" width="268.0" height="2.3" fill="url(#c102)"/><rect x="69.4" y="230" width="269.7" height="2.3" fill="url(#c103)"/><rect x="69.9" y="232" width="271.4" height="2.3" fill="url(#c104)"/><rect x="70.4" y="234" width="273.0" height="2.3" fill="url(#c105)"/><rect x="70.9" y="236" width="272.6" height="2.3" fill="url(#c106)"/><rect x="71.4" y="238" width="267.6" height="2.3" fill="url(#c107)"/><rect x="71.9" y="240" width="262.6" height="2.3" fill="url(#c108)"/><rect x="72.4" y="242" width="257.5" height="2.3" fill="url(#c109)"/><rect x="72.9" y="244" width="252.4" height="2.3" fill="url(#c110)"/><rect x="73.4" y="246" width="247.3" height="2.3" fill="url(#c111)"/><rect x="74.0" y="248" width="242.2" height="2.3" fill="url(#c112)"/><rect x="74.5" y="250" width="237.0" height="2.3" fill="url(#c113)"/><rect x="75.1" y="252" width="231.9" height="2.3" fill="url(#c114)"/><rect x="75.7" y="254" width="226.8" height="2.3" fill="url(#c115)"/><rect x="76.2" y="256" width="221.6" height="2.3" fill="url(#c116)"/><rect x="76.8" y="258" width="216.5" height="2.3" fill="url(#c117)"/><rect x="77.4" y="260" width="211.3" height="2.3" fill="url(#c118)"/><rect x="78.0" y="262" width="206.1" height="2.3" fill="url(#c119)"/><rect x="78.7" y="264" width="200.9" height="2.3" fill="url(#c120)"/><rect x="79.3" y="266" width="195.7" height="2.3" fill="url(#c121)"/><rect x="80.0" y="268" width="190.4" height="2.3" fill="url(#c122)"/><rect x="80.7" y="270" width="185.2" height="2.3" fill="url(#c123)"/><rect x="81.4" y="272" width="179.9" height="2.3" fill="url(#c124)"/><rect x="82.1" y="274" width="174.6" height="2.3" fill="url(#c125)"/><rect x="82.8" y="276" width="169.3" height="2.3" fill="url(#c126)"/><rect x="83.6" y="278" width="164.0" height="2.3" fill="url(#c127)"/><rect x="84.3" y="280" width="158.7" height="2.3" fill="url(#c128)"/><rect x="85.1" y="282" width="153.3" height="2.3" fill="url(#c129)"/><rect x="85.8" y="284" width="148.0" height="2.3" fill="url(#c130)"/><rect x="86.6" y="286" width="142.7" height="2.3" fill="url(#c131)"/><rect x="87.4" y="288" width="137.3" height="2.3" fill="url(#c132)"/><rect x="88.2" y="290" width="131.9" height="2.3" fill="url(#c133)"/><rect x="89.0" y="292" width="126.6" height="2.3" fill="url(#c134)"/><rect x="89.8" y="294" width="121.1" height="2.3" fill="url(#c135)"/><rect x="90.7" y="296" width="115.7" height="2.3" fill="url(#c136)"/><rect x="91.6" y="298" width="110.3" height="2.3" fill="url(#c137)"/><rect x="92.5" y="300" width="104.8" height="2.3" fill="url(#c138)"/><rect x="93.4" y="302" width="99.3" height="2.3" fill="url(#c139)"/><rect x="94.3" y="304" width="93.8" height="2.3" fill="url(#c140)"/><rect x="95.3" y="306" width="88.2" height="2.3" fill="url(#c141)"/><rect x="96.4" y="308" width="82.6" height="2.3" fill="url(#c142)"/><rect x="97.5" y="310" width="76.9" height="2.3" fill="url(#c143)"/><rect x="98.6" y="312" width="71.2" height="2.3" fill="url(#c144)"/><rect x="99.8" y="314" width="65.5" height="2.3" fill="url(#c145)"/><rect x="101.0" y="316" width="59.6" height="2.3" fill="url(#c146)"/><rect x="102.4" y="318" width="53.7" height="2.3" fill="url(#c147)"/><rect x="103.9" y="320" width="47.6" height="2.3" fill="url(#c148)"/><rect x="105.6" y="322" width="41.4" height="2.3" fill="url(#c149)"/><rect x="107.5" y="324" width="34.9" height="2.3" fill="url(#c150)"/><rect x="109.6" y="326" width="28.2" height="2.3" fill="url(#c151)"/><rect x="112.0" y="328" width="21.3" height="2.3" fill="url(#c152)"/><rect x="114.4" y="330" width="14.3" height="2.3" fill="url(#c153)"/><rect x="116.8" y="332" width="7.3" height="2.3" fill="url(#c154)"/></g><g fill="#000"><circle cx="120.6" cy="332.9" r="1.550"/><circle cx="120.6" cy="332.9" r="1.550"/><circle cx="120.6" cy="332.9" r="1.550"/><circle cx="120.6" cy="332.9" r="1.550"/><circle cx="120.5" cy="332.9" r="1.550"/><circle cx="120.5" cy="332.9" r="1.550"/><circle cx="120.5" cy="332.9" r="1.550"/><circle cx="120.5" cy="333.0" r="1.550"/><circle cx="120.5" cy="333.0" r="1.550"/><circle cx="120.5" cy="333.0" r="1.550"/><circle cx="120.5" cy="333.0" r="1.550"/><circle cx="120.4" cy="333.0" r="1.550"/><circle cx="120.4" cy="333.0" r="1.550"/><circle cx="120.4" cy="333.0" r="1.550"/><circle cx="120.4" cy="333.0" r="1.550"/><circle cx="120.4" cy="333.0" r="1.550"/><circle cx="120.4" cy="333.0" r="1.550"/><circle cx="120.3" cy="333.0" r="1.550"/><circle cx="120.3" cy="333.0" r="1.550"/><circle cx="120.3" cy="333.0" r="1.550"/><circle cx="120.3" cy="333.0" r="1.550"/><circle cx="120.2" cy="333.0" r="1.550"/><circle cx="120.2" cy="333.0" r="1.550"/><circle cx="120.2" cy="333.0" r="1.550"/><circle cx="120.2" cy="333.0" r="1.550"/><circle cx="120.1" cy="333.0" r="1.550"/><circle cx="120.1" cy="333.0" r="1.550"/><circle cx="120.1" cy="333.0" r="1.550"/><circle cx="120.0" cy="333.0" r="1.550"/><circle cx="120.0" cy="333.0" r="1.550"/><circle cx="120.0" cy="333.0" r="1.550"/><circle cx="119.9" cy="333.0" r="1.550"/><circle cx="119.9" cy="333.0" r="1.550"/><circle cx="119.9" cy="333.0" r="1.550"/><circle cx="119.8" cy="333.0" r="1.550"/><circle cx="119.8" cy="333.0" r="1.550"/><circle cx="119.7" cy="333.0" r="1.550"/><circle cx="119.7" cy="333.0" r="1.550"/><circle cx="119.6" cy="333.0" r="1.550"/><circle cx="119.6" cy="332.9" r="1.550"/><circle cx="119.5" cy="332.9" r="1.550"/><circle cx="119.4" cy="332.9" r="1.550"/><circle cx="119.3" cy="332.8" r="1.550"/><circle cx="119.3" cy="332.8" r="1.550"/><circle cx="119.2" cy="332.7" r="1.550"/><circle cx="119.1" cy="332.6" r="1.550"/><circle cx="119.0" cy="332.6" r="1.550"/><circle cx="118.9" cy="332.5" r="1.550"/><circle cx="118.8" cy="332.4" r="1.550"/><circle cx="118.6" cy="332.3" r="1.550"/><circle cx="118.5" cy="332.2" r="1.550"/><circle cx="118.4" cy="332.1" r="1.550"/><circle cx="118.2" cy="332.0" r="1.550"/><circle cx="118.1" cy="331.9" r="1.550"/><circle cx="117.9" cy="331.7" r="1.550"/><circle cx="117.7" cy="331.6" r="1.550"/><circle cx="117.5" cy="331.4" r="1.550"/><circle cx="117.4" cy="331.3" r="1.550"/><circle cx="117.2" cy="331.1" r="1.550"/><circle cx="117.0" cy="330.9" r="1.550"/><circle cx="116.7" cy="330.7" r="1.550"/><circle cx="116.5" cy="330.5" r="1.550"/><circle cx="116.3" cy="330.3" r="1.550"/><circle cx="116.0" cy="330.1" r="1.550"/><circle cx="115.7" cy="329.9" r="1.550"/><circle cx="115.4" cy="329.7" r="1.550"/><circle cx="115.1" cy="329.4" r="1.550"/><circle cx="114.8" cy="329.1" r="1.550"/><circle cx="114.4" cy="328.8" r="1.550"/><circle cx="114.0" cy="328.5" r="1.550"/><circle cx="113.7" cy="328.2" r="1.550"/><circle cx="113.3" cy="327.9" r="1.550"/><circle cx="112.8" cy="327.5" r="1.550"/><circle cx="112.4" cy="327.2" r="1.550"/><circle cx="111.9" cy="326.8" r="1.550"/><circle cx="111.4" cy="326.4" r="1.550"/><circle cx="110.9" cy="325.9" r="1.550"/><circle cx="110.4" cy="325.4" r="1.550"/><circle cx="109.9" cy="324.9" r="1.550"/><circle cx="109.3" cy="324.4" r="1.550"/><circle cx="108.7" cy="323.7" r="1.550"/><circle cx="108.1" cy="323.1" r="1.550"/><circle cx="107.4" cy="322.5" r="1.550"/><circle cx="106.8" cy="321.7" r="1.550"/><circle cx="106.1" cy="320.9" r="1.550"/><circle cx="105.3" cy="320.0" r="1.550"/><circle cx="104.5" cy="318.9" r="1.550"/><circle cx="103.7" cy="317.7" r="1.550"/><circle cx="102.8" cy="316.4" r="1.550"/><circle cx="101.8" cy="314.9" r="1.550"/><circle cx="100.8" cy="313.3" r="1.550"/><circle cx="99.8" cy="311.5" r="1.550"/><circle cx="98.7" cy="309.6" r="1.550"/><circle cx="97.5" cy="307.5" r="1.550"/><circle cx="96.4" cy="305.1" r="1.550"/><circle cx="95.1" cy="302.5" r="1.550"/><circle cx="93.8" cy="299.6" r="1.550"/><circle cx="92.4" cy="296.5" r="1.550"/><circle cx="90.9" cy="293.1" r="1.550"/><circle cx="89.4" cy="289.5" r="1.550"/><circle cx="87.9" cy="285.4" r="1.550"/><circle cx="86.2" cy="281.0" r="1.550"/><circle cx="84.4" cy="276.4" r="1.550"/><circle cx="82.6" cy="271.3" r="1.550"/><circle cx="80.8" cy="265.9" r="1.550"/><circle cx="78.9" cy="260.1" r="1.550"/><circle cx="77.1" cy="253.9" r="1.550"/><circle cx="75.2" cy="247.2" r="1.550"/><circle cx="73.4" cy="240.2" r="1.550"/><circle cx="71.5" cy="232.8" r="1.550"/><circle cx="69.7" cy="225.0" r="1.550"/><circle cx="67.9" cy="216.9" r="1.550"/><circle cx="66.1" cy="208.3" r="1.550"/><circle cx="64.3" cy="199.4" r="1.550"/><circle cx="62.6" cy="190.3" r="1.550"/><circle cx="61.1" cy="181.2" r="1.550"/><circle cx="59.6" cy="172.0" r="1.550"/><circle cx="58.3" cy="162.6" r="1.550"/><circle cx="57.0" cy="153.1" r="1.550"/><circle cx="55.9" cy="143.6" r="1.550"/><circle cx="55.0" cy="134.5" r="1.550"/><circle cx="54.3" cy="125.5" r="1.550"/><circle cx="53.8" cy="116.5" r="1.550"/><circle cx="53.4" cy="107.7" r="1.550"/><circle cx="53.2" cy="99.3" r="1.550"/><circle cx="53.3" cy="91.1" r="1.550"/><circle cx="53.7" cy="83.3" r="1.550"/><circle cx="54.2" cy="75.8" r="1.550"/><circle cx="55.0" cy="68.6" r="1.550"/><circle cx="56.0" cy="61.8" r="1.550"/><circle cx="57.3" cy="55.7" r="1.550"/><circle cx="58.8" cy="50.0" r="1.550"/><circle cx="60.6" cy="44.8" r="1.550"/><circle cx="62.6" cy="40.2" r="1.550"/><circle cx="64.8" cy="36.1" r="1.550"/><circle cx="67.2" cy="32.7" r="1.550"/><circle cx="69.7" cy="29.9" r="1.550"/><circle cx="72.4" cy="27.8" r="1.550"/><circle cx="75.2" cy="26.3" r="1.550"/><circle cx="78.2" cy="25.2" r="1.550"/><circle cx="81.1" cy="24.5" r="1.550"/><circle cx="84.2" cy="24.3" r="1.550"/><circle cx="87.3" cy="24.7" r="1.550"/><circle cx="90.5" cy="25.4" r="1.550"/><circle cx="93.7" cy="26.3" r="1.550"/><circle cx="96.9" cy="27.4" r="1.550"/><circle cx="100.1" cy="28.6" r="1.550"/><circle cx="103.3" cy="30.0" r="1.550"/><circle cx="106.6" cy="31.6" r="1.550"/><circle cx="109.8" cy="33.2" r="1.550"/><circle cx="112.9" cy="34.9" r="1.550"/><circle cx="116.0" cy="36.6" r="1.550"/><circle cx="119.0" cy="38.4" r="1.550"/><circle cx="122.0" cy="40.2" r="1.550"/><circle cx="125.0" cy="42.1" r="1.550"/><circle cx="128.0" cy="44.0" r="1.550"/><circle cx="130.9" cy="45.9" r="1.550"/><circle cx="133.8" cy="47.9" r="1.550"/><circle cx="136.7" cy="49.9" r="1.550"/><circle cx="139.6" cy="52.0" r="1.550"/><circle cx="142.5" cy="54.1" r="1.550"/><circle cx="145.4" cy="56.3" r="1.550"/><circle cx="148.2" cy="58.5" r="1.550"/><circle cx="151.1" cy="60.7" r="1.550"/><circle cx="153.9" cy="63.0" r="1.550"/><circle cx="156.8" cy="65.3" r="1.550"/><circle cx="159.6" cy="67.6" r="1.550"/><circle cx="162.5" cy="70.0" r="1.550"/><circle cx="165.3" cy="72.4" r="1.550"/><circle cx="168.1" cy="74.8" r="1.550"/><circle cx="170.9" cy="77.2" r="1.550"/><circle cx="173.8" cy="79.6" r="1.550"/><circle cx="176.6" cy="82.1" r="1.550"/><circle cx="179.4" cy="84.6" r="1.550"/><circle cx="182.2" cy="87.1" r="1.550"/><circle cx="185.0" cy="89.6" r="1.550"/><circle cx="187.9" cy="92.2" r="1.550"/><circle cx="190.7" cy="94.7" r="1.550"/><circle cx="193.5" cy="97.3" r="1.550"/><circle cx="196.4" cy="99.8" r="1.550"/><circle cx="199.2" cy="102.4" r="1.550"/><circle cx="202.0" cy="105.0" r="1.550"/><circle cx="204.8" cy="107.6" r="1.550"/><circle cx="207.6" cy="110.2" r="1.550"/><circle cx="210.4" cy="112.8" r="1.550"/><circle cx="213.2" cy="115.4" r="1.550"/><circle cx="216.0" cy="118.0" r="1.550"/><circle cx="218.8" cy="120.6" r="1.550"/><circle cx="221.6" cy="123.2" r="1.550"/><circle cx="224.4" cy="125.8" r="1.550"/><circle cx="227.2" cy="128.4" r="1.550"/><circle cx="230.0" cy="131.0" r="1.550"/><circle cx="232.7" cy="133.6" r="1.550"/><circle cx="235.5" cy="136.1" r="1.550"/><circle cx="238.2" cy="138.7" r="1.550"/><circle cx="240.9" cy="141.2" r="1.550"/><circle cx="243.6" cy="143.8" r="1.550"/><circle cx="246.3" cy="146.3" r="1.550"/><circle cx="249.0" cy="148.8" r="1.550"/><circle cx="251.6" cy="151.3" r="1.550"/><circle cx="254.2" cy="153.7" r="1.550"/><circle cx="256.8" cy="156.2" r="1.550"/><circle cx="259.4" cy="158.6" r="1.550"/><circle cx="262.0" cy="161.0" r="1.550"/><circle cx="264.5" cy="163.4" r="1.550"/><circle cx="267.0" cy="165.7" r="1.550"/><circle cx="269.5" cy="168.0" r="1.550"/><circle cx="271.9" cy="170.3" r="1.550"/><circle cx="274.3" cy="172.6" r="1.550"/><circle cx="276.7" cy="174.8" r="1.550"/><circle cx="279.0" cy="177.0" r="1.550"/><circle cx="281.3" cy="179.1" r="1.550"/><circle cx="283.5" cy="181.2" r="1.550"/><circle cx="285.7" cy="183.3" r="1.550"/><circle cx="287.9" cy="185.3" r="1.550"/><circle cx="289.9" cy="187.3" r="1.550"/><circle cx="292.0" cy="189.2" r="1.550"/><circle cx="293.9" cy="191.0" r="1.550"/><circle cx="295.8" cy="192.8" r="1.550"/><circle cx="297.7" cy="194.5" r="1.550"/><circle cx="299.5" cy="196.2" r="1.550"/><circle cx="301.2" cy="197.9" r="1.550"/><circle cx="303.0" cy="199.5" r="1.550"/><circle cx="304.6" cy="201.1" r="1.550"/><circle cx="306.3" cy="202.6" r="1.550"/><circle cx="307.8" cy="204.0" r="1.550"/><circle cx="309.3" cy="205.4" r="1.550"/><circle cx="310.8" cy="206.8" r="1.550"/><circle cx="312.2" cy="208.1" r="1.550"/><circle cx="313.5" cy="209.3" r="1.550"/><circle cx="314.8" cy="210.5" r="1.550"/><circle cx="316.0" cy="211.7" r="1.550"/><circle cx="317.2" cy="212.8" r="1.550"/><circle cx="318.3" cy="213.8" r="1.550"/><circle cx="319.4" cy="214.9" r="1.550"/><circle cx="320.4" cy="215.8" r="1.550"/><circle cx="321.4" cy="216.8" r="1.550"/><circle cx="322.4" cy="217.7" r="1.550"/><circle cx="323.3" cy="218.5" r="1.550"/><circle cx="324.1" cy="219.3" r="1.550"/><circle cx="324.9" cy="220.1" r="1.550"/><circle cx="325.7" cy="220.8" r="1.550"/><circle cx="326.5" cy="221.5" r="1.550"/><circle cx="327.2" cy="222.2" r="1.550"/><circle cx="327.9" cy="222.8" r="1.550"/><circle cx="328.5" cy="223.4" r="1.550"/><circle cx="329.2" cy="224.0" r="1.550"/><circle cx="329.8" cy="224.6" r="1.550"/><circle cx="330.3" cy="225.1" r="1.550"/><circle cx="330.9" cy="225.6" r="1.550"/><circle cx="331.4" cy="226.1" r="1.550"/><circle cx="331.9" cy="226.6" r="1.550"/><circle cx="332.4" cy="227.1" r="1.550"/><circle cx="332.9" cy="227.6" r="1.550"/><circle cx="333.4" cy="228.0" r="1.550"/><circle cx="333.8" cy="228.4" r="1.550"/><circle cx="334.3" cy="228.8" r="1.550"/><circle cx="334.7" cy="229.2" r="1.550"/><circle cx="335.1" cy="229.6" r="1.550"/><circle cx="335.4" cy="229.9" r="1.550"/><circle cx="335.8" cy="230.3" r="1.550"/><circle cx="336.2" cy="230.6" r="1.550"/><circle cx="336.5" cy="230.9" r="1.550"/><circle cx="336.8" cy="231.2" r="1.550"/><circle cx="337.1" cy="231.5" r="1.550"/><circle cx="337.4" cy="231.7" r="1.550"/><circle cx="337.7" cy="232.0" r="1.550"/><circle cx="337.9" cy="232.2" r="1.550"/><circle cx="338.1" cy="232.4" r="1.550"/><circle cx="338.4" cy="232.6" r="1.550"/><circle cx="338.6" cy="232.8" r="1.550"/><circle cx="338.8" cy="233.0" r="1.550"/><circle cx="339.0" cy="233.2" r="1.550"/><circle cx="339.1" cy="233.4" r="1.550"/><circle cx="339.3" cy="233.5" r="1.550"/><circle cx="339.5" cy="233.7" r="1.550"/><circle cx="339.6" cy="233.8" r="1.550"/><circle cx="339.8" cy="234.0" r="1.550"/><circle cx="339.9" cy="234.1" r="1.550"/><circle cx="340.0" cy="234.2" r="1.550"/><circle cx="340.1" cy="234.3" r="1.550"/><circle cx="340.3" cy="234.4" r="1.550"/><circle cx="340.3" cy="234.5" r="1.550"/><circle cx="340.4" cy="234.6" r="1.550"/><circle cx="340.5" cy="234.7" r="1.550"/><circle cx="340.6" cy="234.7" r="1.550"/><circle cx="340.7" cy="234.8" r="1.550"/><circle cx="340.7" cy="234.9" r="1.550"/><circle cx="340.8" cy="235.0" r="1.550"/><circle cx="340.9" cy="235.0" r="1.550"/><circle cx="340.9" cy="235.1" r="1.550"/><circle cx="341.0" cy="235.1" r="1.550"/><circle cx="341.1" cy="235.2" r="1.550"/><circle cx="341.1" cy="235.2" r="1.550"/><circle cx="341.2" cy="235.3" r="1.550"/><circle cx="341.2" cy="235.3" r="1.550"/><circle cx="341.3" cy="235.4" r="1.550"/><circle cx="341.3" cy="235.4" r="1.550"/><circle cx="341.4" cy="235.5" r="1.550"/><circle cx="341.4" cy="235.5" r="1.550"/><circle cx="341.5" cy="235.6" r="1.550"/><circle cx="341.5" cy="235.6" r="1.550"/><circle cx="341.6" cy="235.7" r="1.550"/><circle cx="341.6" cy="235.7" r="1.550"/><circle cx="341.7" cy="235.8" r="1.550"/><circle cx="341.7" cy="235.8" r="1.550"/><circle cx="341.8" cy="235.9" r="1.550"/><circle cx="341.8" cy="235.9" r="1.550"/><circle cx="341.8" cy="235.9" r="1.550"/><circle cx="341.9" cy="235.9" r="1.550"/><circle cx="341.9" cy="236.0" r="1.550"/><circle cx="341.9" cy="236.0" r="1.550"/><circle cx="341.9" cy="236.0" r="1.550"/><circle cx="341.9" cy="236.0" r="1.550"/><circle cx="342.0" cy="236.0" r="1.550"/><circle cx="342.0" cy="236.0" r="1.550"/><circle cx="342.0" cy="236.1" r="1.550"/><circle cx="342.0" cy="236.1" r="1.550"/><circle cx="342.0" cy="236.1" r="1.550"/><circle cx="342.0" cy="236.1" r="1.550"/><circle cx="342.0" cy="236.1" r="1.550"/></g><path d="M47.2 19.7H367.8V334.6" stroke="#222" stroke-width="1" fill="none"/><path d="M47.2 19.2V335.6" stroke="#111" stroke-width="2" fill="none"/><path d="M46.2 334.6H368.3" stroke="#111" stroke-width="1.800" fill="none"/><text x="51.8" y="349.5" font-size="9" text-anchor="middle" fill="#111">0</text><text x="91.3" y="349.5" font-size="9" text-anchor="middle" fill="#111">0.1</text><text x="130.8" y="349.5" font-size="9" text-anchor="middle" fill="#111">0.2</text><text x="170.3" y="349.5" font-size="9" text-anchor="middle" fill="#111">0.3</text><text x="209.8" y="349.5" font-size="9" text-anchor="middle" fill="#111">0.4</text><text x="249.3" y="349.5" font-size="9" text-anchor="middle" fill="#111">0.5</text><text x="288.8" y="349.5" font-size="9" text-anchor="middle" fill="#111">0.6</text><text x="328.3" y="349.5" font-size="9" text-anchor="middle" fill="#111">0.7</text><text x="367.8" y="349.5" font-size="9" text-anchor="middle" fill="#111">0.8</text><text x="41.5" y="338.0" font-size="9" text-anchor="end" fill="#111">0</text><text x="41.5" y="300.8" font-size="9" text-anchor="end" fill="#111">0.1</text><text x="41.5" y="263.6" font-size="9" text-anchor="end" fill="#111">0.2</text><text x="41.5" y="226.4" font-size="9" text-anchor="end" fill="#111">0.3</text><text x="41.5" y="189.2" font-size="9" text-anchor="end" fill="#111">0.4</text><text x="41.5" y="151.9" font-size="9" text-anchor="end" fill="#111">0.5</text><text x="41.5" y="114.7" font-size="9" text-anchor="end" fill="#111">0.6</text><text x="41.5" y="77.5" font-size="9" text-anchor="end" fill="#111">0.7</text><text x="41.5" y="40.3" font-size="9" text-anchor="end" fill="#111">0.8</text><path d="M51.8 334.6v4" stroke="#222" stroke-width="0.9"/><path d="M91.3 334.6v4" stroke="#222" stroke-width="0.9"/><path d="M130.8 334.6v4" stroke="#222" stroke-width="0.9"/><path d="M170.3 334.6v4" stroke="#222" stroke-width="0.9"/><path d="M209.8 334.6v4" stroke="#222" stroke-width="0.9"/><path d="M249.3 334.6v4" stroke="#222" stroke-width="0.9"/><path d="M288.8 334.6v4" stroke="#222" stroke-width="0.9"/><path d="M328.3 334.6v4" stroke="#222" stroke-width="0.9"/><path d="M367.8 334.6v4" stroke="#222" stroke-width="0.9"/><path d="M42.7 334.8H47.2" stroke="#222" stroke-width="0.9"/><path d="M42.7 297.6H47.2" stroke="#222" stroke-width="0.9"/><path d="M42.7 260.4H47.2" stroke="#222" stroke-width="0.9"/><path d="M42.7 223.2H47.2" stroke="#222" stroke-width="0.9"/><path d="M42.7 186.0H47.2" stroke="#222" stroke-width="0.9"/><path d="M42.7 148.7H47.2" stroke="#222" stroke-width="0.9"/><path d="M42.7 111.5H47.2" stroke="#222" stroke-width="0.9"/><path d="M42.7 74.3H47.2" stroke="#222" stroke-width="0.9"/><path d="M42.7 37.1H47.2" stroke="#222" stroke-width="0.9"/><path d="M55.8 334.6v2" stroke="#888" stroke-width="0.600"/><path d="M44.7 331.1H47.2" stroke="#888" stroke-width="0.600"/><path d="M59.7 334.6v2" stroke="#888" stroke-width="0.600"/><path d="M44.7 327.4H47.2" stroke="#888" stroke-width="0.600"/><path d="M63.6 334.6v2" stroke="#888" stroke-width="0.600"/><path d="M44.7 323.6H47.2" stroke="#888" stroke-width="0.600"/><path d="M67.6 334.6v2" stroke="#888" stroke-width="0.600"/><path d="M44.7 319.9H47.2" stroke="#888" stroke-width="0.600"/><path d="M71.5 334.6v2" stroke="#888" stroke-width="0.600"/><path d="M44.7 316.2H47.2" stroke="#888" stroke-width="0.600"/><path d="M75.5 334.6v2" stroke="#888" stroke-width="0.600"/><path d="M44.7 312.5H47.2" stroke="#888" stroke-width="0.600"/><path d="M79.4 334.6v2" stroke="#888" stroke-width="0.600"/><path d="M44.7 308.8H47.2" stroke="#888" stroke-width="0.600"/><path d="M83.4 334.6v2" stroke="#888" stroke-width="0.600"/><path d="M44.7 305.0H47.2" stroke="#888" stroke-width="0.600"/><path d="M87.3 334.6v2" stroke="#888" stroke-width="0.600"/><path d="M44.7 301.3H47.2" stroke="#888" stroke-width="0.600"/><path d="M95.2 334.6v2" stroke="#888" stroke-width="0.600"/><path d="M44.7 293.9H47.2" stroke="#888" stroke-width="0.600"/><path d="M99.2 334.6v2" stroke="#888" stroke-width="0.600"/><path d="M44.7 290.1H47.2" stroke="#888" stroke-width="0.600"/><path d="M103.1 334.6v2" stroke="#888" stroke-width="0.600"/><path d="M44.7 286.4H47.2" stroke="#888" stroke-width="0.600"/><path d="M107.1 334.6v2" stroke="#888" stroke-width="0.600"/><path d="M44.7 282.7H47.2" stroke="#888" stroke-width="0.600"/><path d="M111.0 334.6v2" stroke="#888" stroke-width="0.600"/><path d="M44.7 279.0H47.2" stroke="#888" stroke-width="0.600"/><path d="M115.0 334.6v2" stroke="#888" stroke-width="0.600"/><path d="M44.7 275.3H47.2" stroke="#888" stroke-width="0.600"/><path d="M118.9 334.6v2" stroke="#888" stroke-width="0.600"/><path d="M44.7 271.5H47.2" stroke="#888" stroke-width="0.600"/><path d="M122.9 334.6v2" stroke="#888" stroke-width="0.600"/><path d="M44.7 267.8H47.2" stroke="#888" stroke-width="0.600"/><path d="M126.8 334.6v2" stroke="#888" stroke-width="0.600"/><path d="M44.7 264.1H47.2" stroke="#888" stroke-width="0.600"/><path d="M134.8 334.6v2" stroke="#888" stroke-width="0.600"/><path d="M44.7 256.7H47.2" stroke="#888" stroke-width="0.600"/><path d="M138.7 334.6v2" stroke="#888" stroke-width="0.600"/><path d="M44.7 252.9H47.2" stroke="#888" stroke-width="0.600"/><path d="M142.6 334.6v2" stroke="#888" stroke-width="0.600"/><path d="M44.7 249.2H47.2" stroke="#888" stroke-width="0.600"/><path d="M146.6 334.6v2" stroke="#888" stroke-width="0.600"/><path d="M44.7 245.5H47.2" stroke="#888" stroke-width="0.600"/><path d="M150.5 334.6v2" stroke="#888" stroke-width="0.600"/><path d="M44.7 241.8H47.2" stroke="#888" stroke-width="0.600"/><path d="M154.5 334.6v2" stroke="#888" stroke-width="0.600"/><path d="M44.7 238.1H47.2" stroke="#888" stroke-width="0.600"/><path d="M158.5 334.6v2" stroke="#888" stroke-width="0.600"/><path d="M44.7 234.3H47.2" stroke="#888" stroke-width="0.600"/><path d="M162.4 334.6v2" stroke="#888" stroke-width="0.600"/><path d="M44.7 230.6H47.2" stroke="#888" stroke-width="0.600"/><path d="M166.3 334.6v2" stroke="#888" stroke-width="0.600"/><path d="M44.7 226.9H47.2" stroke="#888" stroke-width="0.600"/><path d="M174.2 334.6v2" stroke="#888" stroke-width="0.600"/><path d="M44.7 219.4H47.2" stroke="#888" stroke-width="0.600"/><path d="M178.2 334.6v2" stroke="#888" stroke-width="0.600"/><path d="M44.7 215.7H47.2" stroke="#888" stroke-width="0.600"/><path d="M182.1 334.6v2" stroke="#888" stroke-width="0.600"/><path d="M44.7 212.0H47.2" stroke="#888" stroke-width="0.600"/><path d="M186.1 334.6v2" stroke="#888" stroke-width="0.600"/><path d="M44.7 208.3H47.2" stroke="#888" stroke-width="0.600"/><path d="M190.0 334.6v2" stroke="#888" stroke-width="0.600"/><path d="M44.7 204.6H47.2" stroke="#888" stroke-width="0.600"/><path d="M194.0 334.6v2" stroke="#888" stroke-width="0.600"/><path d="M44.7 200.8H47.2" stroke="#888" stroke-width="0.600"/><path d="M198.0 334.6v2" stroke="#888" stroke-width="0.600"/><path d="M44.7 197.1H47.2" stroke="#888" stroke-width="0.600"/><path d="M201.9 334.6v2" stroke="#888" stroke-width="0.600"/><path d="M44.7 193.4H47.2" stroke="#888" stroke-width="0.600"/><path d="M205.8 334.6v2" stroke="#888" stroke-width="0.600"/><path d="M44.7 189.7H47.2" stroke="#888" stroke-width="0.600"/><path d="M213.8 334.6v2" stroke="#888" stroke-width="0.600"/><path d="M44.7 182.2H47.2" stroke="#888" stroke-width="0.600"/><path d="M217.7 334.6v2" stroke="#888" stroke-width="0.600"/><path d="M44.7 178.5H47.2" stroke="#888" stroke-width="0.600"/><path d="M221.6 334.6v2" stroke="#888" stroke-width="0.600"/><path d="M44.7 174.8H47.2" stroke="#888" stroke-width="0.600"/><path d="M225.6 334.6v2" stroke="#888" stroke-width="0.600"/><path d="M44.7 171.1H47.2" stroke="#888" stroke-width="0.600"/><path d="M229.5 334.6v2" stroke="#888" stroke-width="0.600"/><path d="M44.7 167.4H47.2" stroke="#888" stroke-width="0.600"/><path d="M233.5 334.6v2" stroke="#888" stroke-width="0.600"/><path d="M44.7 163.6H47.2" stroke="#888" stroke-width="0.600"/><path d="M237.4 334.6v2" stroke="#888" stroke-width="0.600"/><path d="M44.7 159.9H47.2" stroke="#888" stroke-width="0.600"/><path d="M241.4 334.6v2" stroke="#888" stroke-width="0.600"/><path d="M44.7 156.2H47.2" stroke="#888" stroke-width="0.600"/><path d="M245.3 334.6v2" stroke="#888" stroke-width="0.600"/><path d="M44.7 152.5H47.2" stroke="#888" stroke-width="0.600"/><path d="M253.2 334.6v2" stroke="#888" stroke-width="0.600"/><path d="M44.7 145.0H47.2" stroke="#888" stroke-width="0.600"/><path d="M257.2 334.6v2" stroke="#888" stroke-width="0.600"/><path d="M44.7 141.3H47.2" stroke="#888" stroke-width="0.600"/><path d="M261.2 334.6v2" stroke="#888" stroke-width="0.600"/><path d="M44.7 137.6H47.2" stroke="#888" stroke-width="0.600"/><path d="M265.1 334.6v2" stroke="#888" stroke-width="0.600"/><path d="M44.7 133.9H47.2" stroke="#888" stroke-width="0.600"/><path d="M269.0 334.6v2" stroke="#888" stroke-width="0.600"/><path d="M44.7 130.1H47.2" stroke="#888" stroke-width="0.600"/><path d="M273.0 334.6v2" stroke="#888" stroke-width="0.600"/><path d="M44.7 126.4H47.2" stroke="#888" stroke-width="0.600"/><path d="M276.9 334.6v2" stroke="#888" stroke-width="0.600"/><path d="M44.7 122.7H47.2" stroke="#888" stroke-width="0.600"/><path d="M280.9 334.6v2" stroke="#888" stroke-width="0.600"/><path d="M44.7 119.0H47.2" stroke="#888" stroke-width="0.600"/><path d="M284.8 334.6v2" stroke="#888" stroke-width="0.600"/><path d="M44.7 115.3H47.2" stroke="#888" stroke-width="0.600"/><path d="M292.8 334.6v2" stroke="#888" stroke-width="0.600"/><path d="M44.7 107.8H47.2" stroke="#888" stroke-width="0.600"/><path d="M296.7 334.6v2" stroke="#888" stroke-width="0.600"/><path d="M44.7 104.1H47.2" stroke="#888" stroke-width="0.600"/><path d="M300.6 334.6v2" stroke="#888" stroke-width="0.600"/><path d="M44.7 100.4H47.2" stroke="#888" stroke-width="0.600"/><path d="M304.6 334.6v2" stroke="#888" stroke-width="0.600"/><path d="M44.7 96.7H47.2" stroke="#888" stroke-width="0.600"/><path d="M308.5 334.6v2" stroke="#888" stroke-width="0.600"/><path d="M44.7 92.9H47.2" stroke="#888" stroke-width="0.600"/><path d="M312.5 334.6v2" stroke="#888" stroke-width="0.600"/><path d="M44.7 89.2H47.2" stroke="#888" stroke-width="0.600"/><path d="M316.5 334.6v2" stroke="#888" stroke-width="0.600"/><path d="M44.7 85.5H47.2" stroke="#888" stroke-width="0.600"/><path d="M320.4 334.6v2" stroke="#888" stroke-width="0.600"/><path d="M44.7 81.8H47.2" stroke="#888" stroke-width="0.600"/><path d="M324.3 334.6v2" stroke="#888" stroke-width="0.600"/><path d="M44.7 78.1H47.2" stroke="#888" stroke-width="0.600"/><path d="M332.2 334.6v2" stroke="#888" stroke-width="0.600"/><path d="M44.7 70.6H47.2" stroke="#888" stroke-width="0.600"/><path d="M336.2 334.6v2" stroke="#888" stroke-width="0.600"/><path d="M44.7 66.9H47.2" stroke="#888" stroke-width="0.600"/><path d="M340.1 334.6v2" stroke="#888" stroke-width="0.600"/><path d="M44.7 63.2H47.2" stroke="#888" stroke-width="0.600"/><path d="M344.1 334.6v2" stroke="#888" stroke-width="0.600"/><path d="M44.7 59.4H47.2" stroke="#888" stroke-width="0.600"/><path d="M348.0 334.6v2" stroke="#888" stroke-width="0.600"/><path d="M44.7 55.7H47.2" stroke="#888" stroke-width="0.600"/><path d="M352.0 334.6v2" stroke="#888" stroke-width="0.600"/><path d="M44.7 52.0H47.2" stroke="#888" stroke-width="0.600"/><path d="M356.0 334.6v2" stroke="#888" stroke-width="0.600"/><path d="M44.7 48.3H47.2" stroke="#888" stroke-width="0.600"/><path d="M359.9 334.6v2" stroke="#888" stroke-width="0.600"/><path d="M44.7 44.6H47.2" stroke="#888" stroke-width="0.600"/><path d="M363.8 334.6v2" stroke="#888" stroke-width="0.600"/><path d="M44.7 40.8H47.2" stroke="#888" stroke-width="0.600"/><path d="M44.7 33.4H47.2" stroke="#888" stroke-width="0.600"/><path d="M44.7 29.7H47.2" stroke="#888" stroke-width="0.600"/><path d="M44.7 26.0H47.2" stroke="#888" stroke-width="0.600"/><path d="M44.7 22.2H47.2" stroke="#888" stroke-width="0.600"/><text x="207.0" y="361.3" font-size="9" text-anchor="middle" fill="#111">x</text><text transform="translate(21.5 176.5) rotate(-90)" font-size="9" text-anchor="middle" fill="#111">y</text><path d="M182.1 210.7L235.3 207.5" stroke="#000" stroke-width="1.500"/><circle cx="182.1" cy="210.7" r="2.700" fill="#000"/><circle cx="235.3" cy="207.5" r="2.700" fill="#000"/></svg>
<svg style="left:10.0px;top:47.9px" width="25.0" height="25.0" viewBox="-12.50 -12.50 25.00 25.00" font-family="Liberation Sans, sans-serif"><defs><linearGradient id="o1" x1="0" x2="0" y1="0" y2="1"><stop offset="0" stop-color="#8088dc"/><stop offset="0.42" stop-color="#3038b0"/><stop offset="1" stop-color="#3038b0"/></linearGradient><radialGradient id="h1" cx="0.5" cy="0.18" r="0.55"><stop offset="0" stop-color="#fff" stop-opacity="0.55"/><stop offset="1" stop-color="#fff" stop-opacity="0"/></radialGradient></defs><circle r="11.50" fill="url(#o1)"/><ellipse cx="0" cy="-5.52" rx="8.28" ry="4.83" fill="url(#h1)"/><g transform="scale(0.983)"><rect x="-4.700" y="-4.700" width="9.400" height="9.400" fill="#fff"/></g></svg>
<svg style="left:64.3px;top:47.9px" width="25.0" height="25.0" viewBox="-12.50 -12.50 25.00 25.00" font-family="Liberation Sans, sans-serif"><defs><linearGradient id="o2" x1="0" x2="0" y1="0" y2="1"><stop offset="0" stop-color="#8088dc"/><stop offset="0.42" stop-color="#3038b0"/><stop offset="1" stop-color="#3038b0"/></linearGradient><radialGradient id="h2" cx="0.5" cy="0.18" r="0.55"><stop offset="0" stop-color="#fff" stop-opacity="0.55"/><stop offset="1" stop-color="#fff" stop-opacity="0"/></radialGradient></defs><circle r="11.50" fill="url(#o2)"/><ellipse cx="0" cy="-5.52" rx="8.28" ry="4.83" fill="url(#h2)"/><g transform="scale(0.983)"><path d="M-3.200 -3.200L0.300 -6.200H2.200V4.200H4.600V6.300H-4.200V4.200H-1.200V-2.800L-3.200 -1.600Z" fill="#fff"/></g></svg>
<svg style="left:115.5px;top:47.9px" width="25.0" height="25.0" viewBox="-12.50 -12.50 25.00 25.00" font-family="Liberation Sans, sans-serif"><defs><linearGradient id="o3" x1="0" x2="0" y1="0" y2="1"><stop offset="0" stop-color="#8088dc"/><stop offset="0.42" stop-color="#3038b0"/><stop offset="1" stop-color="#3038b0"/></linearGradient><radialGradient id="h3" cx="0.5" cy="0.18" r="0.55"><stop offset="0" stop-color="#fff" stop-opacity="0.55"/><stop offset="1" stop-color="#fff" stop-opacity="0"/></radialGradient></defs><circle r="11.50" fill="url(#o3)"/><ellipse cx="0" cy="-5.52" rx="8.28" ry="4.83" fill="url(#h3)"/><g transform="scale(0.983)"><path d="M0 -7.300a5.800 5.800 0 0 1 3.500 10.400l-0.500 2.300h-6l-0.500 -2.300a5.800 5.800 0 0 1 3.500 -10.400z" fill="none" stroke="#fff" stroke-width="1.900"/><path d="M-2.800 6.600h5.600M-2.100 8.300h4.200" stroke="#fff" stroke-width="1.300"/></g></svg>
<svg style="left:164.0px;top:47.9px" width="25.0" height="25.0" viewBox="-12.50 -12.50 25.00 25.00" font-family="Liberation Sans, sans-serif"><defs><linearGradient id="o4" x1="0" x2="0" y1="0" y2="1"><stop offset="0" stop-color="#8088dc"/><stop offset="0.42" stop-color="#3038b0"/><stop offset="1" stop-color="#3038b0"/></linearGradient><radialGradient id="h4" cx="0.5" cy="0.18" r="0.55"><stop offset="0" stop-color="#fff" stop-opacity="0.55"/><stop offset="1" stop-color="#fff" stop-opacity="0"/></radialGradient></defs><circle r="11.50" fill="url(#o4)"/><ellipse cx="0" cy="-5.52" rx="8.28" ry="4.83" fill="url(#h4)"/><g transform="scale(0.983)"><path d="M0 -7.300a6 6 0 0 1 3.700 10.700l-0.600 1.900h-6.200l-0.600 -1.900a6 6 0 0 1 3.700 -10.700z" fill="#fff"/><path d="M-2.700 6.600h5.400M-2 8.200h4" stroke="#fff" stroke-width="1.300"/></g></svg>
<svg style="left:213.0px;top:50.4px" width="25.0" height="25.0" viewBox="-12.50 -12.50 25.00 25.00" font-family="Liberation Sans, sans-serif"><defs><linearGradient id="o5" x1="0" x2="0" y1="0" y2="1"><stop offset="0" stop-color="#8088dc"/><stop offset="0.42" stop-color="#3038b0"/><stop offset="1" stop-color="#3038b0"/></linearGradient><radialGradient id="h5" cx="0.5" cy="0.18" r="0.55"><stop offset="0" stop-color="#fff" stop-opacity="0.55"/><stop offset="1" stop-color="#fff" stop-opacity="0"/></radialGradient></defs><circle r="11.50" fill="url(#o5)"/><ellipse cx="0" cy="-5.52" rx="8.28" ry="4.83" fill="url(#h5)"/><g transform="scale(0.983)"><path d="M-1.300 -9.300c-2.300 -0.500 -3.300 0.700 -3.300 3.200v11.200c0 2.500 -1 3.700 -3.300 3.200" fill="none" stroke="#fff" stroke-width="1.500" stroke-linecap="round"/><text x="3.600" y="2.300" font-size="11.500" fill="#fff" text-anchor="middle" textLength="11.800" lengthAdjust="spacingAndGlyphs">ac</text></g></svg>
<svg style="left:266.3px;top:47.9px" width="25.0" height="25.0" viewBox="-12.50 -12.50 25.00 25.00" font-family="Liberation Sans, sans-serif"><defs><linearGradient id="o6" x1="0" x2="0" y1="0" y2="1"><stop offset="0" stop-color="#8088dc"/><stop offset="0.42" stop-color="#3038b0"/><stop offset="1" stop-color="#3038b0"/></linearGradient><radialGradient id="h6" cx="0.5" cy="0.18" r="0.55"><stop offset="0" stop-color="#fff" stop-opacity="0.55"/><stop offset="1" stop-color="#fff" stop-opacity="0"/></radialGradient></defs><circle r="11.50" fill="url(#o6)"/><ellipse cx="0" cy="-5.52" rx="8.28" ry="4.83" fill="url(#h6)"/><g transform="scale(0.983)"><g transform="rotate(-32)"><path d="M-1.500 -3v9.500a1.500 1.500 0 0 0 3 0v-9.500z" fill="#fff"/><path d="M-1.700 -9.300a4 4 0 1 0 3.400 0v3.600l-1.700 1.100l-1.700 -1.100z" fill="#fff"/><path d="M-1.400 7.200l-1.800 2.600l1.400 1.200l1.800 -1.600l1.800 1.600l1.400 -1.200l-1.800 -2.600z" fill="#fff"/></g></g></svg>
<svg style="left:321.5px;top:47.9px" width="25.0" height="25.0" viewBox="-12.50 -12.50 25.00 25.00" font-family="Liberation Sans, sans-serif"><defs><linearGradient id="o7" x1="0" x2="0" y1="0" y2="1"><stop offset="0" stop-color="#909090"/><stop offset="0.42" stop-color="#333333"/><stop offset="1" stop-color="#333333"/></linearGradient><radialGradient id="h7" cx="0.5" cy="0.18" r="0.55"><stop offset="0" stop-color="#fff" stop-opacity="0.55"/><stop offset="1" stop-color="#fff" stop-opacity="0"/></radialGradient></defs><circle r="11.50" fill="url(#o7)"/><ellipse cx="0" cy="-5.52" rx="8.28" ry="4.83" fill="url(#h7)"/><g transform="scale(0.983)"><g transform="rotate(-33)" fill="none" stroke="#fff" stroke-width="2.300"><rect x="-3.100" y="-8.800" width="6.200" height="8.600" rx="3"/><rect x="-3.100" y="0.200" width="6.200" height="8.600" rx="3"/><path d="M0 -2.800v5.600" stroke-width="2.600"/></g></g></svg>
<svg style="left:382.2px;top:47.9px" width="25.0" height="25.0" viewBox="-12.50 -12.50 25.00 25.00" font-family="Liberation Sans, sans-serif"><defs><linearGradient id="o8" x1="0" x2="0" y1="0" y2="1"><stop offset="0" stop-color="#8890e0"/><stop offset="0.42" stop-color="#3540b8"/><stop offset="1" stop-color="#3540b8"/></linearGradient><radialGradient id="h8" cx="0.5" cy="0.18" r="0.55"><stop offset="0" stop-color="#fff" stop-opacity="0.55"/><stop offset="1" stop-color="#fff" stop-opacity="0"/></radialGradient></defs><circle r="11.50" fill="url(#o8)"/><ellipse cx="0" cy="-5.52" rx="8.28" ry="4.83" fill="url(#h8)"/><g transform="scale(0.983)"><rect x="-7" y="-2.600" width="14" height="9.600" rx="1.300" fill="#fff"/><path d="M-4.300 -3v-1.600a1.300 1.300 0 0 1 1.300 -1.300h6a1.300 1.300 0 0 1 1.300 1.300v1.600" fill="none" stroke="#fff" stroke-width="1.700"/><path d="M-7 1h14" stroke="#3540b8" stroke-width="1.300"/><rect x="-1.400" y="-0.500" width="2.800" height="3" rx="0.600" fill="#fff" stroke="#3540b8" stroke-width="0.900"/></g></svg>
<svg style="left:439.5px;top:47.9px" width="25.0" height="25.0" viewBox="-12.50 -12.50 25.00 25.00" font-family="Liberation Sans, sans-serif"><defs><linearGradient id="o9" x1="0" x2="0" y1="0" y2="1"><stop offset="0" stop-color="#e070e6"/><stop offset="0.42" stop-color="#b010b8"/><stop offset="1" stop-color="#b010b8"/></linearGradient><radialGradient id="h9" cx="0.5" cy="0.18" r="0.55"><stop offset="0" stop-color="#fff" stop-opacity="0.55"/><stop offset="1" stop-color="#fff" stop-opacity="0"/></radialGradient></defs><circle r="11.50" fill="url(#o9)"/><ellipse cx="0" cy="-5.52" rx="8.28" ry="4.83" fill="url(#h9)"/><g transform="scale(0.983)"><path d="M-8 1.200L-6.300 -2.200Q-4.800 -5.200 -3.500 -2L-1.500 3.200Q-0.500 5 0.300 2L1.500 -2.300Q2.200 -4 2.900 -1.500L3.800 1.800Q4.400 3.200 5.200 2L5.800 1.200H8.300" fill="none" stroke="#fff" stroke-width="1.600" stroke-linejoin="round" stroke-linecap="round"/></g></svg>
<svg style="left:490.8px;top:47.9px" width="25.0" height="25.0" viewBox="-12.50 -12.50 25.00 25.00" font-family="Liberation Sans, sans-serif"><defs><linearGradient id="o10" x1="0" x2="0" y1="0" y2="1"><stop offset="0" stop-color="#8088dc"/><stop offset="0.42" stop-color="#3238b4"/><stop offset="1" stop-color="#3238b4"/></linearGradient><radialGradient id="h10" cx="0.5" cy="0.18" r="0.55"><stop offset="0" stop-color="#fff" stop-opacity="0.55"/><stop offset="1" stop-color="#fff" stop-opacity="0"/></radialGradient></defs><circle r="11.50" fill="url(#o10)"/><ellipse cx="0" cy="-5.52" rx="8.28" ry="4.83" fill="url(#h10)"/><g transform="scale(0.983)"><text x="0" y="4.600" font-size="12.800" font-weight="bold" fill="#fff" stroke="#fff" stroke-width="0.300" text-anchor="middle" textLength="15" lengthAdjust="spacingAndGlyphs">3D</text></g></svg>
<svg style="left:543.3px;top:47.9px" width="25.0" height="25.0" viewBox="-12.50 -12.50 25.00 25.00" font-family="Liberation Sans, sans-serif"><defs><linearGradient id="o11" x1="0" x2="0" y1="0" y2="1"><stop offset="0" stop-color="#a6c8f4"/><stop offset="0.42" stop-color="#4a86dc"/><stop offset="1" stop-color="#4a86dc"/></linearGradient><radialGradient id="h11" cx="0.5" cy="0.18" r="0.55"><stop offset="0" stop-color="#fff" stop-opacity="0.55"/><stop offset="1" stop-color="#fff" stop-opacity="0"/></radialGradient></defs><circle r="11.50" fill="url(#o11)"/><ellipse cx="0" cy="-5.52" rx="8.28" ry="4.83" fill="url(#h11)"/><g transform="scale(0.983)"><path d="M0.200 -7.200v8h6.300" fill="none" stroke="#eef4ff" stroke-width="1.500"/></g></svg>
<svg style="left:591.8px;top:47.9px" width="25.0" height="25.0" viewBox="-12.50 -12.50 25.00 25.00" font-family="Liberation Sans, sans-serif"><defs><linearGradient id="o12" x1="0" x2="0" y1="0" y2="1"><stop offset="0" stop-color="#7cc4d0"/><stop offset="0.42" stop-color="#1f8a9a"/><stop offset="1" stop-color="#1f8a9a"/></linearGradient><radialGradient id="h12" cx="0.5" cy="0.18" r="0.55"><stop offset="0" stop-color="#fff" stop-opacity="0.55"/><stop offset="1" stop-color="#fff" stop-opacity="0"/></radialGradient></defs><circle r="11.50" fill="url(#o12)"/><ellipse cx="0" cy="-5.52" rx="8.28" ry="4.83" fill="url(#h12)"/><g transform="scale(0.983)"><text x="0" y="4.200" font-size="12" font-weight="bold" fill="#fff" text-anchor="middle" textLength="12.500" lengthAdjust="spacingAndGlyphs">L*</text></g></svg>
<svg style="left:639.3px;top:47.9px" width="25.0" height="25.0" viewBox="-12.50 -12.50 25.00 25.00" font-family="Liberation Sans, sans-serif"><defs><linearGradient id="o13" x1="0" x2="0" y1="0" y2="1"><stop offset="0" stop-color="#9ccc7c"/><stop offset="0.42" stop-color="#4f962c"/><stop offset="1" stop-color="#4f962c"/></linearGradient><radialGradient id="h13" cx="0.5" cy="0.18" r="0.55"><stop offset="0" stop-color="#fff" stop-opacity="0.55"/><stop offset="1" stop-color="#fff" stop-opacity="0"/></radialGradient></defs><circle r="11.50" fill="url(#o13)"/><ellipse cx="0" cy="-5.52" rx="8.28" ry="4.83" fill="url(#h13)"/><g transform="scale(0.983)"><path d="M-4.200 -8L7.600 -0.200L-4.200 7.500z" fill="#fff"/></g></svg>
<svg style="left:693.1px;top:47.9px" width="25.0" height="25.0" viewBox="-12.50 -12.50 25.00 25.00" font-family="Liberation Sans, sans-serif"><defs><linearGradient id="o14" x1="0" x2="0" y1="0" y2="1"><stop offset="0" stop-color="#a4f070"/><stop offset="0.42" stop-color="#46cc08"/><stop offset="1" stop-color="#46cc08"/></linearGradient><radialGradient id="h14" cx="0.5" cy="0.18" r="0.55"><stop offset="0" stop-color="#fff" stop-opacity="0.55"/><stop offset="1" stop-color="#fff" stop-opacity="0"/></radialGradient></defs><circle r="11.50" fill="url(#o14)"/><ellipse cx="0" cy="-5.52" rx="8.28" ry="4.83" fill="url(#h14)"/><g transform="scale(0.983)"><path d="M-2.200 -8.500h4.400v13.800a2.200 2.200 0 0 1 -4.400 0z" fill="#fff"/><path d="M0.200 -7v6.500" stroke="#58c030" stroke-width="0.900"/></g></svg>
<svg style="left:751.6px;top:47.9px" width="25.0" height="25.0" viewBox="-12.50 -12.50 25.00 25.00" font-family="Liberation Sans, sans-serif"><defs><linearGradient id="o15" x1="0" x2="0" y1="0" y2="1"><stop offset="0" stop-color="#fce070"/><stop offset="0.42" stop-color="#f6b800"/><stop offset="1" stop-color="#f6b800"/></linearGradient><radialGradient id="h15" cx="0.5" cy="0.18" r="0.55"><stop offset="0" stop-color="#fff" stop-opacity="0.55"/><stop offset="1" stop-color="#fff" stop-opacity="0"/></radialGradient></defs><circle r="11.50" fill="url(#o15)"/><ellipse cx="0" cy="-5.52" rx="8.28" ry="4.83" fill="url(#h15)"/><g transform="scale(0.983)"><circle r="8" fill="#fff8d8" fill-opacity="0.550"/><path d="M-7.500 5.500h3.300l1.300 -8.500a3 3 0 0 1 5.800 0l1.300 8.500h3.300" fill="none" stroke="#fff" stroke-width="2" stroke-opacity="0.950"/><path d="M-7 -1.300L-5.300 -3.600L-3 2L-0.500 -4.300L1.800 1.500L3.500 -1.200L5 0.500H7" fill="none" stroke="#111" stroke-width="1.700" stroke-linejoin="round" stroke-linecap="round"/></g></svg>
<svg style="left:804.7px;top:47.9px" width="25.0" height="25.0" viewBox="-12.50 -12.50 25.00 25.00" font-family="Liberation Sans, sans-serif"><defs><linearGradient id="o16" x1="0" x2="0" y1="0" y2="1"><stop offset="0" stop-color="#ffa868"/><stop offset="0.42" stop-color="#fa6408"/><stop offset="1" stop-color="#fa6408"/></linearGradient><radialGradient id="h16" cx="0.5" cy="0.18" r="0.55"><stop offset="0" stop-color="#fff" stop-opacity="0.55"/><stop offset="1" stop-color="#fff" stop-opacity="0"/></radialGradient></defs><circle r="11.50" fill="url(#o16)"/><ellipse cx="0" cy="-5.52" rx="8.28" ry="4.83" fill="url(#h16)"/><g transform="scale(0.983)"><path d="M-8.800 4h17.600" stroke="#fff" stroke-width="1.300"/><path d="M-5.500 -7l3.800 7" stroke="#fff" stroke-width="1.500" fill="none"/><path d="M-0.300 2.300l-4.200 -2.300l3.600 -2z" fill="#fff"/><path d="M1 1.500l3.800 -6.500" stroke="#fff" stroke-width="1.500" fill="none"/><path d="M6.300 -8l-4.200 2.200l3.700 2.300z" fill="#fff"/></g></svg>
<div class="b" style="left:29.000000000000004px;top:2px;width:18px;height:16.8px;background:#e3e8f1;border:1px solid #c5cddc;border-radius:2px;"></div>
<svg style="left:30.7px;top:2.8px" width="15.0" height="15.0" viewBox="-7.50 -7.50 15.00 15.00" font-family="Liberation Sans, sans-serif"><defs><linearGradient id="o17" x1="0" x2="0" y1="0" y2="1"><stop offset="0" stop-color="#5860c8"/><stop offset="0.42" stop-color="#3038b0"/><stop offset="1" stop-color="#3038b0"/></linearGradient><radialGradient id="h17" cx="0.5" cy="0.18" r="0.55"><stop offset="0" stop-color="#fff" stop-opacity="0.55"/><stop offset="1" stop-color="#fff" stop-opacity="0"/></radialGradient></defs><circle r="6.50" fill="url(#o17)"/><ellipse cx="0" cy="-3.12" rx="4.68" ry="2.73" fill="url(#h17)"/><g transform="scale(0.556)"><g transform="rotate(-32)"><path d="M-1.500 -3v9.500a1.500 1.500 0 0 0 3 0v-9.500z" fill="#fff"/><path d="M-1.700 -9.300a4 4 0 1 0 3.400 0v3.600l-1.700 1.100l-1.700 -1.100z" fill="#fff"/><path d="M-1.400 7.200l-1.800 2.600l1.400 1.200l1.800 -1.600l1.800 1.600l1.400 -1.200l-1.800 -2.600z" fill="#fff"/></g></g></svg>
<div class="b" style="left:47.0px;top:2px;width:18px;height:16.8px;background:#e3e8f1;border:1px solid #c5cddc;border-radius:2px;"></div>
<svg style="left:48.7px;top:2.8px" width="15.0" height="15.0" viewBox="-7.50 -7.50 15.00 15.00" font-family="Liberation Sans, sans-serif"><defs><linearGradient id="o18" x1="0" x2="0" y1="0" y2="1"><stop offset="0" stop-color="#5860c8"/><stop offset="0.42" stop-color="#3038b0"/><stop offset="1" stop-color="#3038b0"/></linearGradient><radialGradient id="h18" cx="0.5" cy="0.18" r="0.55"><stop offset="0" stop-color="#fff" stop-opacity="0.55"/><stop offset="1" stop-color="#fff" stop-opacity="0"/></radialGradient></defs><circle r="6.50" fill="url(#o18)"/><ellipse cx="0" cy="-3.12" rx="4.68" ry="2.73" fill="url(#h18)"/><g transform="scale(0.556)"><rect x="-4.700" y="-4.700" width="9.400" height="9.400" fill="#fff"/></g></svg>
<div class="b" style="left:65.39999999999999px;top:2px;width:18px;height:16.8px;background:#e3e8f1;border:1px solid #c5cddc;border-radius:2px;"></div>
<svg style="left:67.1px;top:2.8px" width="15.0" height="15.0" viewBox="-7.50 -7.50 15.00 15.00" font-family="Liberation Sans, sans-serif"><defs><linearGradient id="o19" x1="0" x2="0" y1="0" y2="1"><stop offset="0" stop-color="#5860c8"/><stop offset="0.42" stop-color="#3038b0"/><stop offset="1" stop-color="#3038b0"/></linearGradient><radialGradient id="h19" cx="0.5" cy="0.18" r="0.55"><stop offset="0" stop-color="#fff" stop-opacity="0.55"/><stop offset="1" stop-color="#fff" stop-opacity="0"/></radialGradient></defs><circle r="6.50" fill="url(#o19)"/><ellipse cx="0" cy="-3.12" rx="4.68" ry="2.73" fill="url(#h19)"/><g transform="scale(0.556)"><path d="M0 -7.300a5.800 5.800 0 0 1 3.500 10.400l-0.500 2.300h-6l-0.500 -2.300a5.800 5.800 0 0 1 3.500 -10.400z" fill="none" stroke="#fff" stroke-width="1.900"/><path d="M-2.800 6.600h5.600M-2.100 8.300h4.200" stroke="#fff" stroke-width="1.300"/></g></svg>
<div class="b" style="left:83.5px;top:2px;width:18px;height:16.8px;background:#e3e8f1;border:1px solid #c5cddc;border-radius:2px;"></div>
<svg style="left:85.2px;top:2.8px" width="15.0" height="15.0" viewBox="-7.50 -7.50 15.00 15.00" font-family="Liberation Sans, sans-serif"><defs><linearGradient id="o20" x1="0" x2="0" y1="0" y2="1"><stop offset="0" stop-color="#5860c8"/><stop offset="0.42" stop-color="#3038b0"/><stop offset="1" stop-color="#3038b0"/></linearGradient><radialGradient id="h20" cx="0.5" cy="0.18" r="0.55"><stop offset="0" stop-color="#fff" stop-opacity="0.55"/><stop offset="1" stop-color="#fff" stop-opacity="0"/></radialGradient></defs><circle r="6.50" fill="url(#o20)"/><ellipse cx="0" cy="-3.12" rx="4.68" ry="2.73" fill="url(#h20)"/><g transform="scale(0.556)"><path d="M0 -7.300a6 6 0 0 1 3.700 10.700l-0.600 1.900h-6.200l-0.600 -1.900a6 6 0 0 1 3.700 -10.700z" fill="#fff"/><path d="M-2.700 6.600h5.400M-2 8.200h4" stroke="#fff" stroke-width="1.300"/></g></svg>
<div class="b" style="left:101.6px;top:2px;width:18px;height:16.8px;background:#e3e8f1;border:1px solid #c5cddc;border-radius:2px;"></div>
<svg style="left:103.3px;top:2.8px" width="15.0" height="15.0" viewBox="-7.50 -7.50 15.00 15.00" font-family="Liberation Sans, sans-serif"><defs><linearGradient id="o21" x1="0" x2="0" y1="0" y2="1"><stop offset="0" stop-color="#5860c8"/><stop offset="0.42" stop-color="#3038b0"/><stop offset="1" stop-color="#3038b0"/></linearGradient><radialGradient id="h21" cx="0.5" cy="0.18" r="0.55"><stop offset="0" stop-color="#fff" stop-opacity="0.55"/><stop offset="1" stop-color="#fff" stop-opacity="0"/></radialGradient></defs><circle r="6.50" fill="url(#o21)"/><ellipse cx="0" cy="-3.12" rx="4.68" ry="2.73" fill="url(#h21)"/><g transform="scale(0.556)"><path d="M-1.300 -9.300c-2.300 -0.500 -3.300 0.700 -3.300 3.200v11.200c0 2.500 -1 3.700 -3.300 3.200" fill="none" stroke="#fff" stroke-width="1.500" stroke-linecap="round"/><text x="3.600" y="2.300" font-size="11.500" fill="#fff" text-anchor="middle" textLength="11.800" lengthAdjust="spacingAndGlyphs">ac</text></g></svg>
<svg style="left:134.500px;top:8px" width="6" height="7"><path d="M0.500 0.500h5" stroke="#333" stroke-width="1"/><path d="M0.300 3h5.400l-2.700 3z" fill="#333"/></svg>
<svg style="left:3.5px;top:2.5px" width="15.0" height="15.0" viewBox="0 0 15 15"><path d="M6.500 8c0.800 -1.800 1.500 -2.800 2.100 -1.200c0.500 1.500 0.900 4.500 1.500 5.500c0.500 0.800 0.900 -0.500 1.300 -2.500" fill="none" stroke="#b8d870" stroke-width="0.900"/><path d="M8.500 9c0.600 -1.500 1.100 -1.500 1.500 0c0.500 1.800 1 3.200 1.600 3.200c0.600 0 1 -1.500 1.400 -2.500" fill="none" stroke="#f0c060" stroke-width="0.900"/><path d="M0.800 4.200L3 3.400L5.300 9.800C7 6.200 9.800 3 13.800 1.300L14.300 2.500C10.600 4.800 7.800 8.500 6 13.300L4.200 13.500Z" fill="#c8281c"/></svg>
<svg style="left:224.5px;top:121px" width="14.2" height="14.2" viewBox="0 0 15 15"><path d="M6.500 8c0.800 -1.800 1.500 -2.800 2.100 -1.200c0.500 1.500 0.900 4.500 1.500 5.500c0.500 0.800 0.900 -0.500 1.300 -2.500" fill="none" stroke="#b8d870" stroke-width="0.900"/><path d="M8.500 9c0.600 -1.500 1.100 -1.500 1.500 0c0.500 1.800 1 3.200 1.600 3.200c0.600 0 1 -1.500 1.400 -2.500" fill="none" stroke="#f0c060" stroke-width="0.900"/><path d="M0.800 4.200L3 3.400L5.300 9.800C7 6.200 9.800 3 13.800 1.300L14.300 2.500C10.600 4.800 7.800 8.500 6 13.300L4.200 13.500Z" fill="#c8281c"/></svg>
<svg style="left:752px;top:121px" width="14.2" height="14.2" viewBox="0 0 15 15"><path d="M6.500 8c0.800 -1.800 1.500 -2.800 2.100 -1.200c0.500 1.500 0.900 4.500 1.500 5.500c0.500 0.800 0.900 -0.500 1.300 -2.500" fill="none" stroke="#b8d870" stroke-width="0.900"/><path d="M8.500 9c0.600 -1.500 1.100 -1.500 1.500 0c0.500 1.800 1 3.200 1.600 3.200c0.600 0 1 -1.500 1.400 -2.500" fill="none" stroke="#f0c060" stroke-width="0.900"/><path d="M0.800 4.200L3 3.400L5.300 9.800C7 6.200 9.800 3 13.800 1.300L14.300 2.500C10.600 4.800 7.800 8.500 6 13.300L4.200 13.500Z" fill="#c8281c"/></svg>
<svg style="left:1115px;top:36px" width="152" height="68" viewBox="0 0 1267 567"><path d="M248 112L300 100L362 305C420 175 520 75 640 30L658 78C530 125 425 250 368 396L320 402Z" fill="#e2001a"/></svg>
<div class="t" style="left:1124.0px;top:52.4px;font-size:31.3px;line-height:37.6px;color:#1f2b86;font-weight:bold;font-style:italic;transform:scaleX(0.995);-webkit-text-stroke:0.800px #1f2b86;">A</div>
<div class="t" style="left:1165.0px;top:52.4px;font-size:31.3px;line-height:37.6px;color:#1f2b86;font-weight:bold;font-style:italic;transform:scaleX(1.084);-webkit-text-stroke:0.800px #1f2b86;">A</div>
<div class="t" style="left:1188.5px;top:52.4px;font-size:31.3px;line-height:37.6px;color:#1f2b86;font-weight:bold;font-style:italic;transform:scaleX(0.973);-webkit-text-stroke:0.800px #1f2b86;">N</div>
<div class="t" style="left:1213.0px;top:52.4px;font-size:31.3px;line-height:37.6px;color:#1f2b86;font-weight:bold;font-style:italic;transform:scaleX(0.994);-webkit-text-stroke:0.800px #1f2b86;">T</div>
<div class="t" style="left:1229.5px;top:52.4px;font-size:31.3px;line-height:37.6px;color:#1f2b86;font-weight:bold;font-style:italic;transform:scaleX(1.006);-webkit-text-stroke:0.800px #1f2b86;">E</div>
<div class="t" style="left:1249.5px;top:52.4px;font-size:31.3px;line-height:37.6px;color:#1f2b86;font-weight:bold;font-style:italic;transform:scaleX(1.078);-webkit-text-stroke:0.800px #1f2b86;">S</div>
<div class="t" style="left:1122.8px;top:87.1px;font-size:10.4px;line-height:12.5px;color:#1f2b86;font-weight:bold;font-style:italic;transform:scaleX(1.061);-webkit-text-stroke:0.300px #1f2b86;">enlightening spectroscopy</div>
<svg style="left:18px;top:236px" width="20" height="20" viewBox="-10 -10 20 20" font-family="Liberation Sans, sans-serif"><defs><linearGradient id="q22" x1="0" x2="0" y1="0" y2="1"><stop offset="0" stop-color="#7880d8"/><stop offset="0.45" stop-color="#3038b0"/><stop offset="1" stop-color="#3038b0"/></linearGradient></defs><rect x="-10" y="-10" width="20" height="20" rx="2" fill="url(#q22)"/><g transform="scale(0.950)"><g fill="#fff"><rect x="-2.300" y="-9.300" width="4.600" height="5" rx="0.600" transform="rotate(0)"/><rect x="-2.300" y="-9.300" width="4.600" height="5" rx="0.600" transform="rotate(45)"/><rect x="-2.300" y="-9.300" width="4.600" height="5" rx="0.600" transform="rotate(90)"/><rect x="-2.300" y="-9.300" width="4.600" height="5" rx="0.600" transform="rotate(135)"/><rect x="-2.300" y="-9.300" width="4.600" height="5" rx="0.600" transform="rotate(180)"/><rect x="-2.300" y="-9.300" width="4.600" height="5" rx="0.600" transform="rotate(225)"/><rect x="-2.300" y="-9.300" width="4.600" height="5" rx="0.600" transform="rotate(270)"/><rect x="-2.300" y="-9.300" width="4.600" height="5" rx="0.600" transform="rotate(315)"/><circle r="7"/></g><circle r="3.100" fill="#2830a8"/></g></svg>
<svg style="left:53.4px;top:236px" width="20" height="20" viewBox="-10 -10 20 20" font-family="Liberation Sans, sans-serif"><defs><linearGradient id="q23" x1="0" x2="0" y1="0" y2="1"><stop offset="0" stop-color="#4cb44c"/><stop offset="0.45" stop-color="#0b820b"/><stop offset="1" stop-color="#0b820b"/></linearGradient></defs><rect x="-10" y="-10" width="20" height="20" rx="2" fill="url(#q23)"/><g transform="scale(0.950)"><path d="M0 -9a6.800 6.800 0 0 1 4.300 12l-0.800 2.500h-7l-0.800 -2.500a6.800 6.800 0 0 1 4.300 -12z" fill="#0a6a0a" stroke="#bfe8bf" stroke-width="1.500"/><path d="M-3.300 6.500h6.600v3h-6.600z" fill="#d8f0d8"/><ellipse cx="0" cy="-5" rx="4.200" ry="2.600" fill="#fff" fill-opacity="0.250"/></g></svg>
<svg style="left:88.8px;top:236px" width="20" height="20" viewBox="-10 -10 20 20" font-family="Liberation Sans, sans-serif"><defs><linearGradient id="q24" x1="0" x2="0" y1="0" y2="1"><stop offset="0" stop-color="#4cb44c"/><stop offset="0.45" stop-color="#0b820b"/><stop offset="1" stop-color="#0b820b"/></linearGradient></defs><rect x="-10" y="-10" width="20" height="20" rx="2" fill="url(#q24)"/><g transform="scale(0.950)"><path d="M0 -9.300a7 7 0 0 1 4.500 12.300l-0.800 2.500h-7.400l-0.800 -2.500a7 7 0 0 1 4.500 -12.300z" fill="#fff"/><path d="M-3.500 6.300h7v3.200h-7z" fill="#e4f4e4"/></g></svg>
<svg style="left:124.2px;top:236px" width="20" height="20" viewBox="-10 -10 20 20" font-family="Liberation Sans, sans-serif"><defs><linearGradient id="q25" x1="0" x2="0" y1="0" y2="1"><stop offset="0" stop-color="#7880d8"/><stop offset="0.45" stop-color="#3038b0"/><stop offset="1" stop-color="#3038b0"/></linearGradient></defs><rect x="-10" y="-10" width="20" height="20" rx="2" fill="url(#q25)"/><g transform="scale(0.950)"><path d="M-0.800 -9.300c-2.600 -0.500 -3.600 0.700 -3.600 3.200v11.200c0 2.500 -1 3.700 -3.600 3.200" fill="none" stroke="#fff" stroke-width="1.600" stroke-linecap="round"/><text x="4" y="3.300" font-size="12.500" fill="#fff" text-anchor="middle" textLength="11.500" lengthAdjust="spacingAndGlyphs">ac</text></g></svg>
<svg style="left:159.6px;top:236px" width="20" height="20" viewBox="-10 -10 20 20" font-family="Liberation Sans, sans-serif"><defs><linearGradient id="q26" x1="0" x2="0" y1="0" y2="1"><stop offset="0" stop-color="#4cb44c"/><stop offset="0.45" stop-color="#0b820b"/><stop offset="1" stop-color="#0b820b"/></linearGradient></defs><rect x="-10" y="-10" width="20" height="20" rx="2" fill="url(#q26)"/><g transform="scale(0.950)"><path d="M-3.800 -5.200a6.800 6.800 0 1 0 7.600 0" fill="none" stroke="#fff" stroke-width="2.300"/><path d="M0 -8.500v7.500" stroke="#fff" stroke-width="2.300"/></g></svg>
<svg style="left:236.7px;top:169.6px" width="18" height="18" viewBox="0 0 18 18"><path d="M1 1.500h5.500l1 1.700h8v13.800H1z" fill="#8a6a08"/><path d="M2.500 7h14.500l-1.500 10H1z" fill="#d6ac0c"/></svg>
<svg style="left:280px;top:170.6px" width="18" height="18" viewBox="0 0 18 18"><rect x="0" y="0.700" width="18" height="17" rx="0.800" fill="#4a7ad8"/><rect x="2.200" y="7.500" width="13.600" height="10.200" fill="#dcdce0"/><rect x="3" y="0.700" width="12" height="4.800" fill="#9aa0ae"/><rect x="5.500" y="0.700" width="3" height="4" fill="#e8e8ee"/><rect x="10.500" y="1" width="1.800" height="3.600" fill="#5a6278"/></svg>
<svg style="left:333.600px;top:170px" width="20" height="18.500" viewBox="0 0 20 18.500"><rect width="20" height="18.500" fill="#f0f0f2" stroke="#dcdce0" stroke-width="0.600"/><path d="M1 12c2 -1 4 -3 6 -5c3 -3 6 -5.500 8.500 -5.500c1.500 0 2.500 1 3.500 2.500" fill="none" stroke="#e02020" stroke-width="1.500"/><path d="M1 9c1.500 5 3.500 7 5.500 5c2 -2 3 -7 5 -8c2 -1 3 4 4.500 6.500c1 1.500 2 0 3 -3" fill="none" stroke="#20c020" stroke-width="1.500"/><path d="M1 3c2 1.500 4 5 6 8c1.500 2.300 3 3 4.300 0.500c1 -2 2 -5 3.500 -5c1.500 0 2.500 4 4 6" fill="none" stroke="#2828c8" stroke-width="1.500"/></svg>
<div class="t" style="left:383.3px;top:165.7px;font-size:23.5px;line-height:28.2px;color:#0a68e4;font-weight:bold;font-style:italic;transform:scaleX(1.021);-webkit-text-stroke:0.700px #0a68e4;">S</div>
<div class="b" style="left:407.8px;top:167.6px;width:23.4px;height:23.4px;background:linear-gradient(#fde3a0,#fbcf70 45%,#f8bf4c 55%,#fbd27c);border:1px solid #d8a044;border-radius:3px;"></div>
<div class="t" style="left:412.8px;top:167.7px;font-size:15.8px;line-height:19.0px;color:#0a68e4;font-weight:bold;font-style:italic;transform:scaleX(1.139);-webkit-text-stroke:0.500px #0a68e4;">S</div>
<div class="b" style="left:412px;top:182.2px;width:11.5px;height:1.5px;background:#0a68e4;"></div>
<div class="t" style="left:421.5px;top:178.3px;font-size:10px;line-height:12.0px;color:#0a68e4;font-weight:bold;font-style:italic;transform:scaleX(1.146);-webkit-text-stroke:0.300px #0a68e4;">d</div>
<div class="b" style="left:416px;top:184.8px;width:4.5px;height:1.1px;background:#0a68e4;"></div>
<div class="b" style="left:416px;top:186.7px;width:4.5px;height:1.1px;background:#0a68e4;"></div>
<div class="t" style="left:440.2px;top:165.7px;font-size:23.5px;line-height:28.2px;color:#0a68e4;font-weight:bold;font-style:italic;transform:scaleX(0.990);-webkit-text-stroke:0.700px #0a68e4;">A</div>
<div class="t" style="left:469.3px;top:165.7px;font-size:23.5px;line-height:28.2px;color:#0a68e4;font-weight:bold;font-style:italic;transform:scaleX(0.954);-webkit-text-stroke:0.700px #0a68e4;">T</div>
<div class="t" style="left:384.8px;top:190.5px;font-size:22.5px;line-height:27.0px;color:#0a68e4;font-weight:bold;font-style:italic;transform:scaleX(0.923);-webkit-text-stroke:0.700px #0a68e4;">R</div>
<div class="t" style="left:411.3px;top:193.5px;font-size:11.5px;line-height:13.8px;color:#0a68e4;font-weight:bold;font-style:italic;transform:scaleX(1.324);">A</div>
<div class="t" style="left:420.8px;top:190.5px;font-size:22.5px;line-height:27.0px;color:#0a68e4;font-weight:bold;font-style:italic;transform:scaleX(1.040);-webkit-text-stroke:0.400px #0a68e4;">I</div>
<div class="t" style="left:439.3px;top:193.5px;font-size:11.5px;line-height:13.8px;color:#0a68e4;font-weight:bold;font-style:italic;transform:scaleX(1.204);">R</div>
<div class="t" style="left:449.3px;top:190.5px;font-size:22.5px;line-height:27.0px;color:#0a68e4;font-weight:bold;font-style:italic;transform:scaleX(1.040);-webkit-text-stroke:0.400px #0a68e4;">I</div>
<svg style="left:502px;top:179.4px" width="22" height="22" viewBox="-10 -10 22 22"><circle r="7.500" fill="#fdfdfd" stroke="#555" stroke-width="1.500"/><path d="M0 -4.800v9.600M-2 -3l2 -2l2 2M-2 3l2 2l2 -2" fill="none" stroke="#666" stroke-width="1.200"/><path d="M-2.300 -5.300h4.600M-2.300 5.300h4.600" stroke="#666" stroke-width="0.900"/><path d="M5.300 5.300l2 2" stroke="#111" stroke-width="1.600"/><path d="M7.300 4.900l2.600 2.600l-2.400 2.400l-2.600 -2.600z" fill="#000"/></svg>
<svg style="left:532.8px;top:178.7px" width="22" height="22" viewBox="-10 -10 22 22"><circle r="7.500" fill="#fdfdfd" stroke="#555" stroke-width="1.500"/><path d="M0 -5.800v11.600M-5.800 0h11.600" fill="none" stroke="#666" stroke-width="1.200"/><path d="M-1.600 -4l1.600 -1.700l1.600 1.700M-1.600 4l1.600 1.700l1.600 -1.700M-4 -1.600l-1.700 1.600l1.700 1.600M4 -1.600l1.700 1.600l-1.700 1.600" fill="none" stroke="#666" stroke-width="0.900"/><path d="M5.300 5.300l2 2" stroke="#111" stroke-width="1.600"/><path d="M7.300 4.900l2.600 2.600l-2.400 2.400l-2.600 -2.600z" fill="#000"/></svg>
<svg style="left:567px;top:179.4px" width="22" height="22" viewBox="-10 -10 22 22"><circle r="7.500" fill="#fdfdfd" stroke="#555" stroke-width="1.500"/><rect x="-4.300" y="-4.300" width="8.600" height="8.600" fill="#fff" stroke="#666" stroke-width="0.900" stroke-dasharray="1.300 0.900"/><path d="M5.300 5.300l2 2" stroke="#111" stroke-width="1.600"/><path d="M7.300 4.900l2.600 2.600l-2.400 2.400l-2.600 -2.600z" fill="#000"/></svg>
<svg style="left:763.600px;top:170.300px" width="18.500" height="18.500" viewBox="0 0 18.500 18.500"><rect width="18.500" height="18.500" rx="1.800" fill="#8c8c8c" stroke="#6e6e6e" stroke-width="0.800"/><circle cx="9.250" cy="9.250" r="7" fill="#d8d8d8" stroke="#5a5a5a" stroke-width="0.900"/><path d="M9.250 2.200a7 7 0 0 0 0 14.100z" fill="#bcbcbc"/><rect x="8.150" y="2" width="2.200" height="14.500" fill="#f4f4f4" stroke="#5a5a5a" stroke-width="0.700"/></svg>
<svg style="left:826px;top:169px" width="21" height="21" viewBox="-10.500 -10.500 21 21"><g fill="#8e8e8e"><rect x="-2.300" y="-10" width="4.600" height="5" rx="0.800" transform="rotate(0)"/><rect x="-2.300" y="-10" width="4.600" height="5" rx="0.800" transform="rotate(45)"/><rect x="-2.300" y="-10" width="4.600" height="5" rx="0.800" transform="rotate(90)"/><rect x="-2.300" y="-10" width="4.600" height="5" rx="0.800" transform="rotate(135)"/><rect x="-2.300" y="-10" width="4.600" height="5" rx="0.800" transform="rotate(180)"/><rect x="-2.300" y="-10" width="4.600" height="5" rx="0.800" transform="rotate(225)"/><rect x="-2.300" y="-10" width="4.600" height="5" rx="0.800" transform="rotate(270)"/><rect x="-2.300" y="-10" width="4.600" height="5" rx="0.800" transform="rotate(315)"/><circle r="7.500"/></g><circle r="3.900" fill="#fbfbfc"/></svg>
<svg style="left:893.800px;top:168px" width="22" height="22" viewBox="-11 -11 22 22"><defs><linearGradient id="stp" x1="0" x2="1" y1="0" y2="1"><stop offset="0" stop-color="#e05068"/><stop offset="0.450" stop-color="#c01c38"/><stop offset="1" stop-color="#b81830"/></linearGradient></defs><polygon points="9.98,4.13 4.13,9.98 -4.13,9.98 -9.98,4.13 -9.98,-4.13 -4.13,-9.98 4.13,-9.98 9.98,-4.13" fill="#e8a0ac"/><polygon points="8.59,3.56 3.56,8.59 -3.56,8.59 -8.59,3.56 -8.59,-3.56 -3.56,-8.59 3.56,-8.59 8.59,-3.56" fill="url(#stp)" stroke="#fff" stroke-width="0.500" stroke-opacity="0.700"/></svg>
<svg style="left:956.5px;top:170.2px" width="18" height="18" viewBox="0 0 18 18"><path d="M1 1.500h5.500l1 1.700h8v13.800H1z" fill="#6a6a6a"/><path d="M2.500 7h14.500l-1.500 10H1z" fill="#9a9a9a"/></svg>
<svg style="left:1006px;top:170.6px" width="18" height="18" viewBox="0 0 18 18"><rect x="0" y="0.700" width="18" height="17" rx="0.800" fill="#4a7ad8"/><rect x="2.200" y="7.500" width="13.600" height="10.200" fill="#dcdce0"/><rect x="3" y="0.700" width="12" height="4.800" fill="#9aa0ae"/><rect x="5.500" y="0.700" width="3" height="4" fill="#e8e8ee"/><rect x="10.500" y="1" width="1.800" height="3.600" fill="#5a6278"/></svg>
<svg style="left:1065.7px;top:170.6px" width="18" height="18" viewBox="0 0 18 18"><rect x="0" y="0.700" width="18" height="17" rx="0.800" fill="#4a7ad8"/><rect x="2.200" y="7.500" width="13.600" height="10.200" fill="#dcdce0"/><rect x="3" y="0.700" width="12" height="4.800" fill="#9aa0ae"/><rect x="5.500" y="0.700" width="3" height="4" fill="#e8e8ee"/><rect x="10.500" y="1" width="1.800" height="3.600" fill="#5a6278"/></svg>
</div></body></html>
